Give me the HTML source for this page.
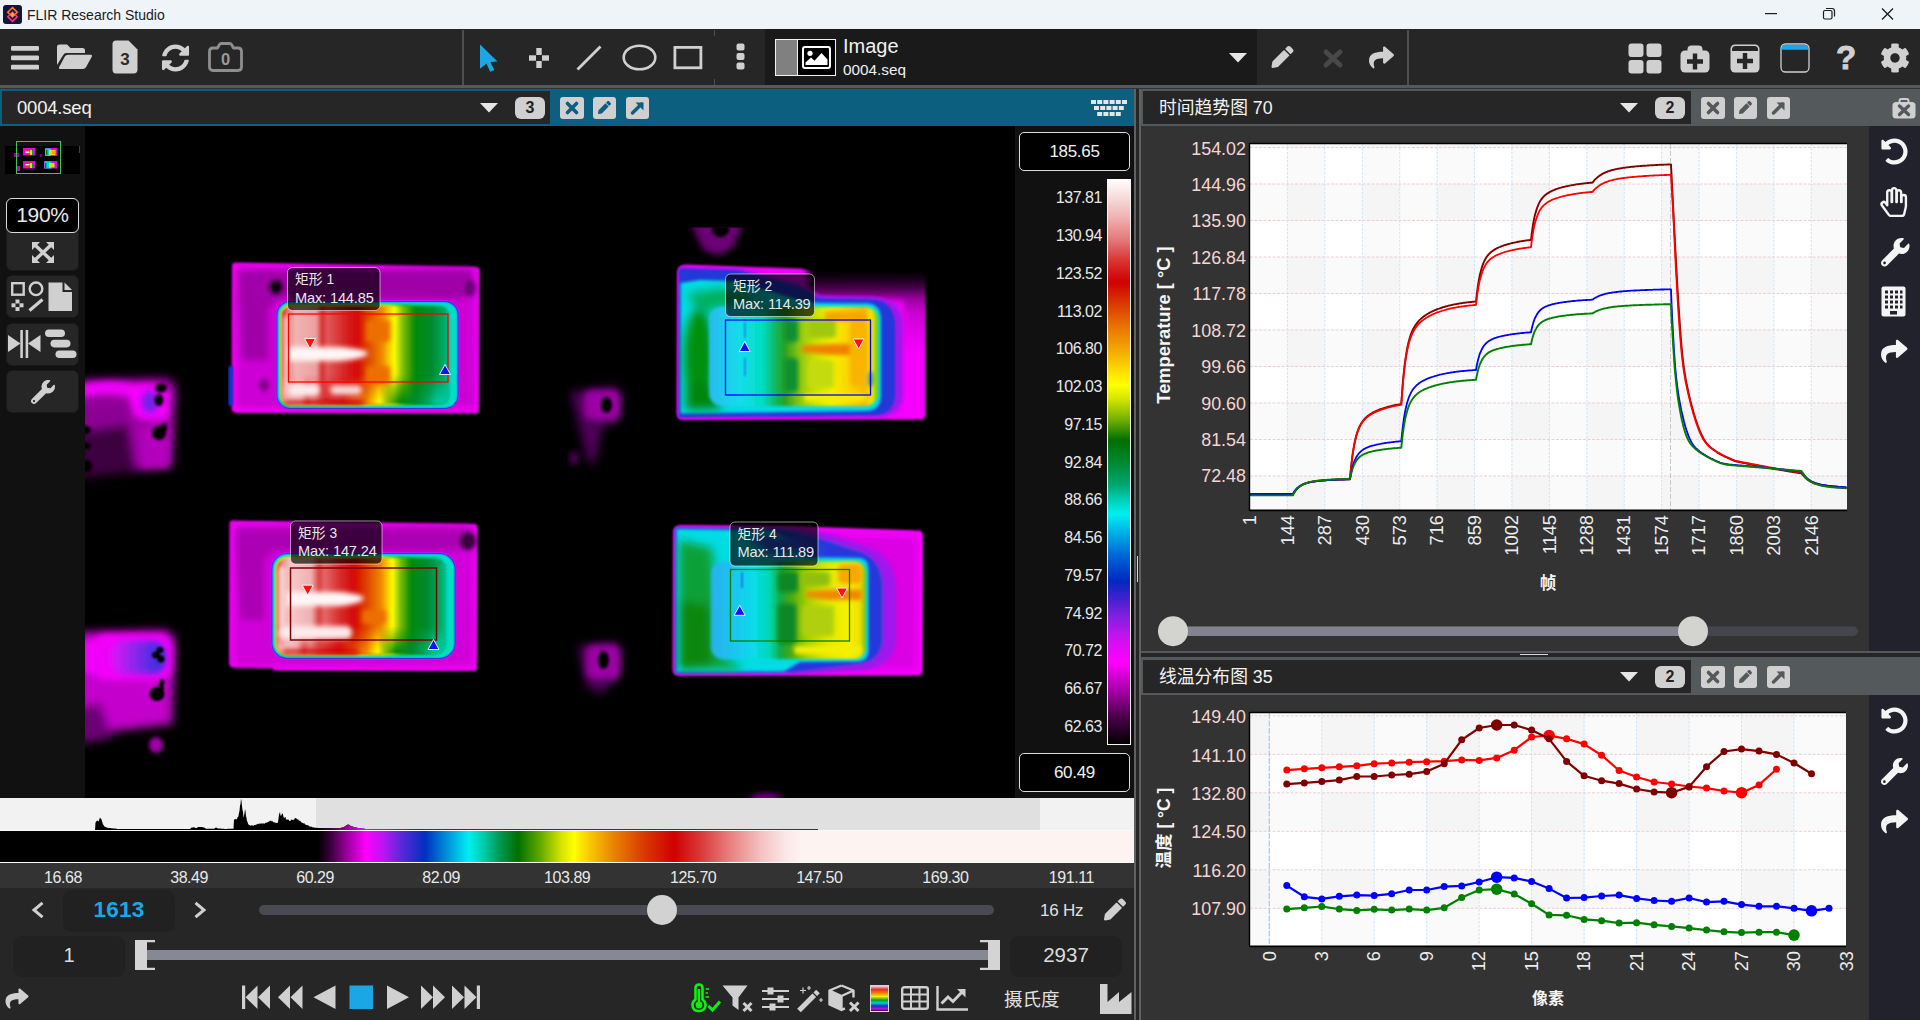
<!DOCTYPE html>
<html lang="zh"><head><meta charset="utf-8"><title>FLIR Research Studio</title>
<style>
*{box-sizing:border-box;margin:0;padding:0}
html,body{width:1920px;height:1020px;overflow:hidden;background:#262626}
body{position:relative;font-family:"Liberation Sans","Noto Sans CJK SC",sans-serif;color:#e6e6e6;font-size:16px}
.a{position:absolute}
.t{position:absolute;white-space:nowrap;line-height:1}
svg{position:absolute;overflow:visible}
.btn{position:absolute;background:#262626;border:1px solid #1a1a1a;border-radius:6px}
.badge{position:absolute;background:#d0d0d0;color:#222;border-radius:6px;font-weight:bold;font-size:16px;text-align:center;line-height:22px}
.sq{position:absolute;width:24px;height:22px;border-radius:3px}
.num{position:absolute;white-space:nowrap;line-height:1;font-size:16px;letter-spacing:-0.45px;text-align:right;color:#e8e8e8}
</style></head><body>
<!-- ===== title bar ===== -->
<div class="a" style="left:0;top:0;width:1920px;height:29px;background:#eff4f9"></div>
<svg style="left:3px;top:5px" width="19" height="19" viewBox="0 0 19 19">
 <rect x="0" y="0" width="19" height="19" rx="3" fill="#15143f"/>
 <path d="M9.5 2.6 L14.2 7.2 L9.5 11.8 L4.8 7.2 Z" fill="none" stroke="#ff7a1a" stroke-width="1.6"/>
 <path d="M9.5 7.2 L14.2 11.8 L9.5 16.4 L4.8 11.8 Z" fill="none" stroke="#ff2d8a" stroke-width="1.6"/>
 <path d="M7.2 9.5 L9.5 7.2 L11.8 9.5 L9.5 11.8 Z" fill="#ffb31a"/>
</svg>
<div class="t" style="left:27px;top:7.500px;font-size:14px;color:#1b1b1b">FLIR Research Studio</div>
<svg style="left:1760px;top:4px" width="140" height="20" viewBox="0 0 140 20">
 <path d="M5 9.600 H17" stroke="#1b1b1b" stroke-width="1.2" fill="none"/>
 <rect x="63.5" y="6.5" width="8.5" height="8.5" rx="1.5" stroke="#1b1b1b" stroke-width="1.2" fill="none"/>
 <path d="M66 4.5 H72 Q74.5 4.5 74.5 7 V12.5" stroke="#1b1b1b" stroke-width="1.2" fill="none"/>
 <path d="M122 4.5 L133 15.5 M133 4.5 L122 15.5" stroke="#1b1b1b" stroke-width="1.3" fill="none"/>
</svg>

<!-- ===== toolbar ===== -->
<div class="a" style="left:0;top:29px;width:1920px;height:56px;background:#262626"></div>
<div class="a" style="left:0;top:85px;width:1920px;height:3px;background:#54595b"></div>
<div class="a" style="left:0;top:88px;width:1920px;height:1px;background:#303436"></div>
<!-- combo dark -->
<div class="a" style="left:765px;top:29px;width:492px;height:56px;background:#1a1a1a"></div>
<!-- separators -->
<div class="a" style="left:462px;top:30px;width:2px;height:55px;background:#4c4f51"></div>
<div class="a" style="left:1407px;top:30px;width:2px;height:55px;background:#4c4f51"></div>
<div class="a" style="left:714px;top:30px;width:1px;height:6px;background:#4c4f51"></div>
<div class="a" style="left:714px;top:79px;width:1px;height:6px;background:#4c4f51"></div>

<!-- hamburger -->
<svg style="left:11px;top:46px" width="28" height="24" viewBox="0 0 28 24" fill="#d0d0d0">
 <rect x="0" y="0" width="28" height="4.8" rx="1.2"/><rect x="0" y="9.4" width="28" height="4.8" rx="1.2"/><rect x="0" y="18.8" width="28" height="4.8" rx="1.2"/>
</svg>
<!-- folder open -->
<svg style="left:57px;top:44px" width="36" height="26" viewBox="0 0 36 26" fill="#d0d0d0">
 <path d="M0 21 V3 Q0 0.5 2.5 0.5 H10 L13.5 4 H25.5 Q28 4 28 6.5 V9 H9.5 Q7.2 9 6.2 11 Z"/>
 <path d="M3.5 25 Q1.2 25 2.2 23 L7.8 12.6 Q8.8 10.8 11 10.8 H33.5 Q35.8 10.8 34.6 12.9 L29 23.2 Q28 25 25.8 25 Z"/>
</svg>
<!-- file 3 -->
<svg style="left:112px;top:40px" width="26" height="34" viewBox="0 0 26 34">
 <path d="M4 0.5 H16.5 L25.5 9.5 V29.5 Q25.5 33.5 21.5 33.5 H4 Q0.5 33.5 0.5 29.5 V4 Q0.5 0.5 4 0.5 Z" fill="#d0d0d0"/>
 <text x="13" y="24.5" font-family="Liberation Sans, sans-serif" font-weight="bold" font-size="17" text-anchor="middle" fill="#2a2a2a">3</text>
</svg>
<!-- refresh -->
<svg style="left:161px;top:44px" width="29" height="28" viewBox="0 0 512 512" fill="#d0d0d0">
 <path d="M370.7 133.3C339.5 104 298.9 88 255.8 88c-77.500.1-144.300 53.200-162.800 126.900-1.300 5.400-6.100 9.200-11.700 9.200H24.100c-7.500 0-13.200-6.800-11.800-14.200C33.900 94.900 134.800 8 256 8c66.400 0 126.800 26.100 171.300 68.700L463 41C478.100 25.900 504 36.600 504 57.900V192c0 13.300-10.700 24-24 24H345.900c-21.400 0-32.100-25.900-17-41l41.800-41.700zM32 296h134.100c21.400 0 32.100 25.900 17 41l-41.800 41.800c31.300 29.300 71.800 45.300 114.900 45.300 77.400-.1 144.300-53.100 162.800-126.800 1.300-5.400 6.100-9.200 11.700-9.200h57.300c7.500 0 13.200 6.800 11.800 14.200C478.100 417.100 377.200 504 256 504c-66.400 0-126.800-26.100-171.300-68.700L49 471c-15.100 15.100-41 4.400-41-16.900V320c0-13.300 10.700-24 24-24z"/>
</svg>
<!-- camera 0 -->
<svg style="left:208px;top:42px" width="35" height="30" viewBox="0 0 35 30">
 <path d="M5 6 H9.500 L11.500 2.500 Q12 1.500 13.500 1.500 H21.500 Q23 1.500 23.500 2.500 L25.500 6 H30 Q33.500 6 33.500 9.500 V25 Q33.500 28.500 30 28.500 H5 Q1.500 28.500 1.500 25 V9.500 Q1.500 6 5 6 Z" fill="none" stroke="#8e8e8e" stroke-width="2.800" stroke-linejoin="round"/>
 <text x="17.500" y="23" font-family="Liberation Sans, sans-serif" font-weight="bold" font-size="16.500" text-anchor="middle" fill="#9a9a9a">0</text>
</svg>

<!-- arrow tool (blue) -->
<svg style="left:479px;top:44px" width="20" height="28" viewBox="0 0 20 28">
 <path d="M1 0.500 L18.500 17.500 L11.300 18 L15.300 26 L11.200 27.800 L7.400 19.600 L1 24.800 Z" fill="#1ba7e6"/>
</svg>
<!-- cross -->
<svg style="left:529px;top:48px" width="20" height="20" viewBox="0 0 20 20" fill="#d0d0d0">
 <rect x="7.300" y="0" width="5.400" height="7"/><rect x="7.300" y="13" width="5.400" height="7"/>
 <rect x="0" y="7.300" width="7" height="5.400"/><rect x="13" y="7.300" width="7" height="5.400"/>
</svg>
<!-- line -->
<svg style="left:576px;top:45px" width="26" height="26" viewBox="0 0 26 26">
 <path d="M1.500 24.500 L24.500 1.500" stroke="#d0d0d0" stroke-width="2.800" fill="none"/>
</svg>
<!-- ellipse -->
<svg style="left:622px;top:44px" width="35" height="27" viewBox="0 0 35 27">
 <ellipse cx="17.500" cy="13.500" rx="15.800" ry="11.800" fill="none" stroke="#d0d0d0" stroke-width="2.600"/>
</svg>
<!-- rect -->
<svg style="left:673px;top:46px" width="30" height="24" viewBox="0 0 30 24">
 <rect x="1.900" y="1.400" width="26" height="20.400" fill="none" stroke="#d0d0d0" stroke-width="2.800"/>
</svg>
<!-- dots -->
<svg style="left:736px;top:43px" width="9" height="28" viewBox="0 0 9 28" fill="#d0d0d0">
 <rect x="0.500" y="0.500" width="8" height="7" rx="2"/><rect x="0.500" y="10" width="8" height="7" rx="2"/><rect x="0.500" y="19.600" width="8" height="7" rx="2"/>
</svg>
<!-- image preview -->
<div class="a" style="left:775px;top:39px;width:61px;height:37px;border:1px solid #f2f2f2;background:#000"></div>
<div class="a" style="left:776px;top:40px;width:21px;height:35px;background:#808080"></div>
<div class="a" style="left:797px;top:40px;width:1px;height:35px;background:#f2f2f2"></div>
<svg style="left:802px;top:46px" width="29" height="23" viewBox="0 0 29 23">
 <rect x="1" y="1" width="27" height="21" rx="2" fill="none" stroke="#fff" stroke-width="2"/>
 <circle cx="8" cy="7.300" r="2.600" fill="#fff"/>
 <path d="M3.500 19 V16.500 L9 11.500 L12.500 14.700 L19.500 7 L25.500 13.500 V19 Z" fill="#fff"/>
</svg>
<div class="t" style="left:843px;top:36px;font-size:20px;color:#f0f0f0">Image</div>
<div class="t" style="left:843px;top:62px;font-size:15.300px;color:#f0f0f0">0004.seq</div>
<!-- combo triangle -->
<svg style="left:1229px;top:53px" width="18" height="10" viewBox="0 0 18 10"><path d="M0 0 H18 L9 9.600 Z" fill="#e6e6e6"/></svg>
<!-- pencil -->
<svg style="left:1271px;top:46px" width="23" height="22" viewBox="0 0 512 512" fill="#d0d0d0">
 <path d="M497.900 142.100l-46.100 46.100c-4.700 4.700-12.300 4.700-17 0l-111-111c-4.700-4.700-4.700-12.300 0-17l46.100-46.100c18.700-18.700 49.100-18.700 67.900 0l60.100 60.100c18.800 18.700 18.800 49.100 0 67.900zM284.200 99.800L21.600 362.400.4 483.900c-2.900 16.400 11.400 30.600 27.800 27.800l121.500-21.300 262.600-262.600c4.700-4.700 4.700-12.300 0-17l-111-111c-4.800-4.700-12.400-4.700-17.100 0z"/>
</svg>
<!-- x dim -->
<svg style="left:1323px;top:49px" width="20" height="19" viewBox="0 0 20 19">
 <path d="M3 3 L17 16 M17 3 L3 16" stroke="#484848" stroke-width="5" fill="none" stroke-linecap="round"/>
</svg>
<!-- share -->
<svg style="left:1367px;top:45px" width="29" height="25" viewBox="0 0 512 512" fill="#d0d0d0">
 <path d="M503.700 189.800L327.700 37.900C312.300 24.500 288 35.300 288 56v80.100C127.400 137.900 0 170.100 0 322.300c0 61.400 39.600 122.300 83.300 154.100 13.700 9.900 33.100-2.500 28.100-18.600C66.100 312.800 133 274.300 288 272.100V360c0 20.700 24.300 31.500 39.700 18.200l176-152c11.100-9.600 11.100-26.800 0-36.400z"/>
</svg>
<!-- grid4 -->
<svg style="left:1628px;top:43px" width="34" height="31" viewBox="0 0 34 31" fill="#d0d0d0">
 <rect x="0.500" y="0.500" width="15" height="13.500" rx="3"/><rect x="18.500" y="0.500" width="15" height="13.500" rx="3"/>
 <rect x="0.500" y="17" width="15" height="13.500" rx="3"/><rect x="18.500" y="17" width="15" height="13.500" rx="3"/>
</svg>
<!-- plus-medical -->
<svg style="left:1680px;top:45px" width="30" height="28" viewBox="0 0 30 28">
 <path d="M7.500 7 V4.500 Q7.500 0.500 11.500 0.500 H18.500 Q22.500 0.500 22.500 4.500 V7 Z" fill="#d0d0d0"/>
 <rect x="0.500" y="5.500" width="29" height="22" rx="4.500" fill="#d0d0d0"/>
 <path d="M15 8.500 V24.500 M7 16.500 H23" stroke="#262626" stroke-width="4.400" fill="none"/>
</svg>
<!-- plus-window -->
<svg style="left:1730px;top:44px" width="30" height="29" viewBox="0 0 30 29">
 <rect x="0.500" y="0.500" width="29" height="28" rx="4.500" fill="#d0d0d0"/>
 <path d="M2 7 V5.500 Q2 2 5.500 2 H24.500 Q28 2 28 5.500 V7 Z" fill="#262626"/>
 <path d="M15 9 V25 M7 17 H23" stroke="#262626" stroke-width="4.400" fill="none"/>
</svg>
<!-- window blue -->
<svg style="left:1780px;top:43px" width="30" height="30" viewBox="0 0 30 30">
 <rect x="1" y="1" width="28" height="28" rx="4.500" fill="#262626" stroke="#d0d0d0" stroke-width="1.300"/>
 <path d="M1.700 6.800 V5.500 Q1.700 1.700 5.500 1.700 H24.500 Q28.300 1.700 28.300 5.500 V6.800 Z" fill="#1ba7e6"/>
</svg>
<!-- question -->
<div class="t" style="left:1836px;top:40.500px;width:19px;text-align:center;font-size:33px;font-weight:bold;color:#d0d0d0;-webkit-text-stroke:0.9px #d0d0d0">?</div>
<!-- gear -->
<svg style="left:1880px;top:43px" width="30" height="30" viewBox="0 0 512 512" fill="#d0d0d0">
 <path d="M487.400 315.700l-42.600-24.600c4.300-23.200 4.300-47 0-70.200l42.600-24.600c4.900-2.800 7.100-8.600 5.500-14-11.100-35.600-30-67.800-54.700-94.600-3.800-4.100-10-5.100-14.800-2.300L380.800 110c-17.900-15.400-38.500-27.300-60.800-35.100V25.800c0-5.600-3.900-10.500-9.400-11.700-36.700-8.200-74.300-7.800-109.200 0-5.500 1.200-9.400 6.100-9.400 11.700V75c-22.200 7.900-42.800 19.800-60.800 35.100L88.700 85.500c-4.900-2.800-11-1.900-14.800 2.300-24.700 26.700-43.600 58.900-54.700 94.600-1.700 5.400.6 11.200 5.500 14L67.300 221c-4.300 23.200-4.300 47 0 70.200l-42.600 24.600c-4.900 2.800-7.100 8.600-5.500 14 11.100 35.600 30 67.800 54.700 94.600 3.800 4.100 10 5.100 14.800 2.300l42.600-24.600c17.900 15.400 38.500 27.300 60.800 35.100v49.200c0 5.600 3.900 10.500 9.400 11.700 36.700 8.200 74.300 7.800 109.200 0 5.500-1.200 9.400-6.100 9.400-11.700v-49.200c22.200-7.900 42.800-19.800 60.800-35.100l42.600 24.600c4.900 2.800 11 1.900 14.800-2.300 24.700-26.700 43.600-58.900 54.700-94.600 1.500-5.500-.7-11.300-5.600-14.100zM256 336c-44.100 0-80-35.900-80-80s35.900-80 80-80 80 35.900 80 80-35.900 80-80 80z"/>
</svg>
<!-- ===== left tab bar ===== -->
<div class="a" style="left:0;top:89px;width:1134px;height:37px;background:#0d5f7f"></div>
<div class="a" style="left:2px;top:91px;width:548px;height:33px;background:#262626"></div>
<div class="t" style="left:17px;top:99px;font-size:18.500px;letter-spacing:-0.200px;color:#f2f2f2">0004.seq</div>
<svg style="left:480px;top:103px" width="18" height="10" viewBox="0 0 18 10"><path d="M0 0 H18 L9 9.600 Z" fill="#e6e6e6"/></svg>
<div class="badge" style="left:515px;top:97px;width:30px;height:22px">3</div>
<div class="sq" style="left:560px;top:97px;background:#d0d0d0"></div>
<svg style="left:565px;top:101px" width="14" height="14" viewBox="0 0 14 14"><path d="M2.500 2.500 L11.500 11.500 M11.500 2.500 L2.500 11.500" stroke="#0d5f7f" stroke-width="3.600" stroke-linecap="round" fill="none"/></svg>
<div class="sq" style="left:593px;top:97px;width:23px;background:#d0d0d0"></div>
<svg style="left:598px;top:101px" width="13" height="13" viewBox="0 0 512 512" fill="#0d5f7f"><path d="M497.900 142.100l-46.100 46.100c-4.700 4.700-12.300 4.700-17 0l-111-111c-4.700-4.700-4.700-12.300 0-17l46.100-46.100c18.700-18.700 49.100-18.700 67.900 0l60.100 60.100c18.800 18.700 18.800 49.100 0 67.900zM284.200 99.800L21.600 362.400.4 483.900c-2.900 16.400 11.400 30.600 27.800 27.800l121.500-21.300 262.600-262.600c4.700-4.700 4.700-12.300 0-17l-111-111c-4.800-4.700-12.400-4.700-17.100 0z"/></svg>
<div class="sq" style="left:626px;top:97px;width:23px;background:#d0d0d0"></div>
<svg style="left:630px;top:101px" width="15" height="14" viewBox="0 0 15 14"><path d="M2.500 12 L11.500 3" stroke="#0d5f7f" stroke-width="3.400" fill="none" stroke-linecap="round"/><path d="M5.500 1.500 H13.500 V9.500 Z" fill="#0d5f7f"/></svg>
<!-- grid dots icon -->
<svg style="left:1091px;top:99.500px" width="37" height="17" viewBox="0 0 37 17" fill="#e6e6e6">
 <rect x="0" y="0" width="5" height="4"/><rect x="6.200" y="0" width="5" height="4"/><rect x="12.400" y="0" width="5" height="4"/><rect x="18.600" y="0" width="5" height="4"/><rect x="24.800" y="0" width="5" height="4"/><rect x="31" y="0" width="5" height="4"/>
 <rect x="3" y="6" width="5" height="4"/><rect x="9.200" y="6" width="5" height="4"/><rect x="15.400" y="6" width="5" height="4"/><rect x="21.600" y="6" width="5" height="4"/><rect x="27.800" y="6" width="5" height="4"/>
 <rect x="6.200" y="12" width="5" height="4"/><rect x="12.400" y="12" width="5" height="4"/><rect x="18.600" y="12" width="5" height="4"/><rect x="24.800" y="12" width="5" height="4"/>
</svg>

<!-- ===== splitter between panels ===== -->
<div class="a" style="left:1134px;top:89px;width:7px;height:931px;background:#262626"></div>
<div class="a" style="left:1134px;top:89px;width:2px;height:931px;background:#606262"></div>
<div class="a" style="left:1139px;top:89px;width:2px;height:931px;background:#606262"></div>
<div class="a" style="left:1137px;top:556px;width:1px;height:26px;background:#d8d8d8"></div>

<!-- ===== right tab bar 1 ===== -->
<div class="a" style="left:1141px;top:89px;width:779px;height:37px;background:#54595b"></div>
<div class="a" style="left:1143px;top:91px;width:548px;height:33px;background:#262626"></div>
<div class="t" style="left:1159px;top:99.500px;font-size:17.800px;color:#f2f2f2">时间趋势图 70</div>
<svg style="left:1620px;top:103px" width="18" height="10" viewBox="0 0 18 10"><path d="M0 0 H18 L9 9.600 Z" fill="#e6e6e6"/></svg>
<div class="badge" style="left:1655px;top:97px;width:30px;height:22px">2</div>
<div class="sq" style="left:1701px;top:97px;background:#d0d0d0"></div>
<svg style="left:1706px;top:101px" width="14" height="14" viewBox="0 0 14 14"><path d="M2.500 2.500 L11.500 11.500 M11.500 2.500 L2.500 11.500" stroke="#54595b" stroke-width="3.600" stroke-linecap="round" fill="none"/></svg>
<div class="sq" style="left:1734px;top:97px;width:23px;background:#d0d0d0"></div>
<svg style="left:1739px;top:101px" width="13" height="13" viewBox="0 0 512 512" fill="#54595b"><path d="M497.900 142.100l-46.100 46.100c-4.700 4.700-12.300 4.700-17 0l-111-111c-4.700-4.700-4.700-12.300 0-17l46.100-46.100c18.700-18.700 49.100-18.700 67.900 0l60.100 60.100c18.800 18.700 18.800 49.100 0 67.900zM284.200 99.800L21.600 362.400.4 483.900c-2.900 16.400 11.400 30.600 27.800 27.800l121.500-21.300 262.600-262.600c4.700-4.700 4.700-12.300 0-17l-111-111c-4.800-4.700-12.400-4.700-17.100 0z"/></svg>
<div class="sq" style="left:1767px;top:97px;width:23px;background:#d0d0d0"></div>
<svg style="left:1771px;top:101px" width="15" height="14" viewBox="0 0 15 14"><path d="M2.500 12 L11.500 3" stroke="#54595b" stroke-width="3.400" fill="none" stroke-linecap="round"/><path d="M5.500 1.500 H13.500 V9.500 Z" fill="#54595b"/></svg>
<!-- close all -->
<svg style="left:1892px;top:98px" width="24" height="21" viewBox="0 0 24 21">
 <path d="M7.500 4.500 V3 Q7.500 1 9.500 1 H14.500 Q16.500 1 16.500 3 V4.500" fill="none" stroke="#d0d0d0" stroke-width="2"/>
 <rect x="0.500" y="4" width="23" height="16.500" rx="3.500" fill="#d0d0d0"/>
 <path d="M7.500 8 L16.500 16.500 M16.500 8 L7.500 16.500" stroke="#54595b" stroke-width="3.400" stroke-linecap="round"/>
</svg>
<div class="a" style="left:0;top:126px;width:85px;height:672px;background:#111"></div>
<div class="a" style="left:5px;top:146px;width:75px;height:28px;background:#000"></div>
<svg style="left:0;top:126px" width="85" height="60" viewBox="0 126 85 60">
<g>
<rect x="23" y="148" width="12" height="7.500" fill="#e800f0"/><rect x="25" y="149.500" width="7" height="5" fill="#f03020"/><rect x="25.500" y="151.500" width="4" height="1.300" fill="#fff"/><rect x="30" y="150" width="2" height="5" fill="#f0e000"/><rect x="32" y="150" width="2" height="5" fill="#00a040"/>
<rect x="23" y="161" width="12" height="7.500" fill="#e800f0"/><rect x="25" y="162.500" width="7" height="5" fill="#f03020"/><rect x="25.500" y="164" width="4" height="1.300" fill="#fff"/><rect x="30" y="163" width="2" height="5" fill="#f0e000"/><rect x="32" y="163" width="2" height="5" fill="#00a040"/>
<rect x="45" y="148" width="12" height="8" fill="#e800f0"/><rect x="45" y="148.500" width="6" height="7.500" fill="#00d8e0"/><rect x="49" y="150" width="6.500" height="5" fill="#e0e000"/><rect x="52" y="151" width="3" height="3" fill="#f0a000"/><rect x="46" y="150" width="1.500" height="5" fill="#008020"/>
<rect x="44" y="161" width="13" height="7.500" fill="#e800f0"/><rect x="44.500" y="161.500" width="7" height="7" fill="#00d8e0"/><rect x="49" y="163" width="5.500" height="4.500" fill="#d0e000"/><rect x="45" y="163" width="1.500" height="5" fill="#008020"/>
<rect x="14" y="153" width="5" height="4" fill="#a000a8"/><rect x="17" y="166" width="3" height="5" fill="#c000c8"/><rect x="79" y="146" width="1" height="7" fill="#a000a8"/><rect x="40" y="154" width="1.500" height="3" fill="#80008a"/>
</g>
<rect x="16.500" y="141.500" width="44" height="32" fill="none" stroke="#3cc84c" stroke-width="1"/>
</svg>
<div class="btn" style="left:6px;top:228px;width:73px;height:43px;border-radius:0 0 6px 6px"></div>
<div class="a" style="left:6px;top:198px;width:73px;height:35px;background:#000;border:1.500px solid #dcdcdc;border-radius:6px"></div>
<div class="t" style="left:6px;top:204px;width:73px;text-align:center;font-size:21px;color:#e8e8e8;letter-spacing:-0.3px">190%</div>
<div class="btn" style="left:6px;top:275px;width:73px;height:43px"></div>
<div class="btn" style="left:6px;top:323px;width:73px;height:43px"></div>
<div class="btn" style="left:6px;top:370px;width:73px;height:43px"></div>
<svg style="left:31.500px;top:242px" width="22" height="21" viewBox="0 0 22 21" fill="#d0d0d0">
<path d="M3 3 L19 18 M19 3 L3 18" stroke="#d0d0d0" stroke-width="3.400" fill="none"/>
<path d="M0 0 H8 L0 8 Z M22 0 H14 L22 8 Z M0 21 H8 L0 13 Z M22 21 H14 L22 13 Z"/></svg>
<svg style="left:10px;top:281px" width="66" height="32" viewBox="0 0 66 32">
<rect x="2.200" y="2.200" width="11.500" height="11.500" fill="none" stroke="#d0d0d0" stroke-width="2.400"/>
<circle cx="26" cy="7.800" r="6.300" fill="none" stroke="#d0d0d0" stroke-width="2.400"/>
<g fill="#d0d0d0"><rect x="5.500" y="18.500" width="4" height="4"/><rect x="5.500" y="26" width="4" height="4"/><rect x="1.500" y="22.300" width="4" height="4"/><rect x="9.500" y="22.300" width="4" height="4"/></g>
<path d="M19.500 29.500 L32.500 18.500" stroke="#d0d0d0" stroke-width="3.200"/>
<path d="M38.500 1.500 H52.500 V11 H62 V30 H38.500 Z" fill="#d0d0d0"/><path d="M54.500 1.500 L62 9 H54.500 Z" fill="#d0d0d0"/>
</svg>
<svg style="left:8px;top:328px" width="69" height="34" viewBox="0 0 69 34" fill="#d0d0d0">
<path d="M0 7 L12.500 15.500 L0 24 Z"/><path d="M32.500 7 L20 15.500 L32.500 24 Z"/><rect x="12.300" y="2" width="2.600" height="28"/><rect x="17.600" y="2" width="2.600" height="28"/>
<rect x="37" y="1.500" width="20" height="7.600" rx="3.800"/><rect x="42.500" y="11.800" width="20" height="7.600" rx="3.800"/><rect x="47.500" y="22.500" width="21" height="7.600" rx="3.800"/>
</svg>
<svg style="left:30.500px;top:380px" width="24" height="24" viewBox="0 0 512 512" fill="#d0d0d0"><path d="M507.73 109.1c-2.240-9.030-13.540-12.090-20.120-5.510l-74.360 74.360-67.880-11.310-11.310-67.880 74.360-74.360c6.620-6.620 3.430-17.900-5.660-20.160-47.380-11.740-99.550.91-136.580 37.930-39.640 39.640-50.550 97.100-34.050 147.200L18.740 402.760c-24.990 24.990-24.990 65.510 0 90.500 24.990 24.990 65.510 24.990 90.500 0l213.210-213.210c50.120 16.710 107.470 5.680 147.370-34.220 37.070-37.070 49.700-89.320 37.910-136.730zM64 472c-13.250 0-24-10.750-24-24 0-13.260 10.750-24 24-24s24 10.740 24 24c0 13.250-10.750 24-24 24z"/></svg>
<div class="a" style="left:1015px;top:126px;width:119px;height:672px;background:#111"></div>
<div class="a" style="left:1019px;top:132px;width:111px;height:39px;background:#000;border:1.500px solid #dcdcdc;border-radius:5px"></div>
<div class="t" style="left:1019px;top:143px;width:111px;text-align:center;font-size:17px;color:#f0f0f0;letter-spacing:-0.3px">185.65</div>
<div class="a" style="left:1019px;top:753px;width:111px;height:39px;background:#000;border:1.500px solid #dcdcdc;border-radius:5px"></div>
<div class="t" style="left:1019px;top:764px;width:111px;text-align:center;font-size:17px;color:#f0f0f0;letter-spacing:-0.3px">60.49</div>
<div class="a" style="left:1107px;top:179px;width:24px;height:566px;background:linear-gradient(to bottom,#ffffff 0.00%,#fbeaea 1.95%,#f0b8b8 6.37%,#e47878 10.80%,#d83030 14.69%,#d00000 18.23%,#d83000 21.42%,#e87000 25.84%,#f4a800 30.27%,#fce000 34.16%,#ffff00 36.46%,#d8e800 38.76%,#70b000 42.65%,#007000 46.19%,#008830 50.09%,#00a870 54.16%,#00d0b8 56.81%,#00f0f0 59.29%,#00b8e8 62.12%,#0068d8 66.55%,#0028c0 71.15%,#4020d0 74.16%,#8020e0 77.35%,#d010f0 81.59%,#ff00ff 85.49%,#a800a8 90.44%,#500050 94.87%,#000000 100.00%);border:1px solid #f4f4f4;border-top:none"></div>
<div class="num" style="left:1030px;top:190.3px;width:72px">137.81</div>
<div class="num" style="left:1030px;top:228.1px;width:72px">130.94</div>
<div class="num" style="left:1030px;top:265.8px;width:72px">123.52</div>
<div class="num" style="left:1030px;top:303.6px;width:72px">113.02</div>
<div class="num" style="left:1030px;top:341.3px;width:72px">106.80</div>
<div class="num" style="left:1030px;top:379.1px;width:72px">102.03</div>
<div class="num" style="left:1030px;top:416.8px;width:72px">97.15</div>
<div class="num" style="left:1030px;top:454.6px;width:72px">92.84</div>
<div class="num" style="left:1030px;top:492.3px;width:72px">88.66</div>
<div class="num" style="left:1030px;top:530.0px;width:72px">84.56</div>
<div class="num" style="left:1030px;top:567.8px;width:72px">79.57</div>
<div class="num" style="left:1030px;top:605.5px;width:72px">74.92</div>
<div class="num" style="left:1030px;top:643.3px;width:72px">70.72</div>
<div class="num" style="left:1030px;top:681.0px;width:72px">66.67</div>
<div class="num" style="left:1030px;top:718.8px;width:72px">62.63</div>
<div class="a" style="left:0;top:798px;width:1134px;height:33px;background:#f2f2f2"></div>
<div class="a" style="left:316px;top:798px;width:724px;height:33px;background:#e0e0e0"></div>
<svg style="left:0;top:798px" width="1135" height="33" viewBox="0 798 1135 33"><defs><linearGradient id="hg" gradientUnits="userSpaceOnUse" x1="318" y1="0" x2="818" y2="0"><stop offset="0.000" stop-color="#000"/><stop offset="0.024" stop-color="#38003a"/><stop offset="0.060" stop-color="#a000a4"/><stop offset="0.096" stop-color="#ff00ff"/><stop offset="0.134" stop-color="#b018f0"/><stop offset="0.168" stop-color="#5828d8"/><stop offset="0.214" stop-color="#0030c0"/><stop offset="0.254" stop-color="#0088d8"/><stop offset="0.302" stop-color="#00f0f0"/><stop offset="0.334" stop-color="#00c8a0"/><stop offset="0.364" stop-color="#009850"/><stop offset="0.400" stop-color="#007000"/><stop offset="0.444" stop-color="#60a800"/><stop offset="0.484" stop-color="#d0e000"/><stop offset="0.512" stop-color="#ffff00"/><stop offset="0.544" stop-color="#f8c800"/><stop offset="0.594" stop-color="#e88000"/><stop offset="0.654" stop-color="#d83800"/><stop offset="0.712" stop-color="#d00000"/><stop offset="0.764" stop-color="#d83838"/><stop offset="0.824" stop-color="#e88080"/><stop offset="0.884" stop-color="#f4c0c0"/><stop offset="1.000" stop-color="#fbe6e6"/></linearGradient><clipPath id="hc"><rect x="318" y="798" width="105" height="33"/></clipPath></defs><path d="M95 830.500 L95.0 830.5 L95.5 822.5 L96.0 821.8 L96.5 821.2 L97.0 820.5 L97.5 820.8 L98.0 821.2 L98.5 821.5 L99.0 820.2 L99.5 818.8 L100.0 817.5 L100.5 818.2 L101.0 818.8 L101.5 819.5 L102.0 821.2 L102.5 822.8 L103.0 824.5 L103.5 825.1 L104.0 825.8 L104.5 826.4 L105.0 827.0 L105.5 827.1 L106.0 827.3 L106.5 827.5 L107.0 827.6 L107.5 827.8 L108.0 827.9 L108.5 828.0 L109.0 828.0 L109.5 828.0 L110.0 828.1 L110.5 828.1 L111.0 828.2 L111.5 828.2 L112.0 828.3 L112.5 828.3 L113.0 828.4 L113.5 828.4 L114.0 828.4 L114.5 828.4 L115.0 828.5 L115.5 828.5 L116.0 828.5 L116.5 828.8 L117.0 829.1 L117.5 829.1 L118.0 829.1 L118.5 829.1 L119.0 829.1 L119.5 829.1 L120.0 829.1 L120.5 829.1 L121.0 829.1 L121.5 829.1 L122.0 829.1 L122.5 829.1 L123.0 829.1 L123.5 829.1 L124.0 829.1 L124.5 829.1 L125.0 829.1 L125.5 829.1 L126.0 829.1 L126.5 829.1 L127.0 829.1 L127.5 829.1 L128.0 829.1 L128.5 829.1 L129.0 829.1 L129.5 829.1 L130.0 829.1 L130.5 829.1 L131.0 829.1 L131.5 829.1 L132.0 829.1 L132.5 829.1 L133.0 829.1 L133.5 829.1 L134.0 829.1 L134.5 829.1 L135.0 829.1 L135.5 829.1 L136.0 829.1 L136.5 829.1 L137.0 829.1 L137.5 829.1 L138.0 829.1 L138.5 829.1 L139.0 829.1 L139.5 829.1 L140.0 829.1 L140.5 829.1 L141.0 829.1 L141.5 829.1 L142.0 829.1 L142.5 829.1 L143.0 829.1 L143.5 829.1 L144.0 829.1 L144.5 829.1 L145.0 829.1 L145.5 829.1 L146.0 829.1 L146.5 829.1 L147.0 829.1 L147.5 829.1 L148.0 829.1 L148.5 829.1 L149.0 829.1 L149.5 829.1 L150.0 829.1 L150.5 829.1 L151.0 829.1 L151.5 829.1 L152.0 829.1 L152.5 829.1 L153.0 829.1 L153.5 829.1 L154.0 829.1 L154.5 829.1 L155.0 829.1 L155.5 829.1 L156.0 829.1 L156.5 829.1 L157.0 829.1 L157.5 829.1 L158.0 829.1 L158.5 829.1 L159.0 829.1 L159.5 829.1 L160.0 829.1 L160.5 829.1 L161.0 829.1 L161.5 829.1 L162.0 829.1 L162.5 829.1 L163.0 829.1 L163.5 829.1 L164.0 829.1 L164.5 829.1 L165.0 829.1 L165.5 829.1 L166.0 829.1 L166.5 829.1 L167.0 829.1 L167.5 829.1 L168.0 829.1 L168.5 829.1 L169.0 829.1 L169.5 829.1 L170.0 829.1 L170.5 829.1 L171.0 829.1 L171.5 829.1 L172.0 829.1 L172.5 829.1 L173.0 829.1 L173.5 829.1 L174.0 829.1 L174.5 829.1 L175.0 829.1 L175.5 829.1 L176.0 829.1 L176.5 829.1 L177.0 829.1 L177.5 829.1 L178.0 829.1 L178.5 829.1 L179.0 829.1 L179.5 829.1 L180.0 829.1 L180.5 829.1 L181.0 829.1 L181.5 829.1 L182.0 829.1 L182.5 829.1 L183.0 829.1 L183.5 829.1 L184.0 829.1 L184.5 829.1 L185.0 829.1 L185.5 829.1 L186.0 829.1 L186.5 829.1 L187.0 829.1 L187.5 829.1 L188.0 829.1 L188.5 829.1 L189.0 829.1 L189.5 829.1 L190.0 829.1 L190.5 828.6 L191.0 828.0 L191.5 827.5 L192.0 827.5 L192.5 827.4 L193.0 827.4 L193.5 827.3 L194.0 827.3 L194.5 827.5 L195.0 827.8 L195.5 828.0 L196.0 828.3 L196.5 828.0 L197.0 827.7 L197.5 827.4 L198.0 827.1 L198.5 827.1 L199.0 827.0 L199.5 827.0 L200.0 827.0 L200.5 826.9 L201.0 826.9 L201.5 827.0 L202.0 827.1 L202.5 827.2 L203.0 827.3 L203.5 827.4 L204.0 827.5 L204.5 827.8 L205.0 828.1 L205.5 828.4 L206.0 828.7 L206.5 828.7 L207.0 828.7 L207.5 828.7 L208.0 828.7 L208.5 828.7 L209.0 828.7 L209.5 828.7 L210.0 828.7 L210.5 828.7 L211.0 828.7 L211.5 828.7 L212.0 828.7 L212.5 828.7 L213.0 828.7 L213.5 828.7 L214.0 828.7 L214.5 828.4 L215.0 828.1 L215.5 827.8 L216.0 827.5 L216.5 827.8 L217.0 828.0 L217.5 828.2 L218.0 828.5 L218.5 828.5 L219.0 828.6 L219.5 828.6 L220.0 828.6 L220.5 828.6 L221.0 828.7 L221.5 828.7 L222.0 828.7 L222.5 828.8 L223.0 828.8 L223.5 828.8 L224.0 828.8 L224.5 828.9 L225.0 828.9 L225.5 828.9 L226.0 828.9 L226.5 828.9 L227.0 828.9 L227.5 828.8 L228.0 828.8 L228.5 828.8 L229.0 828.8 L229.5 828.8 L230.0 828.8 L230.5 828.8 L231.0 828.8 L231.5 828.7 L232.0 828.7 L232.5 828.7 L233.0 828.7 L233.5 828.7 L234.0 819.5 L234.5 819.4 L235.0 819.3 L235.5 819.2 L236.0 819.1 L236.5 819.4 L237.0 819.0 L237.5 816.9 L238.0 817.6 L238.5 815.4 L239.0 812.7 L239.5 810.7 L240.0 805.5 L240.5 803.9 L241.0 798.4 L241.5 801.3 L242.0 806.2 L242.5 810.1 L243.0 812.0 L243.5 817.6 L244.0 815.9 L244.5 813.1 L245.0 809.3 L245.5 811.0 L246.0 816.1 L246.5 818.0 L247.0 821.5 L247.5 821.4 L248.0 823.8 L248.5 824.5 L249.0 825.0 L249.5 825.2 L250.0 825.2 L250.5 825.8 L251.0 825.4 L251.5 825.3 L252.0 825.5 L252.5 825.3 L253.0 825.8 L253.5 825.8 L254.0 825.6 L254.5 824.9 L255.0 825.1 L255.5 825.0 L256.0 824.5 L256.5 824.5 L257.0 824.6 L257.5 823.8 L258.0 823.7 L258.5 824.3 L259.0 823.8 L259.5 823.8 L260.0 823.2 L260.5 823.4 L261.0 823.9 L261.5 822.9 L262.0 824.0 L262.5 823.6 L263.0 823.0 L263.5 823.8 L264.0 823.3 L264.5 823.9 L265.0 822.9 L265.5 822.7 L266.0 822.9 L266.5 822.2 L267.0 822.9 L267.5 822.0 L268.0 822.0 L268.5 821.8 L269.0 821.8 L269.5 820.9 L270.0 820.4 L270.5 821.1 L271.0 820.5 L271.5 821.5 L272.0 820.6 L272.5 821.5 L273.0 821.7 L273.5 822.0 L274.0 822.8 L274.5 822.6 L275.0 822.1 L275.5 823.2 L276.0 822.4 L276.5 822.9 L277.0 823.0 L277.5 823.0 L278.0 821.9 L278.5 818.8 L279.0 814.4 L279.5 813.3 L280.0 811.7 L280.5 815.6 L281.0 815.7 L281.5 815.0 L282.0 813.6 L282.5 813.5 L283.0 814.4 L283.5 817.1 L284.0 817.7 L284.5 818.1 L285.0 817.0 L285.5 817.1 L286.0 819.3 L286.5 819.5 L287.0 819.6 L287.5 819.8 L288.0 819.5 L288.5 819.6 L289.0 820.5 L289.5 821.3 L290.0 820.7 L290.5 820.7 L291.0 820.2 L291.5 819.3 L292.0 819.8 L292.5 820.1 L293.0 819.8 L293.5 819.4 L294.0 820.6 L294.5 818.5 L295.0 818.6 L295.5 818.1 L296.0 818.1 L296.5 818.8 L297.0 818.9 L297.5 819.8 L298.0 818.8 L298.5 820.3 L299.0 820.5 L299.5 820.5 L300.0 821.0 L300.5 821.1 L301.0 822.0 L301.5 822.5 L302.0 822.6 L302.5 823.0 L303.0 822.9 L303.5 823.7 L304.0 822.8 L304.5 823.5 L305.0 824.5 L305.5 824.6 L306.0 824.7 L306.5 824.9 L307.0 825.4 L307.5 824.9 L308.0 825.0 L308.5 825.7 L309.0 825.9 L309.5 826.5 L310.0 826.6 L310.5 826.6 L311.0 826.9 L311.5 826.6 L312.0 827.2 L312.5 827.4 L313.0 826.9 L313.5 827.3 L314.0 827.7 L314.5 827.5 L315.0 827.9 L315.5 827.6 L316.0 827.7 L316.5 827.8 L317.0 827.8 L317.5 827.9 L318.0 827.9 L318.5 827.9 L319.0 827.9 L319.5 827.9 L320.0 827.9 L320.5 827.9 L321.0 827.9 L321.5 827.9 L322.0 827.9 L322.5 827.9 L323.0 827.9 L323.5 827.9 L324.0 827.9 L324.5 827.9 L325.0 827.9 L325.5 827.9 L326.0 828.0 L326.5 828.0 L327.0 828.0 L327.5 828.0 L328.0 828.1 L328.5 828.1 L329.0 828.1 L329.5 828.2 L330.0 828.2 L330.5 828.2 L331.0 828.2 L331.5 828.3 L332.0 828.3 L332.5 828.3 L333.0 828.3 L333.5 828.3 L334.0 828.2 L334.5 828.2 L335.0 828.2 L335.5 828.2 L336.0 828.2 L336.5 828.2 L337.0 828.2 L337.5 828.2 L338.0 828.1 L338.5 828.1 L339.0 828.1 L339.5 828.1 L340.0 828.1 L340.5 828.0 L341.0 827.8 L341.5 827.7 L342.0 827.5 L342.5 827.4 L343.0 827.3 L343.5 827.1 L344.0 827.0 L344.5 826.7 L345.0 826.3 L345.5 826.0 L346.0 825.6 L346.5 825.3 L347.0 825.0 L347.5 824.7 L348.0 824.5 L348.5 824.4 L349.0 824.8 L349.5 825.1 L350.0 825.5 L350.5 825.7 L351.0 825.9 L351.5 826.1 L352.0 826.3 L352.5 826.5 L353.0 826.7 L353.5 826.8 L354.0 827.0 L354.5 827.1 L355.0 827.2 L355.5 827.3 L356.0 827.5 L356.5 827.6 L357.0 827.7 L357.5 827.8 L358.0 827.9 L358.5 827.9 L359.0 828.0 L359.5 828.1 L360.0 828.2 L360.5 828.3 L361.0 828.3 L361.5 828.4 L362.0 828.5 L362.5 828.5 L363.0 828.6 L363.5 828.6 L364.0 828.7 L364.5 828.8 L365.0 828.8 L365.5 828.9 L366.0 828.9 L366.5 829.0 L367.0 829.0 L367.5 829.0 L368.0 829.1 L368.5 829.1 L369.0 829.2 L369.5 829.2 L370.0 829.3 L818.0 829.3 L818 829.300 L818 830.500 Z" fill="#000"/><path d="M95 830.500 L95.0 830.5 L95.5 822.5 L96.0 821.8 L96.5 821.2 L97.0 820.5 L97.5 820.8 L98.0 821.2 L98.5 821.5 L99.0 820.2 L99.5 818.8 L100.0 817.5 L100.5 818.2 L101.0 818.8 L101.5 819.5 L102.0 821.2 L102.5 822.8 L103.0 824.5 L103.5 825.1 L104.0 825.8 L104.5 826.4 L105.0 827.0 L105.5 827.1 L106.0 827.3 L106.5 827.5 L107.0 827.6 L107.5 827.8 L108.0 827.9 L108.5 828.0 L109.0 828.0 L109.5 828.0 L110.0 828.1 L110.5 828.1 L111.0 828.2 L111.5 828.2 L112.0 828.3 L112.5 828.3 L113.0 828.4 L113.5 828.4 L114.0 828.4 L114.5 828.4 L115.0 828.5 L115.5 828.5 L116.0 828.5 L116.5 828.8 L117.0 829.1 L117.5 829.1 L118.0 829.1 L118.5 829.1 L119.0 829.1 L119.5 829.1 L120.0 829.1 L120.5 829.1 L121.0 829.1 L121.5 829.1 L122.0 829.1 L122.5 829.1 L123.0 829.1 L123.5 829.1 L124.0 829.1 L124.5 829.1 L125.0 829.1 L125.5 829.1 L126.0 829.1 L126.5 829.1 L127.0 829.1 L127.5 829.1 L128.0 829.1 L128.5 829.1 L129.0 829.1 L129.5 829.1 L130.0 829.1 L130.5 829.1 L131.0 829.1 L131.5 829.1 L132.0 829.1 L132.5 829.1 L133.0 829.1 L133.5 829.1 L134.0 829.1 L134.5 829.1 L135.0 829.1 L135.5 829.1 L136.0 829.1 L136.5 829.1 L137.0 829.1 L137.5 829.1 L138.0 829.1 L138.5 829.1 L139.0 829.1 L139.5 829.1 L140.0 829.1 L140.5 829.1 L141.0 829.1 L141.5 829.1 L142.0 829.1 L142.5 829.1 L143.0 829.1 L143.5 829.1 L144.0 829.1 L144.5 829.1 L145.0 829.1 L145.5 829.1 L146.0 829.1 L146.5 829.1 L147.0 829.1 L147.5 829.1 L148.0 829.1 L148.5 829.1 L149.0 829.1 L149.5 829.1 L150.0 829.1 L150.5 829.1 L151.0 829.1 L151.5 829.1 L152.0 829.1 L152.5 829.1 L153.0 829.1 L153.5 829.1 L154.0 829.1 L154.5 829.1 L155.0 829.1 L155.5 829.1 L156.0 829.1 L156.5 829.1 L157.0 829.1 L157.5 829.1 L158.0 829.1 L158.5 829.1 L159.0 829.1 L159.5 829.1 L160.0 829.1 L160.5 829.1 L161.0 829.1 L161.5 829.1 L162.0 829.1 L162.5 829.1 L163.0 829.1 L163.5 829.1 L164.0 829.1 L164.5 829.1 L165.0 829.1 L165.5 829.1 L166.0 829.1 L166.5 829.1 L167.0 829.1 L167.5 829.1 L168.0 829.1 L168.5 829.1 L169.0 829.1 L169.5 829.1 L170.0 829.1 L170.5 829.1 L171.0 829.1 L171.5 829.1 L172.0 829.1 L172.5 829.1 L173.0 829.1 L173.5 829.1 L174.0 829.1 L174.5 829.1 L175.0 829.1 L175.5 829.1 L176.0 829.1 L176.5 829.1 L177.0 829.1 L177.5 829.1 L178.0 829.1 L178.5 829.1 L179.0 829.1 L179.5 829.1 L180.0 829.1 L180.5 829.1 L181.0 829.1 L181.5 829.1 L182.0 829.1 L182.5 829.1 L183.0 829.1 L183.5 829.1 L184.0 829.1 L184.5 829.1 L185.0 829.1 L185.5 829.1 L186.0 829.1 L186.5 829.1 L187.0 829.1 L187.5 829.1 L188.0 829.1 L188.5 829.1 L189.0 829.1 L189.5 829.1 L190.0 829.1 L190.5 828.6 L191.0 828.0 L191.5 827.5 L192.0 827.5 L192.5 827.4 L193.0 827.4 L193.5 827.3 L194.0 827.3 L194.5 827.5 L195.0 827.8 L195.5 828.0 L196.0 828.3 L196.5 828.0 L197.0 827.7 L197.5 827.4 L198.0 827.1 L198.5 827.1 L199.0 827.0 L199.5 827.0 L200.0 827.0 L200.5 826.9 L201.0 826.9 L201.5 827.0 L202.0 827.1 L202.5 827.2 L203.0 827.3 L203.5 827.4 L204.0 827.5 L204.5 827.8 L205.0 828.1 L205.5 828.4 L206.0 828.7 L206.5 828.7 L207.0 828.7 L207.5 828.7 L208.0 828.7 L208.5 828.7 L209.0 828.7 L209.5 828.7 L210.0 828.7 L210.5 828.7 L211.0 828.7 L211.5 828.7 L212.0 828.7 L212.5 828.7 L213.0 828.7 L213.5 828.7 L214.0 828.7 L214.5 828.4 L215.0 828.1 L215.5 827.8 L216.0 827.5 L216.5 827.8 L217.0 828.0 L217.5 828.2 L218.0 828.5 L218.5 828.5 L219.0 828.6 L219.5 828.6 L220.0 828.6 L220.5 828.6 L221.0 828.7 L221.5 828.7 L222.0 828.7 L222.5 828.8 L223.0 828.8 L223.5 828.8 L224.0 828.8 L224.5 828.9 L225.0 828.9 L225.5 828.9 L226.0 828.9 L226.5 828.9 L227.0 828.9 L227.5 828.8 L228.0 828.8 L228.5 828.8 L229.0 828.8 L229.5 828.8 L230.0 828.8 L230.5 828.8 L231.0 828.8 L231.5 828.7 L232.0 828.7 L232.5 828.7 L233.0 828.7 L233.5 828.7 L234.0 819.5 L234.5 819.4 L235.0 819.3 L235.5 819.2 L236.0 819.1 L236.5 819.4 L237.0 819.0 L237.5 816.9 L238.0 817.6 L238.5 815.4 L239.0 812.7 L239.5 810.7 L240.0 805.5 L240.5 803.9 L241.0 798.4 L241.5 801.3 L242.0 806.2 L242.5 810.1 L243.0 812.0 L243.5 817.6 L244.0 815.9 L244.5 813.1 L245.0 809.3 L245.5 811.0 L246.0 816.1 L246.5 818.0 L247.0 821.5 L247.5 821.4 L248.0 823.8 L248.5 824.5 L249.0 825.0 L249.5 825.2 L250.0 825.2 L250.5 825.8 L251.0 825.4 L251.5 825.3 L252.0 825.5 L252.5 825.3 L253.0 825.8 L253.5 825.8 L254.0 825.6 L254.5 824.9 L255.0 825.1 L255.5 825.0 L256.0 824.5 L256.5 824.5 L257.0 824.6 L257.5 823.8 L258.0 823.7 L258.5 824.3 L259.0 823.8 L259.5 823.8 L260.0 823.2 L260.5 823.4 L261.0 823.9 L261.5 822.9 L262.0 824.0 L262.5 823.6 L263.0 823.0 L263.5 823.8 L264.0 823.3 L264.5 823.9 L265.0 822.9 L265.5 822.7 L266.0 822.9 L266.5 822.2 L267.0 822.9 L267.5 822.0 L268.0 822.0 L268.5 821.8 L269.0 821.8 L269.5 820.9 L270.0 820.4 L270.5 821.1 L271.0 820.5 L271.5 821.5 L272.0 820.6 L272.5 821.5 L273.0 821.7 L273.5 822.0 L274.0 822.8 L274.5 822.6 L275.0 822.1 L275.5 823.2 L276.0 822.4 L276.5 822.9 L277.0 823.0 L277.5 823.0 L278.0 821.9 L278.5 818.8 L279.0 814.4 L279.5 813.3 L280.0 811.7 L280.5 815.6 L281.0 815.7 L281.5 815.0 L282.0 813.6 L282.5 813.5 L283.0 814.4 L283.5 817.1 L284.0 817.7 L284.5 818.1 L285.0 817.0 L285.5 817.1 L286.0 819.3 L286.5 819.5 L287.0 819.6 L287.5 819.8 L288.0 819.5 L288.5 819.6 L289.0 820.5 L289.5 821.3 L290.0 820.7 L290.5 820.7 L291.0 820.2 L291.5 819.3 L292.0 819.8 L292.5 820.1 L293.0 819.8 L293.5 819.4 L294.0 820.6 L294.5 818.5 L295.0 818.6 L295.5 818.1 L296.0 818.1 L296.5 818.8 L297.0 818.9 L297.5 819.8 L298.0 818.8 L298.5 820.3 L299.0 820.5 L299.5 820.5 L300.0 821.0 L300.5 821.1 L301.0 822.0 L301.5 822.5 L302.0 822.6 L302.5 823.0 L303.0 822.9 L303.5 823.7 L304.0 822.8 L304.5 823.5 L305.0 824.5 L305.5 824.6 L306.0 824.7 L306.5 824.9 L307.0 825.4 L307.5 824.9 L308.0 825.0 L308.5 825.7 L309.0 825.9 L309.5 826.5 L310.0 826.6 L310.5 826.6 L311.0 826.9 L311.5 826.6 L312.0 827.2 L312.5 827.4 L313.0 826.9 L313.5 827.3 L314.0 827.7 L314.5 827.5 L315.0 827.9 L315.5 827.6 L316.0 827.7 L316.5 827.8 L317.0 827.8 L317.5 827.9 L318.0 827.9 L318.5 827.9 L319.0 827.9 L319.5 827.9 L320.0 827.9 L320.5 827.9 L321.0 827.9 L321.5 827.9 L322.0 827.9 L322.5 827.9 L323.0 827.9 L323.5 827.9 L324.0 827.9 L324.5 827.9 L325.0 827.9 L325.5 827.9 L326.0 828.0 L326.5 828.0 L327.0 828.0 L327.5 828.0 L328.0 828.1 L328.5 828.1 L329.0 828.1 L329.5 828.2 L330.0 828.2 L330.5 828.2 L331.0 828.2 L331.5 828.3 L332.0 828.3 L332.5 828.3 L333.0 828.3 L333.5 828.3 L334.0 828.2 L334.5 828.2 L335.0 828.2 L335.5 828.2 L336.0 828.2 L336.5 828.2 L337.0 828.2 L337.5 828.2 L338.0 828.1 L338.5 828.1 L339.0 828.1 L339.5 828.1 L340.0 828.1 L340.5 828.0 L341.0 827.8 L341.5 827.7 L342.0 827.5 L342.5 827.4 L343.0 827.3 L343.5 827.1 L344.0 827.0 L344.5 826.7 L345.0 826.3 L345.5 826.0 L346.0 825.6 L346.5 825.3 L347.0 825.0 L347.5 824.7 L348.0 824.5 L348.5 824.4 L349.0 824.8 L349.5 825.1 L350.0 825.5 L350.5 825.7 L351.0 825.9 L351.5 826.1 L352.0 826.3 L352.5 826.5 L353.0 826.7 L353.5 826.8 L354.0 827.0 L354.5 827.1 L355.0 827.2 L355.5 827.3 L356.0 827.5 L356.5 827.6 L357.0 827.7 L357.5 827.8 L358.0 827.9 L358.5 827.9 L359.0 828.0 L359.5 828.1 L360.0 828.2 L360.5 828.3 L361.0 828.3 L361.5 828.4 L362.0 828.5 L362.5 828.5 L363.0 828.6 L363.5 828.6 L364.0 828.7 L364.5 828.8 L365.0 828.8 L365.5 828.9 L366.0 828.9 L366.5 829.0 L367.0 829.0 L367.5 829.0 L368.0 829.1 L368.5 829.1 L369.0 829.2 L369.5 829.2 L370.0 829.3 L818.0 829.3 L818 829.300 L818 830.500 Z" fill="url(#hg)" clip-path="url(#hc)"/></svg>
<div class="a" style="left:0;top:830px;width:1134px;height:1px;background:#fafafa"></div>
<div class="a" style="left:0;top:831px;width:1134px;height:31px;background:linear-gradient(to right,#000 0px,#000 318px,#38003a 330px,#a000a4 348px,#ff00ff 366px,#b018f0 385px,#5828d8 402px,#0030c0 425px,#0088d8 445px,#00f0f0 469px,#00c8a0 485px,#009850 500px,#007000 518px,#60a800 540px,#d0e000 560px,#ffff00 574px,#f8c800 590px,#e88000 615px,#d83800 645px,#d00000 674px,#d83838 700px,#e88080 730px,#f4c0c0 760px,#fbe6e6 785px,#fdf4f2 802px,#fdf4f2 1134px)"></div>
<div class="a" style="left:0;top:862px;width:1134px;height:1px;background:#fafafa"></div>
<div class="a" style="left:0;top:863px;width:1134px;height:25px;background:#333"></div>
<div class="num" style="left:23.0px;top:870px;width:80px;text-align:center">16.68</div>
<div class="num" style="left:149.1px;top:870px;width:80px;text-align:center">38.49</div>
<div class="num" style="left:275.1px;top:870px;width:80px;text-align:center">60.29</div>
<div class="num" style="left:401.1px;top:870px;width:80px;text-align:center">82.09</div>
<div class="num" style="left:527.2px;top:870px;width:80px;text-align:center">103.89</div>
<div class="num" style="left:653.2px;top:870px;width:80px;text-align:center">125.70</div>
<div class="num" style="left:779.3px;top:870px;width:80px;text-align:center">147.50</div>
<div class="num" style="left:905.4px;top:870px;width:80px;text-align:center">169.30</div>
<div class="num" style="left:1031.4px;top:870px;width:80px;text-align:center">191.11</div>
<svg style="left:85px;top:126px" width="930" height="672" viewBox="85 126 930 672">
<defs>
<filter id="b07" x="-10%" y="-10%" width="120%" height="120%"><feGaussianBlur stdDeviation="0.7"/></filter>
<filter id="b1" x="-10%" y="-10%" width="120%" height="120%"><feGaussianBlur stdDeviation="1.1"/></filter>
<filter id="b15" x="-10%" y="-10%" width="120%" height="120%"><feGaussianBlur stdDeviation="1.6"/></filter>
<filter id="b2" x="-20%" y="-20%" width="140%" height="140%"><feGaussianBlur stdDeviation="2.2"/></filter>
<filter id="b25" x="-20%" y="-20%" width="140%" height="140%"><feGaussianBlur stdDeviation="2.8"/></filter>
<filter id="b3" x="-20%" y="-20%" width="140%" height="140%"><feGaussianBlur stdDeviation="3.2"/></filter>
<filter id="b5" x="-30%" y="-30%" width="160%" height="160%"><feGaussianBlur stdDeviation="5"/></filter>
<filter id="b8" x="-40%" y="-40%" width="180%" height="180%"><feGaussianBlur stdDeviation="8"/></filter>
<clipPath id="clipe"><rect x="680" y="227.500" width="80" height="45"/></clipPath>
<clipPath id="cb2"><path d="M686 264.500 L800 268.500 L815 271.500 L922 273.500 Q925.500 273.500 925.500 277 L925.500 415 Q925 419.500 920 419.500 L683 420 Q676.500 419.500 676.500 413 L677 273 Q677 264.500 686 264.500 Z"/></clipPath>
<clipPath id="cb4"><path d="M681 525 L790 526 L919 530.500 Q923 531 923 535 L922.500 671 Q922 675.500 918 675.500 L679 676 Q672.500 675.500 672.500 669 L673 533 Q673 525 681 525 Z"/></clipPath>
<clipPath id="clipimg"><rect x="85" y="126" width="930" height="672"/></clipPath>
<linearGradient id="hot1" gradientUnits="userSpaceOnUse" x1="282" y1="0" x2="452" y2="0">
 <stop offset="0" stop-color="#d81818"/><stop offset="0.035" stop-color="#e87878"/><stop offset="0.08" stop-color="#f2b4b4"/><stop offset="0.2" stop-color="#eda0a0"/><stop offset="0.235" stop-color="#d83030"/><stop offset="0.27" stop-color="#e05858"/><stop offset="0.36" stop-color="#d82828"/><stop offset="0.44" stop-color="#d40808"/>
 <stop offset="0.51" stop-color="#e04800"/><stop offset="0.59" stop-color="#f08a00"/><stop offset="0.66" stop-color="#ffff00"/><stop offset="0.71" stop-color="#80c000"/>
 <stop offset="0.78" stop-color="#078a08"/><stop offset="0.88" stop-color="#008a30"/><stop offset="0.95" stop-color="#00a860"/><stop offset="1" stop-color="#00c8a0"/>
</linearGradient>
<linearGradient id="hot1r" gradientUnits="userSpaceOnUse" x1="280" y1="0" x2="454" y2="0">
 <stop offset="0" stop-color="#f0e000"/><stop offset="0.5" stop-color="#f0e000"/><stop offset="0.62" stop-color="#c0e000"/><stop offset="0.72" stop-color="#20b040"/><stop offset="0.85" stop-color="#00c890"/><stop offset="1" stop-color="#00e0d8"/>
</linearGradient>
<linearGradient id="hot3" gradientUnits="userSpaceOnUse" x1="277" y1="0" x2="448" y2="0">
 <stop offset="0" stop-color="#d81818"/><stop offset="0.035" stop-color="#ec8c8c"/><stop offset="0.08" stop-color="#f6c8c8"/><stop offset="0.2" stop-color="#f0b0b0"/><stop offset="0.245" stop-color="#dc4040"/><stop offset="0.28" stop-color="#e46868"/><stop offset="0.36" stop-color="#da3030"/><stop offset="0.45" stop-color="#d40808"/>
 <stop offset="0.53" stop-color="#e04800"/><stop offset="0.61" stop-color="#f08a00"/><stop offset="0.675" stop-color="#ffff00"/><stop offset="0.72" stop-color="#80c000"/>
 <stop offset="0.78" stop-color="#078a08"/><stop offset="0.88" stop-color="#008a30"/><stop offset="0.95" stop-color="#00a860"/><stop offset="1" stop-color="#00c8a0"/>
</linearGradient>
<linearGradient id="hot3r" gradientUnits="userSpaceOnUse" x1="275" y1="0" x2="450" y2="0">
 <stop offset="0" stop-color="#f0e000"/><stop offset="0.5" stop-color="#f0e000"/><stop offset="0.62" stop-color="#c0e000"/><stop offset="0.72" stop-color="#20b040"/><stop offset="0.85" stop-color="#00c890"/><stop offset="1" stop-color="#00e0d8"/>
</linearGradient>
<linearGradient id="body2" gradientUnits="userSpaceOnUse" x1="709" y1="0" x2="878" y2="0">
 <stop offset="0" stop-color="#28bcec"/><stop offset="0.10" stop-color="#20ccee"/><stop offset="0.2" stop-color="#10e0e8"/><stop offset="0.32" stop-color="#00dcc0"/><stop offset="0.39" stop-color="#10b860"/><stop offset="0.45" stop-color="#28a020"/>
 <stop offset="0.53" stop-color="#88c410"/><stop offset="0.62" stop-color="#c8e000"/><stop offset="0.72" stop-color="#f4f000"/><stop offset="0.83" stop-color="#fcd400"/><stop offset="0.92" stop-color="#f8b800"/><stop offset="0.965" stop-color="#f4e800"/><stop offset="1" stop-color="#60c020"/>
</linearGradient>
<linearGradient id="body4" gradientUnits="userSpaceOnUse" x1="711" y1="0" x2="866" y2="0">
 <stop offset="0" stop-color="#28b0ec"/><stop offset="0.14" stop-color="#1cc4f0"/><stop offset="0.28" stop-color="#08dce8"/><stop offset="0.38" stop-color="#00d8b0"/><stop offset="0.45" stop-color="#10a840"/>
 <stop offset="0.52" stop-color="#4ca810"/><stop offset="0.62" stop-color="#a8d000"/><stop offset="0.75" stop-color="#e0e800"/><stop offset="0.88" stop-color="#f8f000"/><stop offset="0.96" stop-color="#f0e000"/><stop offset="1" stop-color="#60c020"/>
</linearGradient>
<linearGradient id="hz2" gradientUnits="userSpaceOnUse" x1="0" y1="262" x2="0" y2="350"><stop offset="0" stop-color="#000" stop-opacity="1"/><stop offset="0.16" stop-color="#000" stop-opacity="0.95"/><stop offset="0.3" stop-color="#000" stop-opacity="0.7"/><stop offset="0.42" stop-color="#000" stop-opacity="0.35"/><stop offset="0.6" stop-color="#000" stop-opacity="0.15"/><stop offset="1" stop-color="#000" stop-opacity="0"/></linearGradient>
<linearGradient id="bz" gradientUnits="userSpaceOnUse" x1="108" y1="0" x2="160" y2="0"><stop offset="0" stop-color="#e814f6"/><stop offset="0.45" stop-color="#9824ec"/><stop offset="1" stop-color="#3830e0"/></linearGradient>
<linearGradient id="haze2" x1="0" y1="0" x2="0" y2="1"><stop offset="0" stop-color="#000"/><stop offset="0.45" stop-color="#2a002e"/><stop offset="1" stop-color="#a000a8"/></linearGradient>
<linearGradient id="hot1s" gradientUnits="userSpaceOnUse" x1="267" y1="0" x2="437" y2="0">
 <stop offset="0" stop-color="#d81818"/><stop offset="0.035" stop-color="#e87878"/><stop offset="0.08" stop-color="#f2b4b4"/><stop offset="0.2" stop-color="#eda0a0"/><stop offset="0.235" stop-color="#d83030"/><stop offset="0.27" stop-color="#e05858"/><stop offset="0.36" stop-color="#d82828"/><stop offset="0.44" stop-color="#d40808"/>
 <stop offset="0.51" stop-color="#e04800"/><stop offset="0.59" stop-color="#f08a00"/><stop offset="0.66" stop-color="#ffff00"/><stop offset="0.71" stop-color="#80c000"/>
 <stop offset="0.78" stop-color="#078a08"/><stop offset="0.88" stop-color="#008a30"/><stop offset="0.95" stop-color="#00a860"/><stop offset="1" stop-color="#00c8a0"/>
</linearGradient>
<linearGradient id="hot3s" gradientUnits="userSpaceOnUse" x1="262" y1="0" x2="433" y2="0">
 <stop offset="0" stop-color="#d81818"/><stop offset="0.035" stop-color="#ec8c8c"/><stop offset="0.08" stop-color="#f6c8c8"/><stop offset="0.2" stop-color="#f0b0b0"/><stop offset="0.245" stop-color="#dc4040"/><stop offset="0.28" stop-color="#e46868"/><stop offset="0.36" stop-color="#da3030"/><stop offset="0.45" stop-color="#d40808"/>
 <stop offset="0.53" stop-color="#e04800"/><stop offset="0.61" stop-color="#f08a00"/><stop offset="0.675" stop-color="#ffff00"/><stop offset="0.72" stop-color="#80c000"/>
 <stop offset="0.78" stop-color="#078a08"/><stop offset="0.88" stop-color="#008a30"/><stop offset="0.95" stop-color="#00a860"/><stop offset="1" stop-color="#00c8a0"/>
</linearGradient>
<linearGradient id="vf1" gradientUnits="userSpaceOnUse" x1="0" y1="374" x2="0" y2="402"><stop offset="0" stop-color="#fff" stop-opacity="0"/><stop offset="1" stop-color="#fff" stop-opacity="1"/></linearGradient>
<linearGradient id="vf3" gradientUnits="userSpaceOnUse" x1="0" y1="626" x2="0" y2="652"><stop offset="0" stop-color="#fff" stop-opacity="0"/><stop offset="1" stop-color="#fff" stop-opacity="1"/></linearGradient>
<mask id="hot1m" maskUnits="userSpaceOnUse" x="268" y="370" width="200" height="50"><rect x="268" y="370" width="200" height="50" fill="url(#vf1)"/></mask>
<mask id="hot3m" maskUnits="userSpaceOnUse" x="264" y="620" width="200" height="50"><rect x="264" y="620" width="200" height="50" fill="url(#vf3)"/></mask>
</defs>
<rect x="85" y="126" width="930" height="672" fill="#000"/>
<g clip-path="url(#clipimg)">
<g filter="url(#b5)">
<path d="M78 380 L166 378 Q176 380 176 392 L172 468 L78 474 Z" fill="#a000a8"/>
<path d="M78 432 L128 420 L136 472 L78 478 Z" fill="#3c0040"/>
<path d="M78 402 L128 400 L130 424 L78 432 Z" fill="#8c0094"/>
</g>
<g filter="url(#b3)">
<path d="M80 385 Q110 378 134 384 Q160 380 170 392 L168 418 Q150 424 134 416 L128 396 Q104 390 80 398 Z" fill="#f400fc"/>
<path d="M140 430 L170 424 L168 466 L142 468 Z" fill="#b400bc"/>
</g>
<g filter="url(#b3)"><ellipse cx="150" cy="402" rx="8" ry="11" fill="#7020e8"/></g>
<g filter="url(#b15)"><ellipse cx="161" cy="388" rx="6" ry="4.500" fill="#000"/><ellipse cx="159" cy="400" rx="4.500" ry="6" fill="#000"/><ellipse cx="159" cy="433" rx="7" ry="7" fill="#000"/><ellipse cx="164" cy="428" rx="3" ry="5" fill="#000"/>
<ellipse cx="86" cy="430" rx="5" ry="4" fill="#000"/><ellipse cx="86" cy="446" rx="5" ry="3" fill="#000"/><ellipse cx="86" cy="466" rx="6" ry="6" fill="#000"/></g>
<g filter="url(#b5)">
<path d="M78 632 L164 630 Q175 632 175 646 L172 724 L122 730 L78 736 Z" fill="#c400cc"/>
<path d="M78 708 L100 702 L112 738 L78 744 Z" fill="#6c0074"/>
</g>
<g filter="url(#b3)">
<rect x="92" y="634" width="80" height="46" rx="14" fill="#f400fc"/>
<rect x="80" y="640" width="30" height="34" rx="8" fill="#f000f8"/>
</g>
<g filter="url(#b3)"><rect x="110" y="641" width="56" height="33" rx="14" fill="url(#bz)"/></g>
<g filter="url(#b1)"><ellipse cx="160" cy="650" rx="3.500" ry="3" fill="#000"/><ellipse cx="156" cy="655" rx="4" ry="3.500" fill="#000"/><ellipse cx="161" cy="659" rx="3.500" ry="3.500" fill="#000"/><ellipse cx="157" cy="694" rx="7.500" ry="7" fill="#000"/><ellipse cx="162" cy="682" rx="2.500" ry="3" fill="#000"/><ellipse cx="161" cy="688" rx="3" ry="4" fill="#000"/></g>
<g filter="url(#b2)"><ellipse cx="156" cy="745" rx="7" ry="8" fill="#a000a8"/></g>
<g filter="url(#b5)"><path d="M570 392 L612 387 Q621 387 621 397 L619 420 L602 428 L596 460 L588 464 L580 430 Z" fill="#50005a"/></g>
<g filter="url(#b3)"><rect x="584" y="390" width="36" height="30" rx="8" fill="#9c00a4"/></g>
<g filter="url(#b15)"><ellipse cx="606.500" cy="405" rx="5.500" ry="8" fill="#000"/></g>
<g filter="url(#b5)"><path d="M578 646 L612 642 Q621 642 621 652 L619 678 L600 694 L586 686 Z" fill="#50005a"/></g>
<g filter="url(#b3)"><rect x="586" y="645" width="34" height="34" rx="8" fill="#9c00a4"/></g>
<g filter="url(#b15)"><ellipse cx="603.500" cy="660" rx="5.500" ry="9" fill="#000"/></g>
<g clip-path="url(#clipe)"><g filter="url(#b3)"><path d="M690 222 H744 L734 246 Q718 262 702 248 Z" fill="#6c0074"/></g>
<g filter="url(#b15)"><path d="M712 222 H729 V232 Q722 240 716 236 L712 232 Z" fill="#000"/></g></g>
<g filter="url(#b3)"><ellipse cx="766" cy="800" rx="16" ry="7" fill="#70007a"/></g>
<g filter="url(#b3)"><ellipse cx="574" cy="458" rx="5" ry="7" fill="#500058"/></g>
<g filter="url(#b1)">
<path d="M235 262.500 L476 267 Q479.500 267 479.500 271 L479 409 Q479 413.500 475 413.500 L236 413 Q231.500 412.500 231.500 408 L232 266 Q232 262.500 235 262.500 Z" fill="#ec00f2"/>
</g>
<g filter="url(#b3)">
<path d="M237 268 H474 V407 H237 Z" fill="#cc00d4"/>
<path d="M238 270 H472 V296 H466 L460 299 H278 L268 308 V360 H242 L238 300 Z" fill="#a000a8"/>
</g>
<g filter="url(#b2)"><ellipse cx="276" cy="287" rx="6.500" ry="7" fill="#0c0010"/><ellipse cx="470" cy="288" rx="6" ry="8" fill="#70007a"/><ellipse cx="264" cy="385" rx="5" ry="6" fill="#80008a"/></g>
<g filter="url(#b1)"><rect x="228.500" y="366" width="4.500" height="40" rx="2" fill="#1038d8"/></g>
<g filter="url(#b07)">
<rect x="275.5" y="300.0" width="184.0" height="110.0" rx="15" fill="#b818f0" />
<rect x="276.5" y="301.0" width="182.0" height="108.0" rx="14.0" fill="#4030e0" />
<rect x="277.5" y="302.0" width="180.0" height="106.0" rx="13.0" fill="#00b8f0" />
<rect x="278.7" y="303.2" width="177.6" height="103.6" rx="11.8" fill="#00e0c0" />
</g>
<g filter="url(#b1)">
<rect x="280.1" y="304.4" width="171.4" height="101.2" rx="10.5" fill="url(#hot1r)" />
</g>
<g filter="url(#b1)">
<rect x="281.9" y="306.2" width="167.6" height="97.6" rx="9" fill="url(#hot1)" />
</g>
<g filter="url(#b1)" mask="url(#hot1m)">
<rect x="281.9" y="306.2" width="167.6" height="97.6" rx="9" fill="url(#hot1s)" />
</g>
<g filter="url(#b25)"><path d="M290 347 H340 Q366 349 368 353 Q366 359 340 361 H290 Z" fill="#fff6f6"/><rect x="284" y="384" width="36" height="12" rx="6" fill="#fdeaea"/><rect x="330" y="385" width="32" height="10" rx="5" fill="#f8d4d4"/><rect x="283" y="316" width="7" height="80" rx="3" fill="#f4c0c0"/><rect x="366" y="320" width="24" height="22" rx="3" fill="#ec7000"/><rect x="366" y="366" width="24" height="18" rx="3" fill="#ec7000"/><rect x="284" y="400" width="80" height="4" rx="2" fill="#d01010"/></g>
<g filter="url(#b1)">
<path d="M232 520.500 L474 524 Q477.500 524 477.500 528 L477 667 Q477 671 473 671 L274 670.500 L272 668 L233 667.500 Q229 667 229 663 L229.500 524 Q229.500 520.500 232 520.500 Z" fill="#ec00f2"/>
</g>
<g filter="url(#b3)">
<path d="M235 526 H472 V665 H235 Z" fill="#d000d8"/>
<path d="M236 528 H470 V548 H464 L458 551 H272 L264 560 V620 H240 L236 560 Z" fill="#ac00b4"/>
</g>
<g filter="url(#b2)"><ellipse cx="468" cy="541" rx="8" ry="9" fill="#38003e"/></g>
<g filter="url(#b07)">
<rect x="270.5" y="552.0" width="186.0" height="108.0" rx="17" fill="#b818f0" />
<rect x="271.5" y="553.0" width="184.0" height="106.0" rx="16.0" fill="#4030e0" />
<rect x="272.5" y="554.0" width="182.0" height="104.0" rx="15.0" fill="#00b8f0" />
<rect x="273.7" y="555.2" width="179.6" height="101.6" rx="13.8" fill="#00e0c0" />
</g>
<g filter="url(#b1)">
<rect x="275.1" y="556.4" width="173.4" height="99.2" rx="12.5" fill="url(#hot3r)" />
</g>
<g filter="url(#b1)">
<rect x="276.9" y="558.2" width="169.6" height="95.6" rx="11" fill="url(#hot3)" />
</g>
<g filter="url(#b1)" mask="url(#hot3m)">
<rect x="276.9" y="558.2" width="169.6" height="95.6" rx="11" fill="url(#hot3s)" />
</g>
<g filter="url(#b25)"><path d="M288 592 H340 Q362 594 364 598 Q362 604 340 606 H288 Z" fill="#fff6f6"/><rect x="278" y="626" width="74" height="13" rx="6" fill="#fdeaea"/><rect x="278" y="566" width="9" height="62" rx="3" fill="#f8d0d0"/><rect x="362" y="610" width="24" height="14" rx="3" fill="#ec7000"/><rect x="282" y="650" width="76" height="4" rx="2" fill="#d01010"/></g>
<g filter="url(#b1)">
<path d="M686 264.500 L800 268.500 L815 271.500 L922 273.500 Q925.500 273.500 925.500 277 L925.500 415 Q925 419.500 920 419.500 L683 420 Q676.500 419.500 676.500 413 L677 273 Q677 264.500 686 264.500 Z" fill="#f400fc"/>
</g>
<g filter="url(#b3)">
<path d="M808 258 H934 V350 H904 V300 H808 Z" fill="url(#hz2)"/>
</g>
<g clip-path="url(#cb2)">
<g filter="url(#b15)">
<path d="M678 267 L740 268.500 L800 283 L820 295.500 L872 296.500 Q903 298 903 326 L903 394 Q903 416 878 417.500 L678 418.500 Z" fill="#a018ec"/>
</g>
<g filter="url(#b1)">
<path d="M679 268.500 L738 270.500 L798 286 L819 298.500 L870 299.500 Q895 300.500 895 326 L895 394 Q895 413 876 415 L679 417 Z" fill="#2038d8"/>
</g>
<g filter="url(#b15)">
<path d="M680.500 283 L700 280 L730 281 L770 291 L800 300.500 L818 303 L868 303.500 Q881 304.500 881 320 L881 395 Q881 410.500 866 411 L680.500 413.500 Z" fill="#00dce4"/>
</g>
<g filter="url(#b5)">
<ellipse cx="699" cy="358" rx="15" ry="50" fill="#069010"/>
<path d="M686 380 L712 384 L722 409 L686 410 Z" fill="#06860c"/>
<path d="M686 294 L720 288 L764 299 L730 306 L700 312 Z" fill="#00b060"/>
</g>
<g filter="url(#b15)">
<rect x="709.0" y="307.0" width="169.0" height="99.0" rx="13" fill="url(#body2)" />
</g>
<g filter="url(#b2)">
<path d="M802 346 L830 344 H866 V355 H830 L802 352 Z" fill="#f08000"/>
<rect x="824" y="311" width="42" height="10" rx="5" fill="#f8a400"/>
<rect x="850" y="322" width="16" height="64" rx="5" fill="#f8b400"/>
<rect x="784" y="320" width="14" height="22" rx="4" fill="#109030"/><rect x="784" y="358" width="14" height="34" rx="4" fill="#109030"/>
<rect x="808" y="320" width="28" height="18" rx="4" fill="#a0c810"/><rect x="808" y="360" width="26" height="28" rx="4" fill="#c4dc08"/>
<rect x="804" y="394" width="62" height="7" rx="3.500" fill="#f8f000"/>
<rect x="868" y="372" width="5" height="14" rx="2" fill="#10a070"/>
</g>
<g filter="url(#b1)"><rect x="744" y="322" width="2" height="16" fill="#1890e8"/><rect x="744" y="358" width="2" height="18" fill="#1890e8"/></g>
</g>
<g filter="url(#b1)">
<path d="M681 525 L790 526 L919 530.500 Q923 531 923 535 L922.500 671 Q922 675.500 918 675.500 L679 676 Q672.500 675.500 672.500 669 L673 533 Q673 525 681 525 Z" fill="#f400fc"/>
</g>
<g clip-path="url(#cb4)">
<g filter="url(#b3)">
<path d="M810 534 L916 538 V668 H810 Z" fill="#dc00e4"/>
</g>
<g filter="url(#b15)">
<path d="M674.500 526.500 L790 528 L830 534 L866 546 Q896 556 896 590 L896 640 Q894 666 866 670 L800 674 L674.500 674.500 Z" fill="#a018ec"/>
<path d="M675 527.500 L786 529 L826 540 L862 552 Q883 560 883 590 L883 640 Q881 660 862 664 L796 672.500 L675 673.500 Z" fill="#2838dc"/>
</g>
<g filter="url(#b15)">
<path d="M676.500 529 L770 530.500 Q796 540 806 557 L860 558 Q868.500 559 868.500 570 L868.500 650 Q868.500 661 858 661.500 L800 662 L784 671.500 L676.500 672 Z" fill="#00dce4"/>
</g>
<g filter="url(#b5)">
<path d="M679 540 L712 548 L716 600 L716 652 L744 669 L679 670 Z" fill="#08a038"/>
<path d="M680 600 L710 606 L712 664 L680 669 Z" fill="#0c860c"/>
<path d="M744 535 L800 536 L826 552 L770 554 Z" fill="#2850e0"/>
</g>
<g filter="url(#b15)">
<rect x="711.0" y="561.5" width="155.0" height="97.5" rx="12" fill="url(#body4)" />
</g>
<g filter="url(#b2)">
<path d="M806 592 L830 589.500 H862 V600 H830 L806 597 Z" fill="#f08800"/>
<rect x="838" y="564" width="24" height="20" rx="5" fill="#f8a800"/>
<rect x="778" y="572" width="20" height="20" rx="4" fill="#108828"/><rect x="778" y="604" width="18" height="40" rx="4" fill="#108828"/>
<rect x="802" y="572" width="28" height="14" rx="4" fill="#90c010"/><rect x="802" y="606" width="32" height="30" rx="4" fill="#b0d008"/>
<rect x="794" y="646" width="68" height="8" rx="4" fill="#f4f000"/>
</g>
<g filter="url(#b1)"><rect x="741" y="572" width="2" height="16" fill="#1878e0"/></g>
</g>
</g>
<rect x="288.500" y="314" width="159.500" height="68" fill="none" stroke="#ff0000" stroke-width="1.300"/>
<rect x="287.5" y="267.5" width="92.5" height="43.0" rx="5" fill="rgba(0,0,0,0.66)" stroke="rgba(255,255,255,0.55)" stroke-width="1"/><text x="295.0" y="284.0" font-size="13.800" fill="#e8e8e8" font-family="Liberation Sans, Noto Sans CJK SC, sans-serif">矩形 1</text><text x="295.0" y="302.5" font-size="14.600" fill="#e8e8e8" font-family="Liberation Sans, Noto Sans CJK SC, sans-serif" letter-spacing="-0.15">Max: 144.85</text>
<path d="M304.5 338.5 H315.5 L310 348.5 Z" fill="#ff1010" stroke="rgba(255,255,255,0.85)" stroke-width="1"/>
<path d="M439.5 374.5 H450.5 L445 364.5 Z" fill="#1010ff" stroke="rgba(255,255,255,0.85)" stroke-width="1"/>
<rect x="725.500" y="320" width="145" height="75" fill="none" stroke="#0000ff" stroke-width="1.300"/>
<rect x="725.5" y="274" width="89.0" height="42.5" rx="5" fill="rgba(0,0,0,0.66)" stroke="rgba(255,255,255,0.55)" stroke-width="1"/><text x="733.0" y="290.5" font-size="13.800" fill="#e8e8e8" font-family="Liberation Sans, Noto Sans CJK SC, sans-serif">矩形 2</text><text x="733.0" y="309" font-size="14.600" fill="#e8e8e8" font-family="Liberation Sans, Noto Sans CJK SC, sans-serif" letter-spacing="-0.15">Max: 114.39</text>
<path d="M739.2 351.5 H750.2 L744.7 341.5 Z" fill="#1010ff" stroke="rgba(255,255,255,0.85)" stroke-width="1"/>
<path d="M853.1 339.0 H864.1 L858.6 349.0 Z" fill="#ff1010" stroke="rgba(255,255,255,0.85)" stroke-width="1"/>
<rect x="290.500" y="568" width="146" height="72" fill="none" stroke="#800000" stroke-width="1.500"/>
<rect x="290.5" y="521" width="91.5" height="43" rx="5" fill="rgba(0,0,0,0.66)" stroke="rgba(255,255,255,0.55)" stroke-width="1"/><text x="298.0" y="537.5" font-size="13.800" fill="#e8e8e8" font-family="Liberation Sans, Noto Sans CJK SC, sans-serif">矩形 3</text><text x="298.0" y="556" font-size="14.600" fill="#e8e8e8" font-family="Liberation Sans, Noto Sans CJK SC, sans-serif" letter-spacing="-0.15">Max: 147.24</text>
<path d="M302.2 585.2 H313.2 L307.7 595.2 Z" fill="#ff1010" stroke="rgba(255,255,255,0.85)" stroke-width="1"/>
<path d="M428.0 649.5 H439.0 L433.5 639.5 Z" fill="#1010ff" stroke="rgba(255,255,255,0.85)" stroke-width="1"/>
<rect x="730.500" y="569.500" width="119" height="71.500" fill="none" stroke="#008000" stroke-width="1.300"/>
<rect x="730" y="522" width="88" height="44" rx="5" fill="rgba(0,0,0,0.66)" stroke="rgba(255,255,255,0.55)" stroke-width="1"/><text x="737.5" y="538.5" font-size="13.800" fill="#e8e8e8" font-family="Liberation Sans, Noto Sans CJK SC, sans-serif">矩形 4</text><text x="737.5" y="557" font-size="14.600" fill="#e8e8e8" font-family="Liberation Sans, Noto Sans CJK SC, sans-serif" letter-spacing="-0.15">Max: 111.89</text>
<path d="M734.2 615.3 H745.2 L739.7 605.3 Z" fill="#1010ff" stroke="rgba(255,255,255,0.85)" stroke-width="1"/>
<path d="M836.5 588.1 H847.5 L842 598.1 Z" fill="#ff1010" stroke="rgba(255,255,255,0.85)" stroke-width="1"/>
</svg>
<!-- ===== frame controls ===== -->
<div class="a" style="left:0;top:888px;width:1134px;height:132px;background:#262626"></div>
<svg style="left:31px;top:901px" width="14" height="18" viewBox="0 0 14 18"><path d="M11.500 1.800 L3 9 L11.500 16.200" fill="none" stroke="#d0d0d0" stroke-width="3"/></svg>
<div class="a" style="left:63px;top:890px;width:112px;height:42px;background:#212121;border-radius:9px"></div>
<div class="t" style="left:63px;top:898.500px;width:112px;text-align:center;font-size:22.500px;font-weight:bold;color:#1ba7e6;letter-spacing:0.200px">1613</div>
<svg style="left:193px;top:901px" width="14" height="18" viewBox="0 0 14 18"><path d="M2.500 1.800 L11 9 L2.500 16.200" fill="none" stroke="#d0d0d0" stroke-width="3"/></svg>
<div class="a" style="left:259px;top:905px;width:735px;height:10px;border-radius:5px;background:#4a4b52"></div>
<div class="a" style="left:647px;top:895px;width:30px;height:30px;border-radius:15px;background:#d2d2d2"></div>
<div class="t" style="left:1040px;top:902px;font-size:17px;color:#e0e0e0;letter-spacing:-0.200px">16 Hz</div>
<svg style="left:1104px;top:898px" width="22" height="23" viewBox="0 0 512 512" fill="#d0d0d0"><path d="M497.900 142.100l-46.100 46.100c-4.700 4.700-12.300 4.700-17 0l-111-111c-4.700-4.700-4.700-12.300 0-17l46.100-46.100c18.700-18.700 49.100-18.700 67.900 0l60.100 60.100c18.800 18.700 18.800 49.100 0 67.900zM284.200 99.800L21.600 362.400.4 483.900c-2.900 16.400 11.400 30.600 27.800 27.800l121.500-21.300 262.600-262.600c4.700-4.700 4.700-12.300 0-17l-111-111c-4.800-4.700-12.400-4.700-17.100 0z"/></svg>

<div class="a" style="left:13px;top:936px;width:112px;height:41px;background:#212121;border-radius:9px"></div>
<div class="t" style="left:13px;top:945px;width:112px;text-align:center;font-size:20px;color:#dcdcdc">1</div>
<div class="a" style="left:147px;top:950px;width:842px;height:10px;background:#878896"></div>
<svg style="left:135px;top:940px" width="20" height="30" viewBox="0 0 20 30" fill="#d4d4d4"><path d="M0 0 H20 V2.200 H12 V27.800 H20 V30 H0 Z"/></svg>
<svg style="left:980px;top:940px" width="20" height="30" viewBox="0 0 20 30" fill="#d4d4d4"><path d="M20 0 H0 V2.200 H8 V27.800 H0 V30 H20 Z"/></svg>
<div class="a" style="left:1010px;top:936px;width:112px;height:41px;background:#212121;border-radius:9px"></div>
<div class="t" style="left:1010px;top:945px;width:112px;text-align:center;font-size:20.500px;color:#dcdcdc">2937</div>

<!-- share -->
<svg style="left:4px;top:987px" width="26" height="23" viewBox="0 0 512 512" fill="#d0d0d0"><path d="M503.700 189.800L327.700 37.900C312.300 24.500 288 35.300 288 56v80.100C127.400 137.900 0 170.100 0 322.300c0 61.400 39.600 122.300 83.300 154.100 13.700 9.900 33.100-2.500 28.100-18.600C66.100 312.800 133 274.300 288 272.100V360c0 20.700 24.300 31.500 39.700 18.200l176-152c11.100-9.600 11.100-26.800 0-36.400z"/></svg>
<!-- playback -->
<svg style="left:240px;top:984px" width="245" height="26" viewBox="240 984 245 26" fill="#d0d0d0">
 <rect x="242" y="985.500" width="3.200" height="23.500"/><path d="M257.500 985.500 V1009 L245.500 997.200 Z"/><path d="M270 985.500 V1009 L258 997.200 Z"/>
 <path d="M290 985.500 V1009 L278 997.200 Z"/><path d="M302.500 985.500 V1009 L290.500 997.200 Z"/>
 <path d="M335.500 985.500 V1009 L313.500 997.200 Z"/>
 <rect x="349.500" y="985.500" width="23.500" height="23.500" fill="#1ba7e6"/>
 <path d="M387 985.500 V1009 L409 997.200 Z"/>
 <path d="M421 985.500 V1009 L433 997.200 Z"/><path d="M433 985.500 V1009 L445 997.200 Z"/>
 <path d="M452 985.500 V1009 L464 997.200 Z"/><path d="M464.500 985.500 V1009 L476.500 997.200 Z"/><rect x="476.800" y="985.500" width="3.200" height="23.500"/>
</svg>
<!-- thermometer (green) -->
<svg style="left:690px;top:983px" width="32" height="30" viewBox="0 0 32 30">
 <path d="M5.500 16.500 V5 Q5.500 1.500 9 1.500 Q12.500 1.500 12.500 5 V16.500 Q15.500 18.500 15.500 22 Q15.500 28 9 28 Q2.500 28 2.500 22 Q2.500 18.500 5.500 16.500 Z" fill="none" stroke="#10f010" stroke-width="2.600"/>
 <circle cx="9" cy="22" r="3.400" fill="#10f010"/><rect x="7.800" y="6" width="2.400" height="15" fill="#10f010"/>
 <path d="M15.500 6 H19 M15.500 10 H18 M15.500 14 H19" stroke="#10f010" stroke-width="1.600"/>
 <path d="M18.500 23 L22.500 27 L30 18.500" fill="none" stroke="#10f010" stroke-width="3"/>
</svg>
<!-- filter x -->
<svg style="left:722px;top:985px" width="32" height="28" viewBox="0 0 32 28">
 <path d="M0.500 0.500 H25.500 L16.500 12.500 V25 L10.500 20.500 V12.500 Z" fill="#d0d0d0"/>
 <path d="M21.500 18 L29.500 26 M29.500 18 L21.500 26" stroke="#d0d0d0" stroke-width="3"/>
</svg>
<!-- sliders -->
<svg style="left:762px;top:987px" width="27" height="24" viewBox="0 0 27 24">
 <path d="M0 4 H27 M0 12 H27 M0 20 H27" stroke="#d0d0d0" stroke-width="2"/>
 <rect x="5.500" y="0.500" width="6" height="7" fill="#d0d0d0"/><rect x="15.500" y="8.500" width="6" height="7" fill="#d0d0d0"/><rect x="7.500" y="16.500" width="6" height="7" fill="#d0d0d0"/>
</svg>
<!-- wand -->
<svg style="left:797px;top:986px" width="28" height="26" viewBox="0 0 28 26">
 <path d="M2 24.500 L21 5.500" stroke="#d0d0d0" stroke-width="5.200"/>
 <path d="M15.500 6.500 L20 11" stroke="#262626" stroke-width="1.200"/>
 <path d="M6 1.500 V7.500 M3 4.500 H9 M24 12 V16 M22 14 H26 M12 0 V4 M10 2 H14" stroke="#d0d0d0" stroke-width="1.200"/>
</svg>
<!-- cube x -->
<svg style="left:828px;top:984px" width="33" height="30" viewBox="0 0 33 30">
 <path d="M13.500 1.500 L25.500 6.500 V13.500 M13.500 1.500 L1.500 6.500 V20.500 L13.500 26 V12 M1.500 6.500 L13.500 12 L25.500 6.500 M13.500 26 L17 24.400" fill="none" stroke="#d0d0d0" stroke-width="2.400" stroke-linejoin="round"/>
 <path d="M1.500 6.500 L13.500 12 V26 L1.500 20.500 Z" fill="#d0d0d0"/>
 <path d="M22 18.500 L30.500 27 M30.500 18.500 L22 27" stroke="#d0d0d0" stroke-width="3"/>
</svg>
<!-- rainbow -->
<div class="a" style="left:870px;top:985px;width:19px;height:27px;border:1.500px solid #d8d8d8;background:linear-gradient(to bottom,#f8d0d0 0%,#e03030 14%,#f08000 28%,#f0f000 42%,#10a010 56%,#00d0d0 68%,#1030d0 80%,#c010e0 92%,#400040 100%)"></div>
<!-- table -->
<svg style="left:901px;top:986px" width="28" height="24" viewBox="0 0 28 24">
 <rect x="1.200" y="1.200" width="25.600" height="21.600" rx="2" fill="none" stroke="#d0d0d0" stroke-width="2.400"/>
 <path d="M1 8.500 H27 M1 15.500 H27 M10 1 V23 M18.500 1 V23" stroke="#d0d0d0" stroke-width="2"/>
</svg>
<!-- chart -->
<svg style="left:936px;top:986px" width="32" height="25" viewBox="0 0 32 25">
 <path d="M1.500 0 V23.500 H32" fill="none" stroke="#d0d0d0" stroke-width="2.400"/>
 <path d="M5.500 17.500 L12 11 L17 15.500 L26 6" fill="none" stroke="#d0d0d0" stroke-width="3"/>
 <path d="M21 3 H29.500 V11.500 Z" fill="#d0d0d0"/>
</svg>
<div class="t" style="left:1004px;top:990.500px;font-size:18.500px;color:#e0e0e0">摄氏度</div>
<!-- factory icon -->
<svg style="left:1100px;top:983px" width="32" height="32" viewBox="0 0 32 32"><path d="M0 31 V1 H7.500 V19 L19 9 V19 L31.500 9 V31 Z" fill="#d0d0d0"/></svg>
<div class="a" style="left:1141px;top:126px;width:728px;height:525px;background:#333"></div>
<div class="a" style="left:1869px;top:126px;width:51px;height:525px;background:#22222c"></div>
<div class="a" style="left:1141px;top:651px;width:779px;height:2px;background:#54595b"></div>
<div class="a" style="left:1141px;top:653px;width:779px;height:4px;background:#262626"></div>
<div class="a" style="left:1520px;top:654px;width:28px;height:1px;background:#d8d8d8"></div>
<div class="a" style="left:1141px;top:695px;width:728px;height:325px;background:#333"></div>
<div class="a" style="left:1869px;top:695px;width:51px;height:325px;background:#22222c"></div>
<svg style="left:1141px;top:126px" width="727" height="525" viewBox="1141 126 727 525">
<rect x="1250" y="144" width="597" height="366" fill="#ffffff"/>
<rect x="1287.4" y="144" width="37.4" height="366" fill="#000" opacity="0.019"/>
<rect x="1362.3" y="144" width="37.4" height="366" fill="#000" opacity="0.019"/>
<rect x="1437.1" y="144" width="37.4" height="366" fill="#000" opacity="0.019"/>
<rect x="1511.9" y="144" width="37.4" height="366" fill="#000" opacity="0.019"/>
<rect x="1586.8" y="144" width="37.4" height="366" fill="#000" opacity="0.019"/>
<rect x="1661.6" y="144" width="37.4" height="366" fill="#000" opacity="0.019"/>
<rect x="1736.5" y="144" width="37.4" height="366" fill="#000" opacity="0.019"/>
<rect x="1811.3" y="144" width="35.7" height="366" fill="#000" opacity="0.019"/>
<rect x="1250" y="144.0" width="597" height="3.5" fill="#000" opacity="0.019"/>
<rect x="1250" y="184.0" width="597" height="36.5" fill="#000" opacity="0.019"/>
<rect x="1250" y="257.0" width="597" height="36.5" fill="#000" opacity="0.019"/>
<rect x="1250" y="330.0" width="597" height="36.5" fill="#000" opacity="0.019"/>
<rect x="1250" y="403.0" width="597" height="36.5" fill="#000" opacity="0.019"/>
<rect x="1250" y="476.0" width="597" height="34.0" fill="#000" opacity="0.019"/>
<path d="M1250 147.5 H1847" stroke="#ecd0d0" stroke-width="1" stroke-dasharray="3 1.5" fill="none"/>
<path d="M1250 184.0 H1847" stroke="#ecd0d0" stroke-width="1" stroke-dasharray="3 1.5" fill="none"/>
<path d="M1250 220.5 H1847" stroke="#ecd0d0" stroke-width="1" stroke-dasharray="3 1.5" fill="none"/>
<path d="M1250 257.0 H1847" stroke="#ecd0d0" stroke-width="1" stroke-dasharray="3 1.5" fill="none"/>
<path d="M1250 293.5 H1847" stroke="#ecd0d0" stroke-width="1" stroke-dasharray="3 1.5" fill="none"/>
<path d="M1250 330.0 H1847" stroke="#ecd0d0" stroke-width="1" stroke-dasharray="3 1.5" fill="none"/>
<path d="M1250 366.5 H1847" stroke="#ecd0d0" stroke-width="1" stroke-dasharray="3 1.5" fill="none"/>
<path d="M1250 403.0 H1847" stroke="#ecd0d0" stroke-width="1" stroke-dasharray="3 1.5" fill="none"/>
<path d="M1250 439.5 H1847" stroke="#ecd0d0" stroke-width="1" stroke-dasharray="3 1.5" fill="none"/>
<path d="M1250 476.0 H1847" stroke="#ecd0d0" stroke-width="1" stroke-dasharray="3 1.5" fill="none"/>
<path d="M1287.4 144 V510" stroke="#cfe6fb" stroke-width="1.100" stroke-dasharray="2.500 1.500" fill="none"/>
<path d="M1324.8 144 V510" stroke="#cfe6fb" stroke-width="1.100" stroke-dasharray="2.500 1.500" fill="none"/>
<path d="M1362.3 144 V510" stroke="#cfe6fb" stroke-width="1.100" stroke-dasharray="2.500 1.500" fill="none"/>
<path d="M1399.7 144 V510" stroke="#cfe6fb" stroke-width="1.100" stroke-dasharray="2.500 1.500" fill="none"/>
<path d="M1437.1 144 V510" stroke="#cfe6fb" stroke-width="1.100" stroke-dasharray="2.500 1.500" fill="none"/>
<path d="M1474.5 144 V510" stroke="#cfe6fb" stroke-width="1.100" stroke-dasharray="2.500 1.500" fill="none"/>
<path d="M1511.9 144 V510" stroke="#cfe6fb" stroke-width="1.100" stroke-dasharray="2.500 1.500" fill="none"/>
<path d="M1549.4 144 V510" stroke="#cfe6fb" stroke-width="1.100" stroke-dasharray="2.500 1.500" fill="none"/>
<path d="M1586.8 144 V510" stroke="#cfe6fb" stroke-width="1.100" stroke-dasharray="2.500 1.500" fill="none"/>
<path d="M1624.2 144 V510" stroke="#cfe6fb" stroke-width="1.100" stroke-dasharray="2.500 1.500" fill="none"/>
<path d="M1661.6 144 V510" stroke="#cfe6fb" stroke-width="1.100" stroke-dasharray="2.500 1.500" fill="none"/>
<path d="M1699.0 144 V510" stroke="#cfe6fb" stroke-width="1.100" stroke-dasharray="2.500 1.500" fill="none"/>
<path d="M1736.5 144 V510" stroke="#cfe6fb" stroke-width="1.100" stroke-dasharray="2.500 1.500" fill="none"/>
<path d="M1773.9 144 V510" stroke="#cfe6fb" stroke-width="1.100" stroke-dasharray="2.500 1.500" fill="none"/>
<path d="M1811.3 144 V510" stroke="#cfe6fb" stroke-width="1.100" stroke-dasharray="2.500 1.500" fill="none"/>
<path d="M1670.500 144 V510" stroke="#c8c8c8" stroke-width="1" stroke-dasharray="5 2" fill="none"/>
<path d="M1250.0 494.9 L1292.8 494.9 L1292.8 494.9 L1293.6 493.4 L1294.4 492.1 L1295.2 490.9 L1296.0 489.9 L1296.8 489.0 L1297.6 488.2 L1298.4 487.4 L1299.2 486.8 L1300.1 486.2 L1300.9 485.7 L1301.7 485.2 L1302.5 484.7 L1303.3 484.4 L1304.1 484.0 L1304.9 483.7 L1305.7 483.4 L1306.5 483.1 L1307.3 482.9 L1308.1 482.6 L1308.9 482.4 L1309.7 482.2 L1310.5 482.1 L1311.3 481.9 L1312.1 481.8 L1312.9 481.6 L1313.7 481.5 L1314.6 481.4 L1315.4 481.2 L1316.2 481.1 L1317.0 481.0 L1317.8 480.9 L1318.6 480.8 L1319.4 480.7 L1320.2 480.7 L1321.0 480.6 L1321.8 480.5 L1322.6 480.4 L1323.4 480.4 L1324.2 480.3 L1325.0 480.2 L1325.8 480.2 L1326.6 480.1 L1327.4 480.1 L1328.2 480.0 L1329.1 480.0 L1329.9 479.9 L1330.7 479.9 L1331.5 479.8 L1332.3 479.8 L1333.1 479.7 L1333.9 479.7 L1334.7 479.6 L1335.5 479.6 L1336.3 479.6 L1337.1 479.5 L1337.9 479.5 L1338.7 479.5 L1339.5 479.4 L1340.3 479.4 L1341.1 479.4 L1341.9 479.3 L1342.7 479.3 L1343.6 479.3 L1344.4 479.3 L1345.2 479.2 L1346.0 479.2 L1346.8 479.2 L1347.6 479.2 L1348.4 479.1 L1349.2 479.1 L1350.0 479.1 L1350.0 479.1 L1350.8 470.2 L1351.6 462.6 L1352.4 456.1 L1353.2 450.6 L1354.0 445.8 L1354.8 441.7 L1355.6 438.2 L1356.4 435.2 L1357.2 432.5 L1358.0 430.2 L1358.8 428.2 L1359.6 426.4 L1360.4 424.8 L1361.2 423.4 L1362.0 422.2 L1362.8 421.1 L1363.6 420.0 L1364.4 419.1 L1365.2 418.2 L1366.0 417.5 L1366.8 416.7 L1367.6 416.1 L1368.4 415.5 L1369.2 414.9 L1370.0 414.3 L1370.8 413.8 L1371.6 413.3 L1372.4 412.9 L1373.2 412.4 L1374.0 412.0 L1374.8 411.6 L1375.7 411.2 L1376.5 410.8 L1377.3 410.5 L1378.1 410.1 L1378.9 409.8 L1379.7 409.5 L1380.5 409.2 L1381.3 408.9 L1382.1 408.6 L1382.9 408.4 L1383.7 408.1 L1384.5 407.8 L1385.3 407.6 L1386.1 407.4 L1386.9 407.1 L1387.7 406.9 L1388.5 406.7 L1389.3 406.5 L1390.1 406.3 L1390.9 406.1 L1391.7 405.9 L1392.5 405.7 L1393.3 405.5 L1394.1 405.3 L1394.9 405.2 L1395.7 405.0 L1396.5 404.9 L1397.3 404.7 L1398.1 404.6 L1398.9 404.4 L1399.7 404.3 L1400.5 404.1 L1401.3 404.0 L1401.3 404.0 L1402.1 392.2 L1402.9 382.1 L1403.7 373.5 L1404.5 366.2 L1405.3 360.0 L1406.1 354.6 L1406.9 349.9 L1407.7 345.9 L1408.5 342.4 L1409.3 339.4 L1410.1 336.7 L1410.9 334.4 L1411.7 332.3 L1412.5 330.4 L1413.3 328.8 L1414.2 327.3 L1415.0 325.9 L1415.8 324.7 L1416.6 323.6 L1417.4 322.5 L1418.2 321.6 L1419.0 320.7 L1419.8 319.9 L1420.6 319.1 L1421.4 318.4 L1422.2 317.7 L1423.0 317.1 L1423.8 316.4 L1424.6 315.9 L1425.4 315.3 L1426.2 314.8 L1427.0 314.3 L1427.8 313.8 L1428.6 313.3 L1429.4 312.9 L1430.2 312.4 L1431.0 312.0 L1431.8 311.6 L1432.6 311.2 L1433.4 310.9 L1434.2 310.5 L1435.0 310.2 L1435.8 309.8 L1436.6 309.5 L1437.4 309.2 L1438.2 308.9 L1439.1 308.6 L1439.9 308.3 L1440.7 308.0 L1441.5 307.8 L1442.3 307.5 L1443.1 307.2 L1443.9 307.0 L1444.7 306.8 L1445.5 306.5 L1446.3 306.3 L1447.1 306.1 L1447.9 305.9 L1448.7 305.7 L1449.5 305.5 L1450.3 305.3 L1451.1 305.1 L1451.9 304.9 L1452.7 304.8 L1453.5 304.6 L1454.3 304.4 L1455.1 304.3 L1455.9 304.1 L1456.7 304.0 L1457.5 303.8 L1458.3 303.7 L1459.1 303.6 L1459.9 303.4 L1460.7 303.3 L1461.5 303.2 L1462.3 303.1 L1463.1 302.9 L1464.0 302.8 L1464.8 302.7 L1465.6 302.6 L1466.4 302.5 L1467.2 302.4 L1468.0 302.3 L1468.8 302.2 L1469.6 302.1 L1470.4 302.0 L1471.2 302.0 L1472.0 301.9 L1472.8 301.8 L1473.6 301.7 L1474.4 301.6 L1475.2 301.6 L1476.0 301.5 L1476.0 301.5 L1476.8 294.2 L1477.6 287.9 L1478.4 282.6 L1479.2 278.1 L1480.0 274.2 L1480.9 270.9 L1481.7 268.0 L1482.5 265.6 L1483.3 263.4 L1484.1 261.5 L1484.9 259.9 L1485.7 258.5 L1486.5 257.2 L1487.3 256.0 L1488.1 255.0 L1488.9 254.1 L1489.8 253.3 L1490.6 252.5 L1491.4 251.8 L1492.2 251.2 L1493.0 250.6 L1493.8 250.1 L1494.6 249.6 L1495.4 249.1 L1496.2 248.7 L1497.0 248.2 L1497.8 247.8 L1498.6 247.5 L1499.5 247.1 L1500.3 246.8 L1501.1 246.4 L1501.9 246.1 L1502.7 245.8 L1503.5 245.5 L1504.3 245.3 L1505.1 245.0 L1505.9 244.8 L1506.7 244.5 L1507.5 244.3 L1508.4 244.0 L1509.2 243.8 L1510.0 243.6 L1510.8 243.4 L1511.6 243.2 L1512.4 243.0 L1513.2 242.8 L1514.0 242.6 L1514.8 242.5 L1515.6 242.3 L1516.4 242.1 L1517.2 242.0 L1518.1 241.8 L1518.9 241.7 L1519.7 241.5 L1520.5 241.4 L1521.3 241.2 L1522.1 241.1 L1522.9 241.0 L1523.7 240.9 L1524.5 240.7 L1525.3 240.6 L1526.1 240.5 L1527.0 240.4 L1527.8 240.3 L1528.6 240.2 L1529.4 240.1 L1530.2 240.0 L1531.0 239.9 L1531.0 239.9 L1531.8 233.1 L1532.6 227.4 L1533.4 222.5 L1534.2 218.4 L1535.0 214.8 L1535.9 211.7 L1536.7 209.1 L1537.5 206.8 L1538.3 204.8 L1539.1 203.1 L1539.9 201.6 L1540.7 200.3 L1541.5 199.1 L1542.3 198.1 L1543.1 197.1 L1543.9 196.3 L1544.8 195.5 L1545.6 194.8 L1546.4 194.2 L1547.2 193.6 L1548.0 193.1 L1548.8 192.6 L1549.6 192.1 L1550.4 191.7 L1551.2 191.3 L1552.0 190.9 L1552.8 190.5 L1553.7 190.2 L1554.5 189.8 L1555.3 189.5 L1556.1 189.2 L1556.9 188.9 L1557.7 188.7 L1558.5 188.4 L1559.3 188.1 L1560.1 187.9 L1560.9 187.7 L1561.8 187.4 L1562.6 187.2 L1563.4 187.0 L1564.2 186.8 L1565.0 186.6 L1565.8 186.4 L1566.6 186.2 L1567.4 186.1 L1568.2 185.9 L1569.0 185.7 L1569.8 185.6 L1570.7 185.4 L1571.5 185.2 L1572.3 185.1 L1573.1 185.0 L1573.9 184.8 L1574.7 184.7 L1575.5 184.6 L1576.3 184.4 L1577.1 184.3 L1577.9 184.2 L1578.7 184.1 L1579.6 184.0 L1580.4 183.9 L1581.2 183.8 L1582.0 183.7 L1582.8 183.6 L1583.6 183.5 L1584.4 183.4 L1585.2 183.3 L1586.0 183.2 L1586.8 183.1 L1587.6 183.0 L1588.5 183.0 L1589.3 182.9 L1590.1 182.8 L1590.9 182.7 L1591.7 182.7 L1592.5 182.6 L1592.5 182.6 L1593.3 181.6 L1594.1 180.6 L1594.9 179.7 L1595.7 178.9 L1596.5 178.2 L1597.3 177.4 L1598.1 176.8 L1598.9 176.2 L1599.7 175.6 L1600.5 175.1 L1601.3 174.6 L1602.1 174.1 L1602.9 173.6 L1603.7 173.2 L1604.5 172.8 L1605.3 172.5 L1606.1 172.1 L1606.9 171.8 L1607.7 171.5 L1608.5 171.2 L1609.3 171.0 L1610.1 170.7 L1610.9 170.5 L1611.7 170.2 L1612.5 170.0 L1613.3 169.8 L1614.1 169.6 L1614.9 169.4 L1615.7 169.2 L1616.5 169.1 L1617.3 168.9 L1618.1 168.7 L1618.9 168.6 L1619.7 168.5 L1620.5 168.3 L1621.3 168.2 L1622.1 168.1 L1622.9 167.9 L1623.7 167.8 L1624.5 167.7 L1625.3 167.6 L1626.1 167.5 L1626.9 167.4 L1627.7 167.3 L1628.5 167.2 L1629.3 167.1 L1630.1 167.0 L1630.9 166.9 L1631.8 166.8 L1632.6 166.7 L1633.4 166.7 L1634.2 166.6 L1635.0 166.5 L1635.8 166.4 L1636.6 166.4 L1637.4 166.3 L1638.2 166.2 L1639.0 166.1 L1639.8 166.1 L1640.6 166.0 L1641.4 166.0 L1642.2 165.9 L1643.0 165.8 L1643.8 165.8 L1644.6 165.7 L1645.4 165.7 L1646.2 165.6 L1647.0 165.6 L1647.8 165.5 L1648.6 165.5 L1649.4 165.4 L1650.2 165.4 L1651.0 165.3 L1651.8 165.3 L1652.6 165.2 L1653.4 165.2 L1654.2 165.1 L1655.0 165.1 L1655.8 165.0 L1656.6 165.0 L1657.4 165.0 L1658.2 164.9 L1659.0 164.9 L1659.8 164.8 L1660.6 164.8 L1661.4 164.8 L1662.2 164.7 L1663.0 164.7 L1663.8 164.7 L1664.6 164.6 L1665.4 164.6 L1666.2 164.6 L1667.0 164.5 L1667.8 164.5 L1668.6 164.5 L1669.4 164.5 L1670.2 164.4 L1671.0 164.4 L1671.0 164.4 L1672.5 195.0 L1673.1 206.4 L1673.8 220.8 L1674.7 236.9 L1675.6 253.9 L1676.5 270.8 L1677.4 286.5 L1678.2 300.0 L1679.1 313.4 L1679.9 325.3 L1680.7 336.2 L1681.5 346.2 L1682.4 355.6 L1683.5 364.7 L1684.2 369.9 L1685.0 374.9 L1685.8 379.7 L1686.7 384.2 L1687.6 388.5 L1688.5 392.6 L1689.4 396.6 L1690.3 400.4 L1691.3 404.2 L1692.3 407.9 L1693.1 410.7 L1693.8 413.4 L1694.6 416.1 L1695.4 418.7 L1696.3 421.2 L1697.1 423.6 L1697.9 426.0 L1698.8 428.2 L1699.6 430.4 L1700.5 432.4 L1701.4 434.4 L1702.3 436.3 L1703.2 438.0 L1704.0 439.4 L1704.8 440.7 L1705.5 441.8 L1706.3 442.9 L1707.1 443.9 L1707.9 444.8 L1708.7 445.7 L1709.5 446.5 L1710.3 447.2 L1711.2 448.0 L1712.1 448.7 L1713.0 449.4 L1714.0 450.1 L1715.0 450.8 L1716.0 451.6 L1716.7 452.1 L1717.5 452.6 L1718.3 453.1 L1719.2 453.6 L1720.1 454.1 L1721.0 454.6 L1721.9 455.1 L1722.9 455.6 L1723.9 456.1 L1724.8 456.6 L1725.8 457.0 L1726.8 457.5 L1727.7 457.9 L1728.7 458.3 L1729.6 458.7 L1730.4 459.1 L1731.2 459.5 L1732.0 459.8 L1732.7 460.2 L1733.4 460.5 L1734.0 460.7 L1734.5 461.0 L1735.0 461.2 L1735.0 461.2 L1735.4 461.3 L1735.9 461.4 L1736.4 461.5 L1736.9 461.6 L1737.5 461.7 L1738.1 461.8 L1738.7 461.9 L1739.4 462.1 L1740.0 462.2 L1740.8 462.4 L1741.5 462.5 L1742.3 462.7 L1743.0 462.8 L1743.8 463.0 L1744.7 463.1 L1745.5 463.3 L1746.4 463.5 L1747.2 463.7 L1748.1 463.8 L1749.0 464.0 L1749.9 464.2 L1750.8 464.4 L1751.8 464.6 L1752.7 464.7 L1753.6 464.9 L1754.6 465.1 L1755.5 465.3 L1756.4 465.5 L1757.4 465.7 L1758.3 465.9 L1759.2 466.0 L1760.1 466.2 L1761.0 466.4 L1762.0 466.6 L1762.8 466.8 L1763.7 466.9 L1764.6 467.1 L1765.4 467.3 L1766.3 467.4 L1767.1 467.6 L1767.9 467.7 L1768.6 467.9 L1769.4 468.0 L1770.3 468.2 L1771.2 468.3 L1772.1 468.5 L1773.0 468.7 L1773.9 468.8 L1774.9 469.0 L1775.8 469.2 L1776.7 469.3 L1777.7 469.5 L1778.6 469.6 L1779.5 469.8 L1780.5 470.0 L1781.4 470.1 L1782.3 470.3 L1783.2 470.4 L1784.1 470.6 L1785.0 470.7 L1785.9 470.9 L1786.8 471.0 L1787.6 471.2 L1788.5 471.3 L1789.3 471.5 L1790.1 471.6 L1790.9 471.7 L1791.7 471.9 L1792.5 472.0 L1793.2 472.1 L1793.9 472.2 L1794.6 472.3 L1795.2 472.4 L1795.8 472.5 L1796.4 472.6 L1797.0 472.7 L1797.5 472.8 L1798.0 472.9 L1798.5 473.0 L1801.4 473.4 L1801.4 473.3 L1801.5 473.6 L1802.3 474.3 L1803.1 475.3 L1804.0 476.3 L1805.0 477.4 L1806.0 478.4 L1806.8 479.0 L1807.5 479.6 L1808.4 480.2 L1809.2 480.8 L1810.1 481.4 L1811.0 481.9 L1812.0 482.4 L1812.7 482.7 L1813.4 483.0 L1814.2 483.3 L1815.0 483.6 L1815.8 483.8 L1816.6 484.1 L1817.4 484.3 L1818.2 484.6 L1819.1 484.8 L1820.0 485.0 L1820.7 485.2 L1821.5 485.3 L1822.2 485.5 L1822.9 485.6 L1823.7 485.7 L1824.5 485.9 L1825.3 486.0 L1826.1 486.1 L1827.0 486.2 L1827.9 486.4 L1828.9 486.5 L1830.0 486.6 L1830.7 486.7 L1831.5 486.8 L1832.3 486.8 L1833.1 486.9 L1834.1 487.0 L1835.0 487.1 L1836.0 487.2 L1836.9 487.2 L1837.9 487.3 L1838.9 487.4 L1839.8 487.5 L1840.8 487.6 L1841.7 487.6 L1842.6 487.7 L1843.4 487.8 L1844.2 487.8 L1844.9 487.9 L1845.5 487.9 L1846.0 488.0 L1846.5 488.0" fill="none" stroke="#800000" stroke-width="1.9" stroke-linejoin="round"/>
<path d="M1250.0 494.7 L1292.8 494.7 L1292.8 494.7 L1293.6 493.3 L1294.4 492.0 L1295.2 490.8 L1296.0 489.8 L1296.8 488.9 L1297.6 488.1 L1298.4 487.4 L1299.2 486.8 L1300.1 486.2 L1300.9 485.7 L1301.7 485.2 L1302.5 484.8 L1303.3 484.4 L1304.1 484.1 L1304.9 483.8 L1305.7 483.5 L1306.5 483.2 L1307.3 483.0 L1308.1 482.8 L1308.9 482.6 L1309.7 482.4 L1310.5 482.2 L1311.3 482.0 L1312.1 481.9 L1312.9 481.7 L1313.7 481.6 L1314.6 481.5 L1315.4 481.4 L1316.2 481.3 L1317.0 481.2 L1317.8 481.1 L1318.6 481.0 L1319.4 480.9 L1320.2 480.8 L1321.0 480.7 L1321.8 480.7 L1322.6 480.6 L1323.4 480.5 L1324.2 480.5 L1325.0 480.4 L1325.8 480.3 L1326.6 480.3 L1327.4 480.2 L1328.2 480.2 L1329.1 480.1 L1329.9 480.1 L1330.7 480.0 L1331.5 480.0 L1332.3 480.0 L1333.1 479.9 L1333.9 479.9 L1334.7 479.8 L1335.5 479.8 L1336.3 479.8 L1337.1 479.7 L1337.9 479.7 L1338.7 479.7 L1339.5 479.6 L1340.3 479.6 L1341.1 479.6 L1341.9 479.5 L1342.7 479.5 L1343.6 479.5 L1344.4 479.5 L1345.2 479.4 L1346.0 479.4 L1346.8 479.4 L1347.6 479.4 L1348.4 479.3 L1349.2 479.3 L1350.0 479.3 L1350.0 479.3 L1350.8 470.4 L1351.6 462.9 L1352.4 456.5 L1353.2 451.0 L1354.0 446.3 L1354.8 442.2 L1355.6 438.7 L1356.4 435.7 L1357.2 433.1 L1358.0 430.8 L1358.8 428.8 L1359.6 427.0 L1360.4 425.5 L1361.2 424.1 L1362.0 422.8 L1362.8 421.7 L1363.6 420.7 L1364.4 419.8 L1365.2 418.9 L1366.0 418.2 L1366.8 417.4 L1367.6 416.8 L1368.4 416.2 L1369.2 415.6 L1370.0 415.0 L1370.8 414.5 L1371.6 414.0 L1372.4 413.6 L1373.2 413.1 L1374.0 412.7 L1374.8 412.3 L1375.7 412.0 L1376.5 411.6 L1377.3 411.2 L1378.1 410.9 L1378.9 410.6 L1379.7 410.3 L1380.5 410.0 L1381.3 409.7 L1382.1 409.4 L1382.9 409.1 L1383.7 408.9 L1384.5 408.6 L1385.3 408.4 L1386.1 408.1 L1386.9 407.9 L1387.7 407.7 L1388.5 407.5 L1389.3 407.3 L1390.1 407.0 L1390.9 406.9 L1391.7 406.7 L1392.5 406.5 L1393.3 406.3 L1394.1 406.1 L1394.9 406.0 L1395.7 405.8 L1396.5 405.6 L1397.3 405.5 L1398.1 405.3 L1398.9 405.2 L1399.7 405.1 L1400.5 404.9 L1401.3 404.8 L1401.3 404.8 L1402.1 393.3 L1402.9 383.5 L1403.7 375.1 L1404.5 368.0 L1405.3 361.9 L1406.1 356.6 L1406.9 352.1 L1407.7 348.2 L1408.5 344.8 L1409.3 341.8 L1410.1 339.2 L1410.9 336.9 L1411.7 334.9 L1412.5 333.1 L1413.3 331.5 L1414.2 330.0 L1415.0 328.7 L1415.8 327.5 L1416.6 326.4 L1417.4 325.4 L1418.2 324.5 L1419.0 323.6 L1419.8 322.8 L1420.6 322.1 L1421.4 321.4 L1422.2 320.7 L1423.0 320.1 L1423.8 319.5 L1424.6 318.9 L1425.4 318.4 L1426.2 317.8 L1427.0 317.4 L1427.8 316.9 L1428.6 316.4 L1429.4 316.0 L1430.2 315.6 L1431.0 315.2 L1431.8 314.8 L1432.6 314.4 L1433.4 314.0 L1434.2 313.7 L1435.0 313.3 L1435.8 313.0 L1436.6 312.7 L1437.4 312.4 L1438.2 312.1 L1439.1 311.8 L1439.9 311.5 L1440.7 311.3 L1441.5 311.0 L1442.3 310.7 L1443.1 310.5 L1443.9 310.3 L1444.7 310.0 L1445.5 309.8 L1446.3 309.6 L1447.1 309.4 L1447.9 309.2 L1448.7 309.0 L1449.5 308.8 L1450.3 308.6 L1451.1 308.4 L1451.9 308.2 L1452.7 308.1 L1453.5 307.9 L1454.3 307.8 L1455.1 307.6 L1455.9 307.5 L1456.7 307.3 L1457.5 307.2 L1458.3 307.0 L1459.1 306.9 L1459.9 306.8 L1460.7 306.7 L1461.5 306.5 L1462.3 306.4 L1463.1 306.3 L1464.0 306.2 L1464.8 306.1 L1465.6 306.0 L1466.4 305.9 L1467.2 305.8 L1468.0 305.7 L1468.8 305.6 L1469.6 305.5 L1470.4 305.4 L1471.2 305.3 L1472.0 305.3 L1472.8 305.2 L1473.6 305.1 L1474.4 305.0 L1475.2 305.0 L1476.0 304.9 L1476.0 304.9 L1476.8 298.0 L1477.6 292.2 L1478.4 287.2 L1479.2 283.0 L1480.0 279.4 L1480.9 276.2 L1481.7 273.6 L1482.5 271.2 L1483.3 269.2 L1484.1 267.5 L1484.9 265.9 L1485.7 264.6 L1486.5 263.4 L1487.3 262.3 L1488.1 261.4 L1488.9 260.5 L1489.8 259.7 L1490.6 259.0 L1491.4 258.4 L1492.2 257.8 L1493.0 257.2 L1493.8 256.7 L1494.6 256.3 L1495.4 255.8 L1496.2 255.4 L1497.0 255.0 L1497.8 254.6 L1498.6 254.3 L1499.5 254.0 L1500.3 253.6 L1501.1 253.3 L1501.9 253.0 L1502.7 252.8 L1503.5 252.5 L1504.3 252.2 L1505.1 252.0 L1505.9 251.7 L1506.7 251.5 L1507.5 251.3 L1508.4 251.1 L1509.2 250.9 L1510.0 250.7 L1510.8 250.5 L1511.6 250.3 L1512.4 250.1 L1513.2 249.9 L1514.0 249.8 L1514.8 249.6 L1515.6 249.4 L1516.4 249.3 L1517.2 249.1 L1518.1 249.0 L1518.9 248.9 L1519.7 248.7 L1520.5 248.6 L1521.3 248.5 L1522.1 248.3 L1522.9 248.2 L1523.7 248.1 L1524.5 248.0 L1525.3 247.9 L1526.1 247.8 L1527.0 247.7 L1527.8 247.6 L1528.6 247.5 L1529.4 247.4 L1530.2 247.3 L1531.0 247.2 L1531.0 247.2 L1531.8 240.7 L1532.6 235.1 L1533.4 230.4 L1534.2 226.4 L1535.0 223.0 L1535.9 220.0 L1536.7 217.5 L1537.5 215.3 L1538.3 213.4 L1539.1 211.7 L1539.9 210.2 L1540.7 209.0 L1541.5 207.8 L1542.3 206.8 L1543.1 205.9 L1543.9 205.1 L1544.8 204.4 L1545.6 203.7 L1546.4 203.1 L1547.2 202.5 L1548.0 202.0 L1548.8 201.5 L1549.6 201.1 L1550.4 200.7 L1551.2 200.3 L1552.0 199.9 L1552.8 199.5 L1553.7 199.2 L1554.5 198.9 L1555.3 198.6 L1556.1 198.3 L1556.9 198.0 L1557.7 197.8 L1558.5 197.5 L1559.3 197.3 L1560.1 197.0 L1560.9 196.8 L1561.8 196.6 L1562.6 196.4 L1563.4 196.2 L1564.2 196.0 L1565.0 195.8 L1565.8 195.6 L1566.6 195.4 L1567.4 195.2 L1568.2 195.1 L1569.0 194.9 L1569.8 194.8 L1570.7 194.6 L1571.5 194.5 L1572.3 194.3 L1573.1 194.2 L1573.9 194.0 L1574.7 193.9 L1575.5 193.8 L1576.3 193.7 L1577.1 193.6 L1577.9 193.4 L1578.7 193.3 L1579.6 193.2 L1580.4 193.1 L1581.2 193.0 L1582.0 192.9 L1582.8 192.8 L1583.6 192.7 L1584.4 192.6 L1585.2 192.6 L1586.0 192.5 L1586.8 192.4 L1587.6 192.3 L1588.5 192.2 L1589.3 192.2 L1590.1 192.1 L1590.9 192.0 L1591.7 192.0 L1592.5 191.9 L1592.5 191.9 L1593.3 190.9 L1594.1 190.0 L1594.9 189.2 L1595.7 188.4 L1596.5 187.7 L1597.3 187.1 L1598.1 186.4 L1598.9 185.9 L1599.7 185.3 L1600.5 184.8 L1601.3 184.3 L1602.1 183.9 L1602.9 183.5 L1603.7 183.1 L1604.5 182.7 L1605.3 182.4 L1606.1 182.1 L1606.9 181.8 L1607.7 181.5 L1608.5 181.2 L1609.3 181.0 L1610.1 180.7 L1610.9 180.5 L1611.7 180.3 L1612.5 180.1 L1613.3 179.9 L1614.1 179.7 L1614.9 179.5 L1615.7 179.3 L1616.5 179.2 L1617.3 179.0 L1618.1 178.9 L1618.9 178.7 L1619.7 178.6 L1620.5 178.5 L1621.3 178.4 L1622.1 178.2 L1622.9 178.1 L1623.7 178.0 L1624.5 177.9 L1625.3 177.8 L1626.1 177.7 L1626.9 177.6 L1627.7 177.5 L1628.5 177.4 L1629.3 177.3 L1630.1 177.2 L1630.9 177.2 L1631.8 177.1 L1632.6 177.0 L1633.4 176.9 L1634.2 176.8 L1635.0 176.8 L1635.8 176.7 L1636.6 176.6 L1637.4 176.6 L1638.2 176.5 L1639.0 176.4 L1639.8 176.4 L1640.6 176.3 L1641.4 176.3 L1642.2 176.2 L1643.0 176.1 L1643.8 176.1 L1644.6 176.0 L1645.4 176.0 L1646.2 175.9 L1647.0 175.9 L1647.8 175.8 L1648.6 175.8 L1649.4 175.7 L1650.2 175.7 L1651.0 175.7 L1651.8 175.6 L1652.6 175.6 L1653.4 175.5 L1654.2 175.5 L1655.0 175.4 L1655.8 175.4 L1656.6 175.4 L1657.4 175.3 L1658.2 175.3 L1659.0 175.3 L1659.8 175.2 L1660.6 175.2 L1661.4 175.2 L1662.2 175.1 L1663.0 175.1 L1663.8 175.1 L1664.6 175.0 L1665.4 175.0 L1666.2 175.0 L1667.0 174.9 L1667.8 174.9 L1668.6 174.9 L1669.4 174.9 L1670.2 174.8 L1671.0 174.8 L1671.0 175.0 L1672.5 200.0 L1673.2 212.7 L1674.0 229.1 L1674.9 247.5 L1675.8 266.5 L1676.8 284.5 L1677.7 300.0 L1678.5 313.1 L1679.3 325.0 L1680.1 335.9 L1681.0 346.0 L1681.9 355.6 L1683.0 364.7 L1683.7 369.9 L1684.5 374.9 L1685.3 379.7 L1686.2 384.2 L1687.1 388.5 L1688.0 392.6 L1688.9 396.6 L1689.9 400.4 L1690.8 404.2 L1691.8 407.9 L1692.6 410.7 L1693.3 413.4 L1694.1 416.1 L1694.9 418.7 L1695.7 421.2 L1696.5 423.6 L1697.4 426.0 L1698.2 428.3 L1699.1 430.4 L1699.9 432.5 L1700.8 434.4 L1701.7 436.3 L1702.6 438.0 L1703.3 439.3 L1704.1 440.5 L1704.8 441.5 L1705.5 442.5 L1706.3 443.4 L1707.0 444.3 L1707.7 445.0 L1708.5 445.8 L1709.3 446.5 L1710.1 447.1 L1710.9 447.8 L1711.8 448.4 L1712.6 449.0 L1713.6 449.6 L1714.5 450.3 L1715.5 451.0 L1716.2 451.5 L1717.0 452.0 L1717.8 452.4 L1718.6 452.9 L1719.5 453.4 L1720.4 453.9 L1721.3 454.4 L1722.2 454.8 L1723.2 455.3 L1724.1 455.8 L1725.1 456.2 L1726.1 456.7 L1727.0 457.1 L1727.9 457.5 L1728.8 457.9 L1729.7 458.3 L1730.5 458.7 L1731.3 459.0 L1732.1 459.4 L1732.8 459.7 L1733.5 460.0 L1734.0 460.2 L1734.6 460.5 L1735.0 460.7 L1735.0 460.7 L1735.4 460.8 L1735.9 460.9 L1736.4 461.0 L1736.9 461.1 L1737.5 461.2 L1738.1 461.3 L1738.7 461.4 L1739.4 461.5 L1740.0 461.7 L1740.8 461.8 L1741.5 462.0 L1742.3 462.1 L1743.0 462.3 L1743.8 462.4 L1744.7 462.6 L1745.5 462.7 L1746.4 462.9 L1747.2 463.1 L1748.1 463.2 L1749.0 463.4 L1749.9 463.6 L1750.8 463.8 L1751.8 464.0 L1752.7 464.1 L1753.6 464.3 L1754.6 464.5 L1755.5 464.7 L1756.4 464.9 L1757.4 465.0 L1758.3 465.2 L1759.2 465.4 L1760.1 465.6 L1761.0 465.7 L1762.0 465.9 L1762.8 466.1 L1763.7 466.2 L1764.6 466.4 L1765.4 466.6 L1766.3 466.7 L1767.1 466.9 L1767.9 467.0 L1768.6 467.2 L1769.4 467.3 L1770.3 467.5 L1771.2 467.6 L1772.1 467.8 L1773.0 467.9 L1773.9 468.1 L1774.9 468.3 L1775.8 468.4 L1776.7 468.6 L1777.7 468.8 L1778.6 468.9 L1779.5 469.1 L1780.5 469.2 L1781.4 469.4 L1782.3 469.6 L1783.2 469.7 L1784.1 469.9 L1785.0 470.0 L1785.9 470.2 L1786.8 470.3 L1787.6 470.5 L1788.5 470.6 L1789.3 470.7 L1790.1 470.9 L1790.9 471.0 L1791.7 471.1 L1792.5 471.3 L1793.2 471.4 L1793.9 471.5 L1794.6 471.6 L1795.2 471.7 L1795.8 471.8 L1796.4 471.9 L1797.0 472.0 L1797.5 472.1 L1798.0 472.2 L1798.5 472.3 L1801.4 472.7 L1801.4 472.6 L1801.5 473.0 L1802.3 473.7 L1803.1 474.7 L1804.0 475.9 L1805.0 477.0 L1806.0 478.0 L1806.8 478.6 L1807.5 479.3 L1808.4 479.9 L1809.2 480.4 L1810.1 481.0 L1811.0 481.5 L1812.0 482.0 L1812.7 482.3 L1813.4 482.6 L1814.2 482.9 L1815.0 483.2 L1815.8 483.4 L1816.6 483.6 L1817.4 483.9 L1818.2 484.1 L1819.1 484.3 L1820.0 484.5 L1820.7 484.7 L1821.5 484.8 L1822.2 484.9 L1822.9 485.1 L1823.7 485.2 L1824.5 485.3 L1825.3 485.4 L1826.1 485.5 L1827.0 485.6 L1827.9 485.8 L1828.9 485.9 L1830.0 486.0 L1830.7 486.1 L1831.5 486.2 L1832.3 486.2 L1833.1 486.3 L1834.1 486.4 L1835.0 486.5 L1836.0 486.6 L1836.9 486.7 L1837.9 486.8 L1838.9 486.8 L1839.8 486.9 L1840.8 487.0 L1841.7 487.1 L1842.6 487.2 L1843.4 487.2 L1844.2 487.3 L1844.9 487.4 L1845.5 487.4 L1846.0 487.5 L1846.5 487.5" fill="none" stroke="#ff0000" stroke-width="1.8" stroke-linejoin="round"/>
<path d="M1250.0 494.0 L1292.8 494.0 L1292.8 494.0 L1293.6 492.6 L1294.4 491.4 L1295.2 490.3 L1296.0 489.4 L1296.8 488.5 L1297.6 487.7 L1298.4 487.1 L1299.2 486.4 L1300.1 485.9 L1300.9 485.4 L1301.7 485.0 L1302.5 484.5 L1303.3 484.2 L1304.1 483.9 L1304.9 483.6 L1305.7 483.3 L1306.5 483.0 L1307.3 482.8 L1308.1 482.6 L1308.9 482.4 L1309.7 482.2 L1310.5 482.1 L1311.3 481.9 L1312.1 481.8 L1312.9 481.6 L1313.7 481.5 L1314.6 481.4 L1315.4 481.3 L1316.2 481.2 L1317.0 481.1 L1317.8 481.0 L1318.6 480.9 L1319.4 480.8 L1320.2 480.8 L1321.0 480.7 L1321.8 480.6 L1322.6 480.5 L1323.4 480.5 L1324.2 480.4 L1325.0 480.4 L1325.8 480.3 L1326.6 480.2 L1327.4 480.2 L1328.2 480.1 L1329.1 480.1 L1329.9 480.0 L1330.7 480.0 L1331.5 480.0 L1332.3 479.9 L1333.1 479.9 L1333.9 479.8 L1334.7 479.8 L1335.5 479.8 L1336.3 479.7 L1337.1 479.7 L1337.9 479.7 L1338.7 479.6 L1339.5 479.6 L1340.3 479.6 L1341.1 479.6 L1341.9 479.5 L1342.7 479.5 L1343.6 479.5 L1344.4 479.5 L1345.2 479.4 L1346.0 479.4 L1346.8 479.4 L1347.6 479.4 L1348.4 479.3 L1349.2 479.3 L1350.0 479.3 L1350.0 479.3 L1350.8 474.8 L1351.6 470.9 L1352.4 467.6 L1353.2 464.8 L1354.0 462.4 L1354.8 460.3 L1355.6 458.6 L1356.4 457.0 L1357.2 455.7 L1358.0 454.5 L1358.8 453.5 L1359.6 452.6 L1360.4 451.8 L1361.2 451.1 L1362.0 450.4 L1362.8 449.9 L1363.6 449.3 L1364.4 448.9 L1365.2 448.4 L1366.0 448.0 L1366.8 447.7 L1367.6 447.3 L1368.4 447.0 L1369.2 446.7 L1370.0 446.4 L1370.8 446.2 L1371.6 445.9 L1372.4 445.7 L1373.2 445.5 L1374.0 445.3 L1374.8 445.1 L1375.7 444.9 L1376.5 444.7 L1377.3 444.5 L1378.1 444.3 L1378.9 444.2 L1379.7 444.0 L1380.5 443.8 L1381.3 443.7 L1382.1 443.5 L1382.9 443.4 L1383.7 443.3 L1384.5 443.1 L1385.3 443.0 L1386.1 442.9 L1386.9 442.8 L1387.7 442.7 L1388.5 442.6 L1389.3 442.5 L1390.1 442.4 L1390.9 442.3 L1391.7 442.2 L1392.5 442.1 L1393.3 442.0 L1394.1 441.9 L1394.9 441.8 L1395.7 441.7 L1396.5 441.6 L1397.3 441.6 L1398.1 441.5 L1398.9 441.4 L1399.7 441.3 L1400.5 441.3 L1401.3 441.2 L1401.3 441.2 L1402.1 433.0 L1402.9 426.0 L1403.7 420.0 L1404.5 415.0 L1405.3 410.6 L1406.1 406.9 L1406.9 403.6 L1407.7 400.9 L1408.5 398.4 L1409.3 396.3 L1410.1 394.5 L1410.9 392.8 L1411.7 391.4 L1412.5 390.1 L1413.3 388.9 L1414.2 387.9 L1415.0 387.0 L1415.8 386.1 L1416.6 385.3 L1417.4 384.6 L1418.2 384.0 L1419.0 383.3 L1419.8 382.8 L1420.6 382.2 L1421.4 381.7 L1422.2 381.3 L1423.0 380.8 L1423.8 380.4 L1424.6 380.0 L1425.4 379.6 L1426.2 379.2 L1427.0 378.9 L1427.8 378.5 L1428.6 378.2 L1429.4 377.9 L1430.2 377.6 L1431.0 377.3 L1431.8 377.0 L1432.6 376.8 L1433.4 376.5 L1434.2 376.3 L1435.0 376.0 L1435.8 375.8 L1436.6 375.6 L1437.4 375.3 L1438.2 375.1 L1439.1 374.9 L1439.9 374.7 L1440.7 374.5 L1441.5 374.3 L1442.3 374.2 L1443.1 374.0 L1443.9 373.8 L1444.7 373.7 L1445.5 373.5 L1446.3 373.3 L1447.1 373.2 L1447.9 373.0 L1448.7 372.9 L1449.5 372.8 L1450.3 372.6 L1451.1 372.5 L1451.9 372.4 L1452.7 372.3 L1453.5 372.1 L1454.3 372.0 L1455.1 371.9 L1455.9 371.8 L1456.7 371.7 L1457.5 371.6 L1458.3 371.5 L1459.1 371.4 L1459.9 371.3 L1460.7 371.2 L1461.5 371.2 L1462.3 371.1 L1463.1 371.0 L1464.0 370.9 L1464.8 370.8 L1465.6 370.8 L1466.4 370.7 L1467.2 370.6 L1468.0 370.6 L1468.8 370.5 L1469.6 370.4 L1470.4 370.4 L1471.2 370.3 L1472.0 370.3 L1472.8 370.2 L1473.6 370.2 L1474.4 370.1 L1475.2 370.0 L1476.0 370.0 L1476.0 370.0 L1476.8 365.5 L1477.6 361.7 L1478.4 358.5 L1479.2 355.7 L1480.0 353.3 L1480.9 351.3 L1481.7 349.5 L1482.5 348.0 L1483.3 346.7 L1484.1 345.5 L1484.9 344.5 L1485.7 343.7 L1486.5 342.9 L1487.3 342.2 L1488.1 341.6 L1488.9 341.0 L1489.8 340.5 L1490.6 340.0 L1491.4 339.6 L1492.2 339.2 L1493.0 338.9 L1493.8 338.5 L1494.6 338.2 L1495.4 337.9 L1496.2 337.7 L1497.0 337.4 L1497.8 337.2 L1498.6 336.9 L1499.5 336.7 L1500.3 336.5 L1501.1 336.3 L1501.9 336.1 L1502.7 335.9 L1503.5 335.8 L1504.3 335.6 L1505.1 335.4 L1505.9 335.3 L1506.7 335.1 L1507.5 335.0 L1508.4 334.8 L1509.2 334.7 L1510.0 334.6 L1510.8 334.4 L1511.6 334.3 L1512.4 334.2 L1513.2 334.1 L1514.0 334.0 L1514.8 333.9 L1515.6 333.8 L1516.4 333.7 L1517.2 333.6 L1518.1 333.5 L1518.9 333.4 L1519.7 333.3 L1520.5 333.2 L1521.3 333.1 L1522.1 333.0 L1522.9 333.0 L1523.7 332.9 L1524.5 332.8 L1525.3 332.7 L1526.1 332.7 L1527.0 332.6 L1527.8 332.5 L1528.6 332.5 L1529.4 332.4 L1530.2 332.4 L1531.0 332.3 L1531.0 332.3 L1531.8 328.5 L1532.6 325.2 L1533.4 322.4 L1534.2 320.0 L1535.0 318.0 L1535.9 316.3 L1536.7 314.8 L1537.5 313.5 L1538.3 312.4 L1539.1 311.4 L1539.9 310.5 L1540.7 309.8 L1541.5 309.1 L1542.3 308.5 L1543.1 308.0 L1543.9 307.5 L1544.8 307.0 L1545.6 306.7 L1546.4 306.3 L1547.2 306.0 L1548.0 305.7 L1548.8 305.4 L1549.6 305.1 L1550.4 304.9 L1551.2 304.6 L1552.0 304.4 L1552.8 304.2 L1553.7 304.0 L1554.5 303.8 L1555.3 303.6 L1556.1 303.5 L1556.9 303.3 L1557.7 303.1 L1558.5 303.0 L1559.3 302.9 L1560.1 302.7 L1560.9 302.6 L1561.8 302.5 L1562.6 302.3 L1563.4 302.2 L1564.2 302.1 L1565.0 302.0 L1565.8 301.9 L1566.6 301.8 L1567.4 301.7 L1568.2 301.6 L1569.0 301.5 L1569.8 301.4 L1570.7 301.3 L1571.5 301.2 L1572.3 301.1 L1573.1 301.0 L1573.9 301.0 L1574.7 300.9 L1575.5 300.8 L1576.3 300.7 L1577.1 300.7 L1577.9 300.6 L1578.7 300.5 L1579.6 300.5 L1580.4 300.4 L1581.2 300.4 L1582.0 300.3 L1582.8 300.2 L1583.6 300.2 L1584.4 300.1 L1585.2 300.1 L1586.0 300.0 L1586.8 300.0 L1587.6 299.9 L1588.5 299.9 L1589.3 299.9 L1590.1 299.8 L1590.9 299.8 L1591.7 299.7 L1592.5 299.7 L1592.5 299.7 L1593.3 299.1 L1594.1 298.6 L1594.9 298.1 L1595.7 297.6 L1596.5 297.2 L1597.3 296.8 L1598.1 296.4 L1598.9 296.0 L1599.7 295.7 L1600.5 295.4 L1601.3 295.1 L1602.1 294.8 L1602.9 294.6 L1603.7 294.3 L1604.5 294.1 L1605.3 293.9 L1606.1 293.7 L1606.9 293.5 L1607.7 293.4 L1608.5 293.2 L1609.3 293.0 L1610.1 292.9 L1610.9 292.8 L1611.7 292.6 L1612.5 292.5 L1613.3 292.4 L1614.1 292.3 L1614.9 292.2 L1615.7 292.1 L1616.5 292.0 L1617.3 291.9 L1618.1 291.8 L1618.9 291.7 L1619.7 291.6 L1620.5 291.5 L1621.3 291.5 L1622.1 291.4 L1622.9 291.3 L1623.7 291.2 L1624.5 291.2 L1625.3 291.1 L1626.1 291.1 L1626.9 291.0 L1627.7 290.9 L1628.5 290.9 L1629.3 290.8 L1630.1 290.8 L1630.9 290.7 L1631.8 290.7 L1632.6 290.6 L1633.4 290.6 L1634.2 290.5 L1635.0 290.5 L1635.8 290.5 L1636.6 290.4 L1637.4 290.4 L1638.2 290.3 L1639.0 290.3 L1639.8 290.3 L1640.6 290.2 L1641.4 290.2 L1642.2 290.2 L1643.0 290.1 L1643.8 290.1 L1644.6 290.1 L1645.4 290.0 L1646.2 290.0 L1647.0 290.0 L1647.8 289.9 L1648.6 289.9 L1649.4 289.9 L1650.2 289.8 L1651.0 289.8 L1651.8 289.8 L1652.6 289.8 L1653.4 289.7 L1654.2 289.7 L1655.0 289.7 L1655.8 289.7 L1656.6 289.6 L1657.4 289.6 L1658.2 289.6 L1659.0 289.6 L1659.8 289.6 L1660.6 289.5 L1661.4 289.5 L1662.2 289.5 L1663.0 289.5 L1663.8 289.5 L1664.6 289.4 L1665.4 289.4 L1666.2 289.4 L1667.0 289.4 L1667.8 289.4 L1668.6 289.3 L1669.4 289.3 L1670.2 289.3 L1671.0 289.3 L1671.0 289.3 L1671.6 305.0 L1672.2 317.3 L1673.0 333.4 L1674.0 350.2 L1675.0 364.7 L1675.7 372.5 L1676.4 379.4 L1677.2 385.8 L1678.0 391.8 L1678.9 397.6 L1680.0 403.5 L1680.7 407.1 L1681.4 410.7 L1682.2 414.2 L1683.1 417.8 L1683.9 421.2 L1684.8 424.5 L1685.7 427.7 L1686.6 430.6 L1687.6 433.4 L1688.5 435.9 L1689.2 437.6 L1689.9 439.2 L1690.6 440.6 L1691.2 441.9 L1691.9 443.1 L1692.6 444.2 L1693.3 445.3 L1694.1 446.2 L1694.9 447.2 L1695.8 448.1 L1696.8 449.0 L1697.8 450.0 L1699.0 451.0 L1699.6 451.5 L1700.3 452.0 L1701.0 452.5 L1701.7 453.1 L1702.5 453.6 L1703.3 454.1 L1704.1 454.6 L1704.9 455.1 L1705.7 455.6 L1706.6 456.1 L1707.5 456.6 L1708.3 457.1 L1709.2 457.5 L1710.1 458.0 L1711.0 458.5 L1711.9 458.9 L1712.8 459.3 L1713.6 459.7 L1714.5 460.1 L1715.3 460.5 L1716.2 460.9 L1717.0 461.3 L1717.8 461.6 L1718.6 461.9 L1719.3 462.2 L1720.0 462.5 L1721.0 462.9 L1722.0 463.2 L1723.0 463.5 L1724.0 463.7 L1725.0 463.9 L1726.0 464.1 L1727.0 464.2 L1727.9 464.4 L1728.8 464.5 L1729.7 464.6 L1730.5 464.6 L1731.3 464.7 L1732.1 464.7 L1732.8 464.8 L1733.4 464.8 L1734.0 464.9 L1734.5 464.9 L1735.0 465.0 L1735.0 465.0 L1735.4 465.0 L1735.9 465.1 L1736.4 465.1 L1736.9 465.2 L1737.5 465.2 L1738.1 465.3 L1738.7 465.3 L1739.4 465.4 L1740.0 465.4 L1740.8 465.5 L1741.5 465.5 L1742.3 465.6 L1743.0 465.7 L1743.8 465.7 L1744.7 465.8 L1745.5 465.9 L1746.4 466.0 L1747.2 466.0 L1748.1 466.1 L1749.0 466.2 L1749.9 466.3 L1750.8 466.3 L1751.8 466.4 L1752.7 466.5 L1753.6 466.6 L1754.6 466.7 L1755.5 466.7 L1756.4 466.8 L1757.4 466.9 L1758.3 467.0 L1759.2 467.1 L1760.1 467.1 L1761.0 467.2 L1762.0 467.3 L1762.8 467.4 L1763.7 467.5 L1764.6 467.5 L1765.4 467.6 L1766.3 467.7 L1767.1 467.8 L1767.9 467.9 L1768.6 467.9 L1769.4 468.0 L1770.3 468.1 L1771.2 468.2 L1772.1 468.3 L1773.0 468.4 L1773.9 468.5 L1774.9 468.6 L1775.8 468.7 L1776.7 468.8 L1777.7 468.9 L1778.6 469.0 L1779.5 469.1 L1780.5 469.2 L1781.4 469.3 L1782.3 469.4 L1783.2 469.5 L1784.1 469.6 L1785.0 469.7 L1785.9 469.8 L1786.8 469.9 L1787.6 470.0 L1788.5 470.1 L1789.3 470.2 L1790.1 470.3 L1790.9 470.4 L1791.7 470.5 L1792.5 470.6 L1793.2 470.7 L1793.9 470.7 L1794.6 470.8 L1795.2 470.9 L1795.8 471.0 L1796.4 471.0 L1797.0 471.1 L1797.5 471.2 L1798.0 471.2 L1798.5 471.3 L1801.4 471.6 L1801.4 471.5 L1801.5 472.0 L1802.3 472.8 L1803.1 473.8 L1804.0 475.0 L1805.0 476.2 L1806.0 477.3 L1806.8 478.0 L1807.5 478.6 L1808.4 479.3 L1809.2 479.9 L1810.1 480.4 L1811.0 481.0 L1812.0 481.5 L1812.7 481.8 L1813.4 482.2 L1814.2 482.5 L1815.0 482.8 L1815.8 483.1 L1816.6 483.3 L1817.4 483.6 L1818.2 483.8 L1819.1 484.1 L1820.0 484.3 L1820.7 484.5 L1821.5 484.7 L1822.2 484.8 L1822.9 485.0 L1823.7 485.1 L1824.5 485.2 L1825.3 485.4 L1826.1 485.5 L1827.0 485.6 L1827.9 485.8 L1828.9 485.9 L1830.0 486.0 L1830.7 486.1 L1831.5 486.2 L1832.3 486.2 L1833.1 486.3 L1834.1 486.4 L1835.0 486.5 L1836.0 486.5 L1836.9 486.6 L1837.9 486.7 L1838.9 486.8 L1839.8 486.8 L1840.8 486.9 L1841.7 487.0 L1842.6 487.0 L1843.4 487.1 L1844.2 487.1 L1844.9 487.2 L1845.5 487.2 L1846.0 487.3 L1846.5 487.3" fill="none" stroke="#0000ff" stroke-width="1.8" stroke-linejoin="round"/>
<path d="M1250.0 495.4 L1292.8 495.4 L1292.8 495.4 L1293.6 493.8 L1294.4 492.5 L1295.2 491.2 L1296.0 490.2 L1296.8 489.2 L1297.6 488.3 L1298.4 487.6 L1299.2 486.9 L1300.1 486.2 L1300.9 485.7 L1301.7 485.2 L1302.5 484.7 L1303.3 484.3 L1304.1 483.9 L1304.9 483.6 L1305.7 483.3 L1306.5 483.0 L1307.3 482.8 L1308.1 482.5 L1308.9 482.3 L1309.7 482.1 L1310.5 481.9 L1311.3 481.7 L1312.1 481.6 L1312.9 481.4 L1313.7 481.3 L1314.6 481.2 L1315.4 481.0 L1316.2 480.9 L1317.0 480.8 L1317.8 480.7 L1318.6 480.6 L1319.4 480.5 L1320.2 480.4 L1321.0 480.4 L1321.8 480.3 L1322.6 480.2 L1323.4 480.1 L1324.2 480.1 L1325.0 480.0 L1325.8 479.9 L1326.6 479.9 L1327.4 479.8 L1328.2 479.8 L1329.1 479.7 L1329.9 479.6 L1330.7 479.6 L1331.5 479.5 L1332.3 479.5 L1333.1 479.5 L1333.9 479.4 L1334.7 479.4 L1335.5 479.3 L1336.3 479.3 L1337.1 479.3 L1337.9 479.2 L1338.7 479.2 L1339.5 479.2 L1340.3 479.1 L1341.1 479.1 L1341.9 479.1 L1342.7 479.0 L1343.6 479.0 L1344.4 479.0 L1345.2 478.9 L1346.0 478.9 L1346.8 478.9 L1347.6 478.9 L1348.4 478.8 L1349.2 478.8 L1350.0 478.8 L1350.0 478.8 L1350.8 475.1 L1351.6 472.0 L1352.4 469.3 L1353.2 467.0 L1354.0 465.0 L1354.8 463.3 L1355.6 461.9 L1356.4 460.6 L1357.2 459.5 L1358.0 458.6 L1358.8 457.7 L1359.6 457.0 L1360.4 456.3 L1361.2 455.8 L1362.0 455.2 L1362.8 454.8 L1363.6 454.3 L1364.4 454.0 L1365.2 453.6 L1366.0 453.3 L1366.8 453.0 L1367.6 452.7 L1368.4 452.4 L1369.2 452.2 L1370.0 452.0 L1370.8 451.8 L1371.6 451.6 L1372.4 451.4 L1373.2 451.2 L1374.0 451.0 L1374.8 450.8 L1375.7 450.7 L1376.5 450.5 L1377.3 450.4 L1378.1 450.2 L1378.9 450.1 L1379.7 450.0 L1380.5 449.9 L1381.3 449.7 L1382.1 449.6 L1382.9 449.5 L1383.7 449.4 L1384.5 449.3 L1385.3 449.2 L1386.1 449.1 L1386.9 449.0 L1387.7 448.9 L1388.5 448.8 L1389.3 448.7 L1390.1 448.6 L1390.9 448.6 L1391.7 448.5 L1392.5 448.4 L1393.3 448.3 L1394.1 448.3 L1394.9 448.2 L1395.7 448.1 L1396.5 448.1 L1397.3 448.0 L1398.1 447.9 L1398.9 447.9 L1399.7 447.8 L1400.5 447.8 L1401.3 447.7 L1401.3 447.7 L1402.1 439.9 L1402.9 433.2 L1403.7 427.5 L1404.5 422.7 L1405.3 418.5 L1406.1 415.0 L1406.9 411.9 L1407.7 409.2 L1408.5 406.9 L1409.3 404.9 L1410.1 403.1 L1410.9 401.6 L1411.7 400.2 L1412.5 399.0 L1413.3 397.9 L1414.2 396.9 L1415.0 396.0 L1415.8 395.2 L1416.6 394.4 L1417.4 393.7 L1418.2 393.1 L1419.0 392.5 L1419.8 392.0 L1420.6 391.5 L1421.4 391.0 L1422.2 390.5 L1423.0 390.1 L1423.8 389.7 L1424.6 389.3 L1425.4 388.9 L1426.2 388.6 L1427.0 388.3 L1427.8 387.9 L1428.6 387.6 L1429.4 387.3 L1430.2 387.1 L1431.0 386.8 L1431.8 386.5 L1432.6 386.3 L1433.4 386.0 L1434.2 385.8 L1435.0 385.5 L1435.8 385.3 L1436.6 385.1 L1437.4 384.9 L1438.2 384.7 L1439.1 384.5 L1439.9 384.3 L1440.7 384.1 L1441.5 383.9 L1442.3 383.8 L1443.1 383.6 L1443.9 383.4 L1444.7 383.3 L1445.5 383.1 L1446.3 383.0 L1447.1 382.8 L1447.9 382.7 L1448.7 382.6 L1449.5 382.4 L1450.3 382.3 L1451.1 382.2 L1451.9 382.1 L1452.7 382.0 L1453.5 381.8 L1454.3 381.7 L1455.1 381.6 L1455.9 381.5 L1456.7 381.4 L1457.5 381.3 L1458.3 381.3 L1459.1 381.2 L1459.9 381.1 L1460.7 381.0 L1461.5 380.9 L1462.3 380.8 L1463.1 380.8 L1464.0 380.7 L1464.8 380.6 L1465.6 380.5 L1466.4 380.5 L1467.2 380.4 L1468.0 380.3 L1468.8 380.3 L1469.6 380.2 L1470.4 380.2 L1471.2 380.1 L1472.0 380.0 L1472.8 380.0 L1473.6 379.9 L1474.4 379.9 L1475.2 379.8 L1476.0 379.8 L1476.0 379.8 L1476.8 375.6 L1477.6 372.0 L1478.4 368.9 L1479.2 366.3 L1480.0 364.0 L1480.9 362.1 L1481.7 360.5 L1482.5 359.0 L1483.3 357.8 L1484.1 356.7 L1484.9 355.8 L1485.7 354.9 L1486.5 354.2 L1487.3 353.5 L1488.1 352.9 L1488.9 352.4 L1489.8 351.9 L1490.6 351.5 L1491.4 351.1 L1492.2 350.7 L1493.0 350.4 L1493.8 350.1 L1494.6 349.8 L1495.4 349.5 L1496.2 349.3 L1497.0 349.0 L1497.8 348.8 L1498.6 348.6 L1499.5 348.4 L1500.3 348.2 L1501.1 348.0 L1501.9 347.8 L1502.7 347.6 L1503.5 347.5 L1504.3 347.3 L1505.1 347.2 L1505.9 347.0 L1506.7 346.9 L1507.5 346.7 L1508.4 346.6 L1509.2 346.5 L1510.0 346.3 L1510.8 346.2 L1511.6 346.1 L1512.4 346.0 L1513.2 345.9 L1514.0 345.8 L1514.8 345.7 L1515.6 345.6 L1516.4 345.5 L1517.2 345.4 L1518.1 345.3 L1518.9 345.2 L1519.7 345.1 L1520.5 345.1 L1521.3 345.0 L1522.1 344.9 L1522.9 344.8 L1523.7 344.8 L1524.5 344.7 L1525.3 344.6 L1526.1 344.6 L1527.0 344.5 L1527.8 344.4 L1528.6 344.4 L1529.4 344.3 L1530.2 344.3 L1531.0 344.2 L1531.0 344.2 L1531.8 340.6 L1532.6 337.5 L1533.4 334.9 L1534.2 332.6 L1535.0 330.7 L1535.9 329.1 L1536.7 327.6 L1537.5 326.4 L1538.3 325.4 L1539.1 324.4 L1539.9 323.6 L1540.7 322.9 L1541.5 322.3 L1542.3 321.7 L1543.1 321.2 L1543.9 320.8 L1544.8 320.3 L1545.6 320.0 L1546.4 319.6 L1547.2 319.3 L1548.0 319.0 L1548.8 318.8 L1549.6 318.5 L1550.4 318.3 L1551.2 318.1 L1552.0 317.8 L1552.8 317.7 L1553.7 317.5 L1554.5 317.3 L1555.3 317.1 L1556.1 317.0 L1556.9 316.8 L1557.7 316.7 L1558.5 316.5 L1559.3 316.4 L1560.1 316.2 L1560.9 316.1 L1561.8 316.0 L1562.6 315.9 L1563.4 315.8 L1564.2 315.7 L1565.0 315.6 L1565.8 315.5 L1566.6 315.4 L1567.4 315.3 L1568.2 315.2 L1569.0 315.1 L1569.8 315.0 L1570.7 314.9 L1571.5 314.8 L1572.3 314.7 L1573.1 314.7 L1573.9 314.6 L1574.7 314.5 L1575.5 314.5 L1576.3 314.4 L1577.1 314.3 L1577.9 314.3 L1578.7 314.2 L1579.6 314.1 L1580.4 314.1 L1581.2 314.0 L1582.0 314.0 L1582.8 313.9 L1583.6 313.9 L1584.4 313.8 L1585.2 313.8 L1586.0 313.7 L1586.8 313.7 L1587.6 313.6 L1588.5 313.6 L1589.3 313.6 L1590.1 313.5 L1590.9 313.5 L1591.7 313.4 L1592.5 313.4 L1592.5 313.4 L1593.3 312.9 L1594.1 312.4 L1594.9 312.0 L1595.7 311.5 L1596.5 311.2 L1597.3 310.8 L1598.1 310.5 L1598.9 310.1 L1599.7 309.9 L1600.5 309.6 L1601.3 309.3 L1602.1 309.1 L1602.9 308.9 L1603.7 308.7 L1604.5 308.5 L1605.3 308.3 L1606.1 308.1 L1606.9 308.0 L1607.7 307.8 L1608.5 307.7 L1609.3 307.5 L1610.1 307.4 L1610.9 307.3 L1611.7 307.1 L1612.5 307.0 L1613.3 306.9 L1614.1 306.8 L1614.9 306.7 L1615.7 306.6 L1616.5 306.6 L1617.3 306.5 L1618.1 306.4 L1618.9 306.3 L1619.7 306.2 L1620.5 306.2 L1621.3 306.1 L1622.1 306.0 L1622.9 306.0 L1623.7 305.9 L1624.5 305.9 L1625.3 305.8 L1626.1 305.8 L1626.9 305.7 L1627.7 305.7 L1628.5 305.6 L1629.3 305.6 L1630.1 305.5 L1630.9 305.5 L1631.8 305.4 L1632.6 305.4 L1633.4 305.3 L1634.2 305.3 L1635.0 305.3 L1635.8 305.2 L1636.6 305.2 L1637.4 305.1 L1638.2 305.1 L1639.0 305.1 L1639.8 305.0 L1640.6 305.0 L1641.4 305.0 L1642.2 305.0 L1643.0 304.9 L1643.8 304.9 L1644.6 304.9 L1645.4 304.8 L1646.2 304.8 L1647.0 304.8 L1647.8 304.8 L1648.6 304.7 L1649.4 304.7 L1650.2 304.7 L1651.0 304.7 L1651.8 304.6 L1652.6 304.6 L1653.4 304.6 L1654.2 304.6 L1655.0 304.5 L1655.8 304.5 L1656.6 304.5 L1657.4 304.5 L1658.2 304.5 L1659.0 304.4 L1659.8 304.4 L1660.6 304.4 L1661.4 304.4 L1662.2 304.4 L1663.0 304.4 L1663.8 304.3 L1664.6 304.3 L1665.4 304.3 L1666.2 304.3 L1667.0 304.3 L1667.8 304.3 L1668.6 304.2 L1669.4 304.2 L1670.2 304.2 L1671.0 304.2 L1671.0 304.2 L1671.4 315.0 L1672.2 329.1 L1673.3 347.5 L1674.5 364.7 L1675.2 373.3 L1676.0 381.3 L1676.8 389.0 L1677.7 396.3 L1678.8 403.5 L1679.5 407.5 L1680.2 411.5 L1680.9 415.4 L1681.7 419.3 L1682.6 423.0 L1683.4 426.6 L1684.4 430.0 L1685.4 433.1 L1686.4 435.9 L1687.1 437.5 L1687.8 439.0 L1688.4 440.3 L1689.1 441.6 L1689.8 442.7 L1690.5 443.7 L1691.3 444.7 L1692.1 445.7 L1692.9 446.6 L1693.8 447.4 L1694.8 448.3 L1695.8 449.2 L1696.8 450.1 L1698.0 451.0 L1698.6 451.5 L1699.3 452.0 L1700.0 452.5 L1700.8 453.0 L1701.5 453.5 L1702.3 454.0 L1703.1 454.5 L1704.0 455.0 L1704.8 455.5 L1705.7 456.0 L1706.6 456.5 L1707.4 457.0 L1708.3 457.5 L1709.2 458.0 L1710.1 458.4 L1711.0 458.9 L1711.9 459.3 L1712.8 459.7 L1713.7 460.2 L1714.5 460.6 L1715.4 460.9 L1716.2 461.3 L1717.0 461.7 L1717.8 462.0 L1718.6 462.3 L1719.3 462.6 L1720.0 462.9 L1721.0 463.3 L1722.1 463.6 L1723.1 463.9 L1724.1 464.2 L1725.1 464.4 L1726.1 464.6 L1727.0 464.7 L1728.0 464.8 L1728.9 464.9 L1729.7 465.0 L1730.6 465.1 L1731.4 465.2 L1732.1 465.2 L1732.8 465.3 L1733.4 465.3 L1734.0 465.4 L1734.5 465.4 L1735.0 465.5 L1735.0 465.5 L1735.4 465.5 L1735.9 465.6 L1736.4 465.6 L1736.9 465.7 L1737.5 465.7 L1738.1 465.7 L1738.7 465.8 L1739.4 465.9 L1740.0 465.9 L1740.8 466.0 L1741.5 466.0 L1742.3 466.1 L1743.0 466.2 L1743.8 466.2 L1744.7 466.3 L1745.5 466.3 L1746.4 466.4 L1747.2 466.5 L1748.1 466.6 L1749.0 466.6 L1749.9 466.7 L1750.8 466.8 L1751.8 466.9 L1752.7 466.9 L1753.6 467.0 L1754.6 467.1 L1755.5 467.2 L1756.4 467.2 L1757.4 467.3 L1758.3 467.4 L1759.2 467.5 L1760.1 467.5 L1761.0 467.6 L1762.0 467.7 L1762.8 467.8 L1763.7 467.8 L1764.6 467.9 L1765.4 468.0 L1766.3 468.0 L1767.1 468.1 L1767.9 468.2 L1768.6 468.2 L1769.4 468.3 L1770.3 468.4 L1771.2 468.4 L1772.1 468.5 L1773.0 468.6 L1773.9 468.7 L1774.9 468.8 L1775.8 468.8 L1776.7 468.9 L1777.7 469.0 L1778.6 469.1 L1779.5 469.1 L1780.5 469.2 L1781.4 469.3 L1782.3 469.4 L1783.2 469.5 L1784.1 469.5 L1785.0 469.6 L1785.9 469.7 L1786.8 469.8 L1787.6 469.8 L1788.5 469.9 L1789.3 470.0 L1790.1 470.0 L1790.9 470.1 L1791.7 470.2 L1792.5 470.2 L1793.2 470.3 L1793.9 470.4 L1794.6 470.4 L1795.2 470.5 L1795.8 470.5 L1796.4 470.6 L1797.0 470.7 L1797.5 470.7 L1798.0 470.8 L1798.5 470.8 L1801.4 471.0 L1801.4 470.9 L1801.5 471.5 L1802.3 472.4 L1803.1 473.6 L1804.0 474.9 L1805.0 476.3 L1806.0 477.5 L1806.8 478.3 L1807.5 479.0 L1808.4 479.7 L1809.2 480.4 L1810.1 481.0 L1811.0 481.6 L1812.0 482.2 L1812.7 482.6 L1813.4 482.9 L1814.2 483.3 L1815.0 483.6 L1815.8 483.9 L1816.6 484.2 L1817.4 484.4 L1818.2 484.7 L1819.1 485.0 L1820.0 485.2 L1820.7 485.4 L1821.5 485.6 L1822.2 485.7 L1822.9 485.9 L1823.7 486.1 L1824.5 486.2 L1825.3 486.3 L1826.1 486.5 L1827.0 486.6 L1827.9 486.7 L1828.9 486.9 L1830.0 487.0 L1830.7 487.1 L1831.5 487.2 L1832.3 487.2 L1833.1 487.3 L1834.1 487.4 L1835.0 487.5 L1836.0 487.5 L1836.9 487.6 L1837.9 487.7 L1838.9 487.8 L1839.8 487.8 L1840.8 487.9 L1841.7 488.0 L1842.6 488.0 L1843.4 488.1 L1844.2 488.1 L1844.9 488.2 L1845.5 488.2 L1846.0 488.3 L1846.5 488.3" fill="none" stroke="#008000" stroke-width="1.9" stroke-linejoin="round"/>
<path d="M1249.5 143.5 H1847 M1249.5 143 V511" stroke="#000" stroke-width="1.400" fill="none"/>
<path d="M1249 510.3 H1847" stroke="#000" stroke-width="1.800" fill="none"/>
<text x="1246" y="154.5" text-anchor="end" font-size="17.900" fill="#f3d6d6" font-family="Liberation Sans, sans-serif">154.02</text>
<text x="1246" y="190.9" text-anchor="end" font-size="17.900" fill="#f3d6d6" font-family="Liberation Sans, sans-serif">144.96</text>
<text x="1246" y="227.4" text-anchor="end" font-size="17.900" fill="#f3d6d6" font-family="Liberation Sans, sans-serif">135.90</text>
<text x="1246" y="263.8" text-anchor="end" font-size="17.900" fill="#f3d6d6" font-family="Liberation Sans, sans-serif">126.84</text>
<text x="1246" y="300.2" text-anchor="end" font-size="17.900" fill="#f3d6d6" font-family="Liberation Sans, sans-serif">117.78</text>
<text x="1246" y="336.7" text-anchor="end" font-size="17.900" fill="#f3d6d6" font-family="Liberation Sans, sans-serif">108.72</text>
<text x="1246" y="373.1" text-anchor="end" font-size="17.900" fill="#f3d6d6" font-family="Liberation Sans, sans-serif">99.66</text>
<text x="1246" y="409.5" text-anchor="end" font-size="17.900" fill="#f3d6d6" font-family="Liberation Sans, sans-serif">90.60</text>
<text x="1246" y="445.9" text-anchor="end" font-size="17.900" fill="#f3d6d6" font-family="Liberation Sans, sans-serif">81.54</text>
<text x="1246" y="482.4" text-anchor="end" font-size="17.900" fill="#f3d6d6" font-family="Liberation Sans, sans-serif">72.48</text>
<text transform="translate(1256.2 515) rotate(-90)" text-anchor="end" font-size="18.300" fill="#ececec" font-family="Liberation Sans, sans-serif">1</text>
<text transform="translate(1293.6 515) rotate(-90)" text-anchor="end" font-size="18.300" fill="#ececec" font-family="Liberation Sans, sans-serif">144</text>
<text transform="translate(1331.0 515) rotate(-90)" text-anchor="end" font-size="18.300" fill="#ececec" font-family="Liberation Sans, sans-serif">287</text>
<text transform="translate(1368.5 515) rotate(-90)" text-anchor="end" font-size="18.300" fill="#ececec" font-family="Liberation Sans, sans-serif">430</text>
<text transform="translate(1405.9 515) rotate(-90)" text-anchor="end" font-size="18.300" fill="#ececec" font-family="Liberation Sans, sans-serif">573</text>
<text transform="translate(1443.3 515) rotate(-90)" text-anchor="end" font-size="18.300" fill="#ececec" font-family="Liberation Sans, sans-serif">716</text>
<text transform="translate(1480.7 515) rotate(-90)" text-anchor="end" font-size="18.300" fill="#ececec" font-family="Liberation Sans, sans-serif">859</text>
<text transform="translate(1518.1 515) rotate(-90)" text-anchor="end" font-size="18.300" fill="#ececec" font-family="Liberation Sans, sans-serif">1002</text>
<text transform="translate(1555.6 515) rotate(-90)" text-anchor="end" font-size="18.300" fill="#ececec" font-family="Liberation Sans, sans-serif">1145</text>
<text transform="translate(1593.0 515) rotate(-90)" text-anchor="end" font-size="18.300" fill="#ececec" font-family="Liberation Sans, sans-serif">1288</text>
<text transform="translate(1630.4 515) rotate(-90)" text-anchor="end" font-size="18.300" fill="#ececec" font-family="Liberation Sans, sans-serif">1431</text>
<text transform="translate(1667.8 515) rotate(-90)" text-anchor="end" font-size="18.300" fill="#ececec" font-family="Liberation Sans, sans-serif">1574</text>
<text transform="translate(1705.2 515) rotate(-90)" text-anchor="end" font-size="18.300" fill="#ececec" font-family="Liberation Sans, sans-serif">1717</text>
<text transform="translate(1742.7 515) rotate(-90)" text-anchor="end" font-size="18.300" fill="#ececec" font-family="Liberation Sans, sans-serif">1860</text>
<text transform="translate(1780.1 515) rotate(-90)" text-anchor="end" font-size="18.300" fill="#ececec" font-family="Liberation Sans, sans-serif">2003</text>
<text transform="translate(1817.5 515) rotate(-90)" text-anchor="end" font-size="18.300" fill="#ececec" font-family="Liberation Sans, sans-serif">2146</text>
<text transform="translate(1169.500 325) rotate(-90)" text-anchor="middle" font-size="18.300" font-weight="bold" fill="#f4f4f4" font-family="Liberation Sans, sans-serif">Temperature [ °C ]</text>
<text x="1548" y="589" text-anchor="middle" font-size="16.500" font-weight="bold" fill="#f4f4f4" font-family="Liberation Sans, Noto Sans CJK SC, sans-serif">帧</text>
<rect x="1173" y="626.500" width="685" height="9.500" rx="4.700" fill="#45464d"/>
<rect x="1173" y="626.500" width="520" height="9.500" fill="#838390"/>
<circle cx="1173" cy="631.2" r="15" fill="#d3d3d0"/><circle cx="1693" cy="631.2" r="15" fill="#d3d3d0"/>
</svg>
<svg style="left:1881.0px;top:138.1px" width="27" height="27" viewBox="0 0 512 512" fill="#f4f4f4"><path d="M255.545 8c-66.269.119-126.438 26.233-170.860 68.685L48.971 40.971C33.851 25.851 8 36.559 8 57.941V192c0 13.255 10.745 24 24 24h134.059c21.382 0 32.090-25.851 16.971-40.971l-41.750-41.750c30.864-28.899 70.801-44.907 113.230-45.273 92.398-.798 170.283 73.977 169.484 169.442C423.236 348.009 349.816 424 256 424c-41.127 0-79.997-14.678-110.630-41.556-4.743-4.161-11.906-3.908-16.368.553L89.340 422.659c-4.872 4.872-4.631 12.815.482 17.433C133.798 479.813 192.074 504 256 504c136.966 0 247.999-111.033 248-247.998C504.001 119.193 392.354 7.755 255.545 8z"/></svg>
<svg style="left:1880px;top:187px" width="27.500" height="30" viewBox="-20 -20 488 552"><path d="M408.781 128.007C386.356 127.578 368 146.360 368 168.790V256h-8V79.790c0-22.430-18.356-41.212-40.781-40.783C297.488 39.423 280 57.169 280 79v177h-8V40.790C272 18.360 253.644-.422 231.219.007 209.488.423 192 18.169 192 40v216h-8V80.790c0-22.430-18.356-41.212-40.781-40.783C121.488 40.423 104 58.169 104 80v235.992l-31.648-43.519c-12.993-17.866-38.009-21.817-55.877-8.823-17.865 12.994-21.815 38.010-8.822 55.877l125.601 172.705A48 48 0 0 0 172.073 512h197.590c22.274 0 41.622-15.324 46.724-37.006l26.508-112.660a192.011 192.011 0 0 0 5.104-43.975V168c.001-21.831-17.487-39.577-39.218-39.993z" fill="none" stroke="#f4f4f4" stroke-width="44" stroke-linejoin="round"/></svg>
<svg style="left:1880.5px;top:238.3px" width="28.5" height="28.5" viewBox="0 0 512 512" fill="#f4f4f4"><path d="M507.73 109.1c-2.240-9.030-13.540-12.090-20.120-5.510l-74.360 74.360-67.880-11.310-11.310-67.880 74.360-74.360c6.620-6.620 3.430-17.900-5.660-20.160-47.380-11.740-99.550.91-136.580 37.930-39.640 39.640-50.550 97.100-34.050 147.200L18.740 402.760c-24.990 24.990-24.990 65.510 0 90.500 24.990 24.990 65.510 24.990 90.500 0l213.210-213.210c50.120 16.710 107.470 5.680 147.370-34.220 37.070-37.070 49.700-89.320 37.910-136.730zM64 472c-13.250 0-24-10.750-24-24 0-13.260 10.750-24 24-24s24 10.740 24 24c0 13.250-10.750 24-24 24z"/></svg>
<svg style="left:1881px;top:286px" width="25" height="31" viewBox="0 0 25 31"><rect x="0.500" y="0.500" width="24" height="30" rx="2" fill="#f4f4f4"/>
<g fill="#22222c"><rect x="4" y="4.500" width="3" height="3"/><rect x="9" y="4.500" width="3" height="3"/><rect x="14" y="4.500" width="3" height="3"/><rect x="19" y="4.500" width="2.500" height="3"/>
<rect x="4" y="9.500" width="3" height="3"/><rect x="9" y="9.500" width="3" height="3"/><rect x="14" y="9.500" width="3" height="3"/><rect x="19" y="9.500" width="2.500" height="3"/>
<rect x="4" y="14.500" width="3" height="3"/><rect x="9" y="14.500" width="3" height="3"/><rect x="14" y="14.500" width="3" height="3"/><rect x="19" y="14.500" width="2.500" height="3"/>
<rect x="4" y="19.500" width="3" height="3"/><rect x="9" y="19.500" width="3" height="3"/><rect x="14" y="19.500" width="3" height="3"/><rect x="19" y="19.500" width="2.500" height="3"/><rect x="9" y="25" width="7" height="3.500"/></g></svg>
<svg style="left:1879.2px;top:337.6px" width="30.5" height="26.5" viewBox="0 0 512 512" fill="#f4f4f4"><path d="M503.700 189.800L327.700 37.900C312.300 24.500 288 35.300 288 56v80.100C127.400 137.900 0 170.100 0 322.300c0 61.400 39.600 122.300 83.300 154.100 13.700 9.900 33.100-2.500 28.100-18.600C66.100 312.800 133 274.300 288 272.100V360c0 20.700 24.300 31.500 39.700 18.200l176-152c11.100-9.600 11.100-26.800 0-36.400z"/></svg>
<svg style="left:1880.5px;top:706.5px" width="27" height="27" viewBox="0 0 512 512" fill="#f4f4f4"><path d="M255.545 8c-66.269.119-126.438 26.233-170.860 68.685L48.971 40.971C33.851 25.851 8 36.559 8 57.941V192c0 13.255 10.745 24 24 24h134.059c21.382 0 32.090-25.851 16.971-40.971l-41.750-41.750c30.864-28.899 70.801-44.907 113.230-45.273 92.398-.798 170.283 73.977 169.484 169.442C423.236 348.009 349.816 424 256 424c-41.127 0-79.997-14.678-110.630-41.556-4.743-4.161-11.906-3.908-16.368.553L89.340 422.659c-4.872 4.872-4.631 12.815.482 17.433C133.798 479.813 192.074 504 256 504c136.966 0 247.999-111.033 248-247.998C504.001 119.193 392.354 7.755 255.545 8z"/></svg>
<svg style="left:1880.5px;top:757.5px" width="27" height="27" viewBox="0 0 512 512" fill="#f4f4f4"><path d="M507.73 109.1c-2.240-9.030-13.540-12.090-20.120-5.510l-74.360 74.360-67.880-11.310-11.310-67.880 74.360-74.360c6.620-6.620 3.430-17.900-5.660-20.160-47.380-11.740-99.550.91-136.580 37.930-39.640 39.640-50.550 97.100-34.050 147.200L18.740 402.760c-24.990 24.990-24.990 65.510 0 90.500 24.990 24.990 65.510 24.990 90.500 0l213.210-213.210c50.120 16.710 107.470 5.680 147.370-34.220 37.070-37.070 49.700-89.320 37.910-136.730zM64 472c-13.250 0-24-10.750-24-24 0-13.260 10.750-24 24-24s24 10.740 24 24c0 13.250-10.750 24-24 24z"/></svg>
<svg style="left:1878.5px;top:807.5px" width="31" height="27" viewBox="0 0 512 512" fill="#f4f4f4"><path d="M503.700 189.800L327.700 37.900C312.300 24.500 288 35.300 288 56v80.100C127.400 137.900 0 170.100 0 322.300c0 61.400 39.600 122.300 83.300 154.100 13.700 9.900 33.100-2.500 28.100-18.600C66.100 312.800 133 274.300 288 272.100V360c0 20.700 24.300 31.500 39.700 18.200l176-152c11.100-9.600 11.100-26.800 0-36.400z"/></svg>
<div class="a" style="left:1141px;top:657px;width:779px;height:38px;background:#54595b"></div>
<div class="a" style="left:1143px;top:660px;width:548px;height:33px;background:#262626"></div>
<div class="t" style="left:1159px;top:668.500px;font-size:17.800px;color:#f2f2f2">线温分布图 35</div>
<svg style="left:1620px;top:672px" width="18" height="10" viewBox="0 0 18 10"><path d="M0 0 H18 L9 9.600 Z" fill="#e6e6e6"/></svg>
<div class="badge" style="left:1655px;top:666px;width:30px;height:22px">2</div>
<div class="sq" style="left:1701px;top:666px;background:#d0d0d0"></div>
<svg style="left:1706px;top:670px" width="14" height="14" viewBox="0 0 14 14"><path d="M2.500 2.500 L11.500 11.500 M11.500 2.500 L2.500 11.500" stroke="#54595b" stroke-width="3.600" stroke-linecap="round" fill="none"/></svg>
<div class="sq" style="left:1734px;top:666px;width:23px;background:#d0d0d0"></div>
<svg style="left:1739px;top:670px" width="13" height="13" viewBox="0 0 512 512" fill="#54595b"><path d="M497.900 142.100l-46.100 46.100c-4.700 4.700-12.300 4.700-17 0l-111-111c-4.700-4.700-4.700-12.300 0-17l46.100-46.100c18.700-18.700 49.100-18.700 67.900 0l60.100 60.100c18.800 18.700 18.800 49.100 0 67.900zM284.200 99.800L21.600 362.400.4 483.900c-2.900 16.400 11.400 30.600 27.800 27.800l121.500-21.300 262.600-262.600c4.700-4.700 4.700-12.300 0-17l-111-111c-4.800-4.700-12.400-4.700-17.100 0z"/></svg>
<div class="sq" style="left:1767px;top:666px;width:23px;background:#d0d0d0"></div>
<svg style="left:1771px;top:670px" width="15" height="14" viewBox="0 0 15 14"><path d="M2.500 12 L11.500 3" stroke="#54595b" stroke-width="3.400" fill="none" stroke-linecap="round"/><path d="M5.500 1.500 H13.500 V9.500 Z" fill="#54595b"/></svg>
<svg style="left:1141px;top:695px" width="727" height="325" viewBox="1141 695 727 325">
<rect x="1250" y="713" width="596" height="233" fill="#ffffff"/>
<rect x="1250.0" y="713" width="19.3" height="233" fill="#000" opacity="0.019"/>
<rect x="1321.8" y="713" width="52.5" height="233" fill="#000" opacity="0.019"/>
<rect x="1426.7" y="713" width="52.5" height="233" fill="#000" opacity="0.019"/>
<rect x="1531.6" y="713" width="52.5" height="233" fill="#000" opacity="0.019"/>
<rect x="1636.6" y="713" width="52.5" height="233" fill="#000" opacity="0.019"/>
<rect x="1741.5" y="713" width="52.5" height="233" fill="#000" opacity="0.019"/>
<rect x="1250" y="715.8" width="596" height="38.5" fill="#000" opacity="0.019"/>
<rect x="1250" y="792.8" width="596" height="38.5" fill="#000" opacity="0.019"/>
<rect x="1250" y="869.8" width="596" height="38.5" fill="#000" opacity="0.019"/>
<path d="M1250 715.8 H1846" stroke="#ecd0d0" stroke-width="1" stroke-dasharray="3 1.500" fill="none"/>
<path d="M1250 754.3 H1846" stroke="#ecd0d0" stroke-width="1" stroke-dasharray="3 1.500" fill="none"/>
<path d="M1250 792.8 H1846" stroke="#ecd0d0" stroke-width="1" stroke-dasharray="3 1.500" fill="none"/>
<path d="M1250 831.3 H1846" stroke="#ecd0d0" stroke-width="1" stroke-dasharray="3 1.500" fill="none"/>
<path d="M1250 869.8 H1846" stroke="#ecd0d0" stroke-width="1" stroke-dasharray="3 1.500" fill="none"/>
<path d="M1250 908.3 H1846" stroke="#ecd0d0" stroke-width="1" stroke-dasharray="3 1.500" fill="none"/>
<path d="M1269.3 713 V946" stroke="#9ccdf8" stroke-width="1.200" stroke-dasharray="6 1.500" fill="none"/>
<path d="M1321.8 713 V946" stroke="#cfe6fb" stroke-width="1.100" stroke-dasharray="2.500 1.500" fill="none"/>
<path d="M1374.2 713 V946" stroke="#cfe6fb" stroke-width="1.100" stroke-dasharray="2.500 1.500" fill="none"/>
<path d="M1426.7 713 V946" stroke="#cfe6fb" stroke-width="1.100" stroke-dasharray="2.500 1.500" fill="none"/>
<path d="M1479.2 713 V946" stroke="#cfe6fb" stroke-width="1.100" stroke-dasharray="2.500 1.500" fill="none"/>
<path d="M1531.6 713 V946" stroke="#cfe6fb" stroke-width="1.100" stroke-dasharray="2.500 1.500" fill="none"/>
<path d="M1584.1 713 V946" stroke="#cfe6fb" stroke-width="1.100" stroke-dasharray="2.500 1.500" fill="none"/>
<path d="M1636.6 713 V946" stroke="#cfe6fb" stroke-width="1.100" stroke-dasharray="2.500 1.500" fill="none"/>
<path d="M1689.1 713 V946" stroke="#cfe6fb" stroke-width="1.100" stroke-dasharray="2.500 1.500" fill="none"/>
<path d="M1741.5 713 V946" stroke="#cfe6fb" stroke-width="1.100" stroke-dasharray="2.500 1.500" fill="none"/>
<path d="M1794.0 713 V946" stroke="#cfe6fb" stroke-width="1.100" stroke-dasharray="2.500 1.500" fill="none"/>
<path d="M1286.8 909.1 L1304.3 907.8 L1321.8 906.5 L1339.3 909.1 L1356.8 910.4 L1374.2 909.3 L1391.7 910.1 L1409.2 909.1 L1426.7 910.1 L1444.2 907.8 L1461.7 897.6 L1479.2 890.0 L1496.7 889.2 L1514.2 893.9 L1531.6 903.8 L1549.1 914.9 L1566.6 915.3 L1584.1 919.4 L1601.6 920.7 L1619.1 923.1 L1636.6 922.7 L1654.1 924.8 L1671.6 926.4 L1689.1 928.1 L1706.5 930.1 L1724.0 931.8 L1741.5 932.6 L1759.0 932.2 L1776.5 932.2 L1794.0 935.1" fill="none" stroke="#008000" stroke-width="2.200" stroke-linejoin="round"/><circle cx="1286.8" cy="909.1" r="3.5" fill="#008000"/><circle cx="1304.3" cy="907.8" r="3.5" fill="#008000"/><circle cx="1321.8" cy="906.5" r="3.5" fill="#008000"/><circle cx="1339.3" cy="909.1" r="3.5" fill="#008000"/><circle cx="1356.8" cy="910.4" r="3.5" fill="#008000"/><circle cx="1374.2" cy="909.3" r="3.5" fill="#008000"/><circle cx="1391.7" cy="910.1" r="3.5" fill="#008000"/><circle cx="1409.2" cy="909.1" r="3.5" fill="#008000"/><circle cx="1426.7" cy="910.1" r="3.5" fill="#008000"/><circle cx="1444.2" cy="907.8" r="3.5" fill="#008000"/><circle cx="1461.7" cy="897.6" r="3.5" fill="#008000"/><circle cx="1479.2" cy="890.0" r="3.5" fill="#008000"/><circle cx="1496.7" cy="889.2" r="5.8" fill="#008000"/><circle cx="1514.2" cy="893.9" r="3.5" fill="#008000"/><circle cx="1531.6" cy="903.8" r="3.5" fill="#008000"/><circle cx="1549.1" cy="914.9" r="3.5" fill="#008000"/><circle cx="1566.6" cy="915.3" r="3.5" fill="#008000"/><circle cx="1584.1" cy="919.4" r="3.5" fill="#008000"/><circle cx="1601.6" cy="920.7" r="3.5" fill="#008000"/><circle cx="1619.1" cy="923.1" r="3.5" fill="#008000"/><circle cx="1636.6" cy="922.7" r="3.5" fill="#008000"/><circle cx="1654.1" cy="924.8" r="3.5" fill="#008000"/><circle cx="1671.6" cy="926.4" r="3.5" fill="#008000"/><circle cx="1689.1" cy="928.1" r="3.5" fill="#008000"/><circle cx="1706.5" cy="930.1" r="3.5" fill="#008000"/><circle cx="1724.0" cy="931.8" r="3.5" fill="#008000"/><circle cx="1741.5" cy="932.6" r="3.5" fill="#008000"/><circle cx="1759.0" cy="932.2" r="3.5" fill="#008000"/><circle cx="1776.5" cy="932.2" r="3.5" fill="#008000"/><circle cx="1794.0" cy="935.1" r="5.8" fill="#008000"/>
<path d="M1286.8 885.6 L1304.3 896.8 L1321.8 898.9 L1339.3 896.3 L1356.8 895.1 L1374.2 895.6 L1391.7 893.8 L1409.2 890.0 L1426.7 890.0 L1444.2 886.6 L1461.7 885.9 L1479.2 882.0 L1496.7 877.2 L1514.2 877.9 L1531.6 881.6 L1549.1 888.6 L1566.6 898.0 L1584.1 897.6 L1601.6 896.0 L1619.1 895.1 L1636.6 898.4 L1654.1 900.5 L1671.6 901.3 L1689.1 898.0 L1706.5 902.1 L1724.0 901.3 L1741.5 904.6 L1759.0 906.3 L1776.5 906.3 L1794.0 908.3 L1811.5 910.8 L1829.0 908.3" fill="none" stroke="#0000ff" stroke-width="2.200" stroke-linejoin="round"/><circle cx="1286.8" cy="885.6" r="3.5" fill="#0000ff"/><circle cx="1304.3" cy="896.8" r="3.5" fill="#0000ff"/><circle cx="1321.8" cy="898.9" r="3.5" fill="#0000ff"/><circle cx="1339.3" cy="896.3" r="3.5" fill="#0000ff"/><circle cx="1356.8" cy="895.1" r="3.5" fill="#0000ff"/><circle cx="1374.2" cy="895.6" r="3.5" fill="#0000ff"/><circle cx="1391.7" cy="893.8" r="3.5" fill="#0000ff"/><circle cx="1409.2" cy="890.0" r="3.5" fill="#0000ff"/><circle cx="1426.7" cy="890.0" r="3.5" fill="#0000ff"/><circle cx="1444.2" cy="886.6" r="3.5" fill="#0000ff"/><circle cx="1461.7" cy="885.9" r="3.5" fill="#0000ff"/><circle cx="1479.2" cy="882.0" r="3.5" fill="#0000ff"/><circle cx="1496.7" cy="877.2" r="5.8" fill="#0000ff"/><circle cx="1514.2" cy="877.9" r="3.5" fill="#0000ff"/><circle cx="1531.6" cy="881.6" r="3.5" fill="#0000ff"/><circle cx="1549.1" cy="888.6" r="3.5" fill="#0000ff"/><circle cx="1566.6" cy="898.0" r="3.5" fill="#0000ff"/><circle cx="1584.1" cy="897.6" r="3.5" fill="#0000ff"/><circle cx="1601.6" cy="896.0" r="3.5" fill="#0000ff"/><circle cx="1619.1" cy="895.1" r="3.5" fill="#0000ff"/><circle cx="1636.6" cy="898.4" r="3.5" fill="#0000ff"/><circle cx="1654.1" cy="900.5" r="3.5" fill="#0000ff"/><circle cx="1671.6" cy="901.3" r="3.5" fill="#0000ff"/><circle cx="1689.1" cy="898.0" r="3.5" fill="#0000ff"/><circle cx="1706.5" cy="902.1" r="3.5" fill="#0000ff"/><circle cx="1724.0" cy="901.3" r="3.5" fill="#0000ff"/><circle cx="1741.5" cy="904.6" r="3.5" fill="#0000ff"/><circle cx="1759.0" cy="906.3" r="3.5" fill="#0000ff"/><circle cx="1776.5" cy="906.3" r="3.5" fill="#0000ff"/><circle cx="1794.0" cy="908.3" r="3.5" fill="#0000ff"/><circle cx="1811.5" cy="910.8" r="5.8" fill="#0000ff"/><circle cx="1829.0" cy="908.3" r="3.5" fill="#0000ff"/>
<path d="M1286.8 770.1 L1304.3 768.8 L1321.8 767.8 L1339.3 766.8 L1356.8 765.8 L1374.2 763.7 L1391.7 763.0 L1409.2 762.2 L1426.7 761.7 L1444.2 761.2 L1461.7 759.9 L1479.2 760.4 L1496.7 757.9 L1514.2 750.2 L1531.6 737.0 L1549.1 735.5 L1566.6 738.8 L1584.1 744.1 L1601.6 755.2 L1619.1 770.5 L1636.6 777.0 L1654.1 782.0 L1671.6 784.0 L1689.1 786.5 L1706.5 788.1 L1724.0 791.0 L1741.5 792.7 L1759.0 784.9 L1776.5 769.2" fill="none" stroke="#ff0000" stroke-width="2.200" stroke-linejoin="round"/><circle cx="1286.8" cy="770.1" r="3.5" fill="#ff0000"/><circle cx="1304.3" cy="768.8" r="3.5" fill="#ff0000"/><circle cx="1321.8" cy="767.8" r="3.5" fill="#ff0000"/><circle cx="1339.3" cy="766.8" r="3.5" fill="#ff0000"/><circle cx="1356.8" cy="765.8" r="3.5" fill="#ff0000"/><circle cx="1374.2" cy="763.7" r="3.5" fill="#ff0000"/><circle cx="1391.7" cy="763.0" r="3.5" fill="#ff0000"/><circle cx="1409.2" cy="762.2" r="3.5" fill="#ff0000"/><circle cx="1426.7" cy="761.7" r="3.5" fill="#ff0000"/><circle cx="1444.2" cy="761.2" r="3.5" fill="#ff0000"/><circle cx="1461.7" cy="759.9" r="3.5" fill="#ff0000"/><circle cx="1479.2" cy="760.4" r="3.5" fill="#ff0000"/><circle cx="1496.7" cy="757.9" r="3.5" fill="#ff0000"/><circle cx="1514.2" cy="750.2" r="3.5" fill="#ff0000"/><circle cx="1531.6" cy="737.0" r="3.5" fill="#ff0000"/><circle cx="1549.1" cy="735.5" r="5.8" fill="#ff0000"/><circle cx="1566.6" cy="738.8" r="3.5" fill="#ff0000"/><circle cx="1584.1" cy="744.1" r="3.5" fill="#ff0000"/><circle cx="1601.6" cy="755.2" r="3.5" fill="#ff0000"/><circle cx="1619.1" cy="770.5" r="3.5" fill="#ff0000"/><circle cx="1636.6" cy="777.0" r="3.5" fill="#ff0000"/><circle cx="1654.1" cy="782.0" r="3.5" fill="#ff0000"/><circle cx="1671.6" cy="784.0" r="3.5" fill="#ff0000"/><circle cx="1689.1" cy="786.5" r="3.5" fill="#ff0000"/><circle cx="1706.5" cy="788.1" r="3.5" fill="#ff0000"/><circle cx="1724.0" cy="791.0" r="3.5" fill="#ff0000"/><circle cx="1741.5" cy="792.7" r="5.8" fill="#ff0000"/><circle cx="1759.0" cy="784.9" r="3.5" fill="#ff0000"/><circle cx="1776.5" cy="769.2" r="3.5" fill="#ff0000"/>
<path d="M1286.8 784.1 L1304.3 782.9 L1321.8 781.6 L1339.3 780.1 L1356.8 776.5 L1374.2 776.5 L1391.7 775.0 L1409.2 774.2 L1426.7 771.6 L1444.2 763.7 L1461.7 739.8 L1479.2 728.0 L1496.7 725.0 L1514.2 725.0 L1531.6 730.1 L1549.1 738.8 L1566.6 761.4 L1584.1 775.8 L1601.6 780.7 L1619.1 783.6 L1636.6 789.0 L1654.1 791.9 L1671.6 792.7 L1689.1 786.9 L1706.5 766.7 L1724.0 751.5 L1741.5 749.1 L1759.0 751.1 L1776.5 754.4 L1794.0 763.0 L1811.5 773.7" fill="none" stroke="#800000" stroke-width="2.200" stroke-linejoin="round"/><circle cx="1286.8" cy="784.1" r="3.5" fill="#800000"/><circle cx="1304.3" cy="782.9" r="3.5" fill="#800000"/><circle cx="1321.8" cy="781.6" r="3.5" fill="#800000"/><circle cx="1339.3" cy="780.1" r="3.5" fill="#800000"/><circle cx="1356.8" cy="776.5" r="3.5" fill="#800000"/><circle cx="1374.2" cy="776.5" r="3.5" fill="#800000"/><circle cx="1391.7" cy="775.0" r="3.5" fill="#800000"/><circle cx="1409.2" cy="774.2" r="3.5" fill="#800000"/><circle cx="1426.7" cy="771.6" r="3.5" fill="#800000"/><circle cx="1444.2" cy="763.7" r="3.5" fill="#800000"/><circle cx="1461.7" cy="739.8" r="3.5" fill="#800000"/><circle cx="1479.2" cy="728.0" r="3.5" fill="#800000"/><circle cx="1496.7" cy="725.0" r="5.8" fill="#800000"/><circle cx="1514.2" cy="725.0" r="3.5" fill="#800000"/><circle cx="1531.6" cy="730.1" r="3.5" fill="#800000"/><circle cx="1549.1" cy="738.8" r="3.5" fill="#800000"/><circle cx="1566.6" cy="761.4" r="3.5" fill="#800000"/><circle cx="1584.1" cy="775.8" r="3.5" fill="#800000"/><circle cx="1601.6" cy="780.7" r="3.5" fill="#800000"/><circle cx="1619.1" cy="783.6" r="3.5" fill="#800000"/><circle cx="1636.6" cy="789.0" r="3.5" fill="#800000"/><circle cx="1654.1" cy="791.9" r="3.5" fill="#800000"/><circle cx="1671.6" cy="792.7" r="5.8" fill="#800000"/><circle cx="1689.1" cy="786.9" r="3.5" fill="#800000"/><circle cx="1706.5" cy="766.7" r="3.5" fill="#800000"/><circle cx="1724.0" cy="751.5" r="3.5" fill="#800000"/><circle cx="1741.5" cy="749.1" r="3.5" fill="#800000"/><circle cx="1759.0" cy="751.1" r="3.5" fill="#800000"/><circle cx="1776.5" cy="754.4" r="3.5" fill="#800000"/><circle cx="1794.0" cy="763.0" r="3.5" fill="#800000"/><circle cx="1811.5" cy="773.7" r="3.5" fill="#800000"/>
<path d="M1249.5 712.5 H1846 M1249.5 712 V947" stroke="#000" stroke-width="1.400" fill="none"/>
<path d="M1249 946.3 H1846" stroke="#000" stroke-width="1.800" fill="none"/>
<text x="1246" y="723.0" text-anchor="end" font-size="17.900" fill="#f3d6d6" font-family="Liberation Sans, sans-serif">149.40</text>
<text x="1246" y="761.5" text-anchor="end" font-size="17.900" fill="#f3d6d6" font-family="Liberation Sans, sans-serif">141.10</text>
<text x="1246" y="799.9" text-anchor="end" font-size="17.900" fill="#f3d6d6" font-family="Liberation Sans, sans-serif">132.80</text>
<text x="1246" y="838.4" text-anchor="end" font-size="17.900" fill="#f3d6d6" font-family="Liberation Sans, sans-serif">124.50</text>
<text x="1246" y="876.8" text-anchor="end" font-size="17.900" fill="#f3d6d6" font-family="Liberation Sans, sans-serif">116.20</text>
<text x="1246" y="915.2" text-anchor="end" font-size="17.900" fill="#f3d6d6" font-family="Liberation Sans, sans-serif">107.90</text>
<text transform="translate(1275.5 951) rotate(-90)" text-anchor="end" font-size="18.300" fill="#ececec" font-family="Liberation Sans, sans-serif">0</text>
<text transform="translate(1328.0 951) rotate(-90)" text-anchor="end" font-size="18.300" fill="#ececec" font-family="Liberation Sans, sans-serif">3</text>
<text transform="translate(1380.4 951) rotate(-90)" text-anchor="end" font-size="18.300" fill="#ececec" font-family="Liberation Sans, sans-serif">6</text>
<text transform="translate(1432.9 951) rotate(-90)" text-anchor="end" font-size="18.300" fill="#ececec" font-family="Liberation Sans, sans-serif">9</text>
<text transform="translate(1485.4 951) rotate(-90)" text-anchor="end" font-size="18.300" fill="#ececec" font-family="Liberation Sans, sans-serif">12</text>
<text transform="translate(1537.8 951) rotate(-90)" text-anchor="end" font-size="18.300" fill="#ececec" font-family="Liberation Sans, sans-serif">15</text>
<text transform="translate(1590.3 951) rotate(-90)" text-anchor="end" font-size="18.300" fill="#ececec" font-family="Liberation Sans, sans-serif">18</text>
<text transform="translate(1642.8 951) rotate(-90)" text-anchor="end" font-size="18.300" fill="#ececec" font-family="Liberation Sans, sans-serif">21</text>
<text transform="translate(1695.3 951) rotate(-90)" text-anchor="end" font-size="18.300" fill="#ececec" font-family="Liberation Sans, sans-serif">24</text>
<text transform="translate(1747.7 951) rotate(-90)" text-anchor="end" font-size="18.300" fill="#ececec" font-family="Liberation Sans, sans-serif">27</text>
<text transform="translate(1800.2 951) rotate(-90)" text-anchor="end" font-size="18.300" fill="#ececec" font-family="Liberation Sans, sans-serif">30</text>
<text transform="translate(1852.7 951) rotate(-90)" text-anchor="end" font-size="18.300" fill="#ececec" font-family="Liberation Sans, sans-serif">33</text>
<text transform="translate(1169.500 828) rotate(-90)" text-anchor="middle" font-size="17.500" font-weight="bold" fill="#f4f4f4" font-family="Liberation Sans, Noto Sans CJK SC, sans-serif">温度 [ °C ]</text>
<text x="1548" y="1003.500" text-anchor="middle" font-size="16" font-weight="bold" fill="#f4f4f4" font-family="Liberation Sans, Noto Sans CJK SC, sans-serif">像素</text>
</svg>
</body></html>
